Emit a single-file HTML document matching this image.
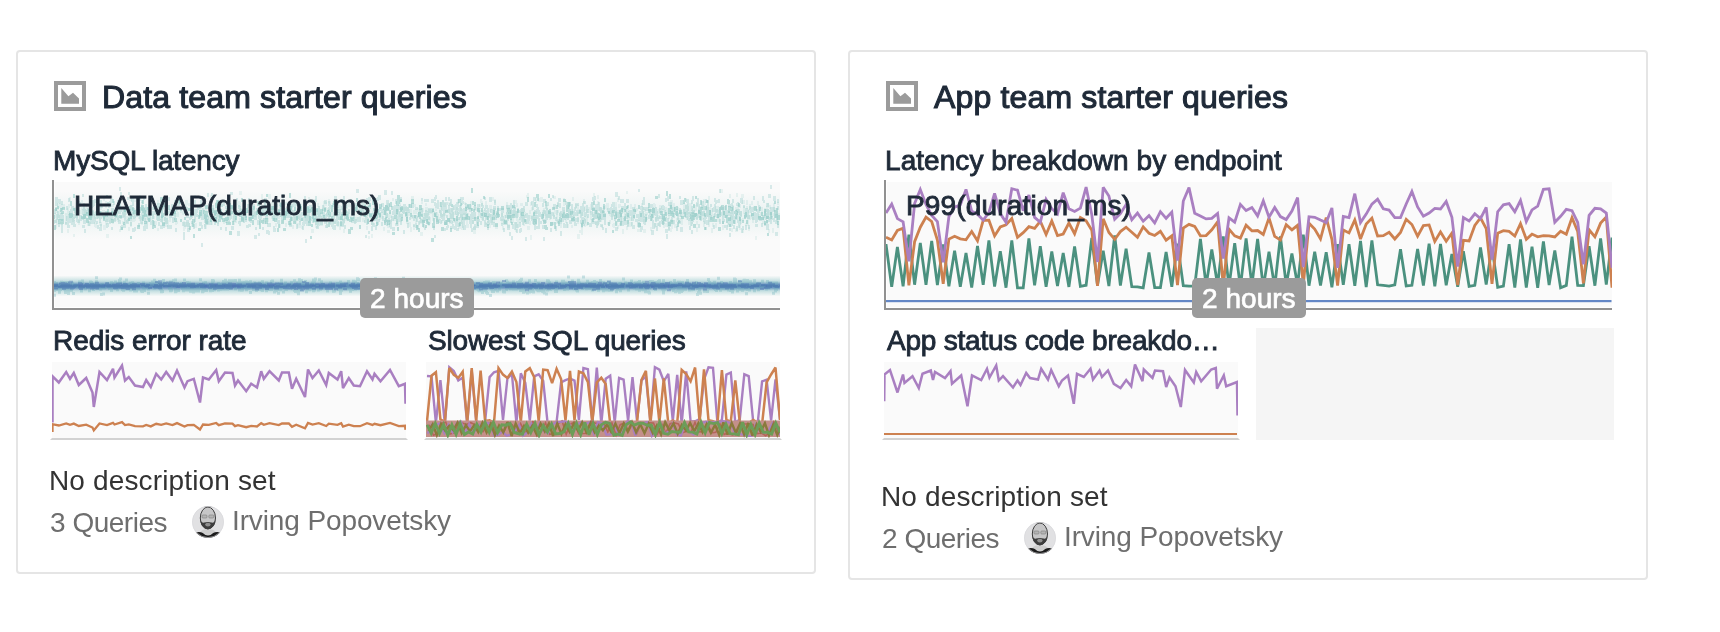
<!DOCTYPE html><html lang="en"><head><meta charset="utf-8"><title>Boards</title><style>
html,body{margin:0;padding:0;background:#fff}
body{width:1720px;height:632px;position:relative;overflow:hidden;font-family:"Liberation Sans",sans-serif}
.card{position:absolute;box-sizing:border-box;border:2px solid #e5e5e5;border-radius:4px;background:#fff}
.t{position:absolute;white-space:nowrap;margin:0;will-change:transform;-webkit-font-smoothing:antialiased}
.badge{position:absolute;background:#9b9b9b;border-radius:5px}
.ph{position:absolute;background:#f5f5f5}
svg{position:absolute;left:0;top:0}
</style></head><body><div class="card" style="left:16px;top:50px;width:800px;height:524px"></div><div class="card" style="left:848px;top:50px;width:800px;height:530px"></div><div class="ph" style="left:1256px;top:328px;width:358px;height:112px"></div><svg width="1720" height="632" viewBox="0 0 1720 632"><defs><linearGradient id="bandg" x1="0" y1="0" x2="0" y2="1"><stop offset="0" stop-color="#7fc1ba" stop-opacity="0"/><stop offset="0.27" stop-color="#6fb3ba" stop-opacity="0.4"/><stop offset="0.41" stop-color="#4d7fb5" stop-opacity="0.8"/><stop offset="0.5" stop-color="#466fae" stop-opacity="0.92"/><stop offset="0.59" stop-color="#4d7fb5" stop-opacity="0.8"/><stop offset="0.73" stop-color="#6fb3ba" stop-opacity="0.4"/><stop offset="1" stop-color="#7fc1ba" stop-opacity="0"/></linearGradient><linearGradient id="cloudg" x1="0" y1="0" x2="0" y2="1"><stop offset="0" stop-color="#86c5bf" stop-opacity="0"/><stop offset="0.3" stop-color="#86c5bf" stop-opacity="0.09"/><stop offset="0.5" stop-color="#86c5bf" stop-opacity="0.14"/><stop offset="0.7" stop-color="#86c5bf" stop-opacity="0.09"/><stop offset="1" stop-color="#86c5bf" stop-opacity="0"/></linearGradient><filter id="soft" x="-2%" y="-2%" width="104%" height="104%"><feGaussianBlur stdDeviation="0.55"/></filter><radialGradient id="av" cx="0.5" cy="0.45" r="0.5"><stop offset="0" stop-color="#8d8d8d"/><stop offset="0.5" stop-color="#7a7a7a"/><stop offset="1" stop-color="#cfcfcf"/></radialGradient><clipPath id="c1"><rect x="54" y="182" width="726" height="125"/></clipPath><clipPath id="c2"><rect x="886" y="182" width="726" height="125"/></clipPath><clipPath id="c3"><rect x="52" y="362" width="354" height="76"/></clipPath><clipPath id="c4"><rect x="426" y="362" width="354" height="76"/></clipPath><clipPath id="c5"><rect x="884" y="362" width="354" height="76"/></clipPath><clipPath id="ca"><circle cx="16" cy="16" r="15.9"/></clipPath></defs><g transform="translate(54,81)"><rect x="2" y="2" width="28" height="26" fill="#fff" stroke="#9b9b9b" stroke-width="4"/><path d="M7.3 7 L14.4 15.3 L19 11.7 L25 17.4 V22.7 H7.3 Z" fill="#9b9b9b"/></g><g transform="translate(886,81)"><rect x="2" y="2" width="28" height="26" fill="#fff" stroke="#9b9b9b" stroke-width="4"/><path d="M7.3 7 L14.4 15.3 L19 11.7 L25 17.4 V22.7 H7.3 Z" fill="#9b9b9b"/></g><rect x="55" y="182" width="725" height="125" fill="#fafafa"/><g clip-path="url(#c1)"><rect x="54" y="191" width="726" height="48" fill="url(#cloudg)"/><g filter="url(#soft)"><path d="M516 203h2v4h-2zM752 217h2v5h-2zM674 224h3v4h-3zM117 215h2v4h-2zM419 205h2v3h-2zM108 211h2v4h-2zM496 212h3v3h-3zM764 208h2v5h-2zM588 207h3v3h-3zM129 197h3v4h-3zM278 215h2v4h-2zM126 209h2v4h-2zM695 207h2v4h-2zM166 216h2v5h-2zM458 224h3v5h-3zM641 203h2v4h-2zM703 221h2v3h-2zM308 216h2v4h-2zM627 221h2v5h-2zM396 213h2v3h-2zM143 213h2v3h-2zM145 216h3v5h-3zM515 211h3v5h-3zM387 203h2v4h-2zM642 211h2v3h-2zM183 228h2v3h-2zM452 216h2v4h-2zM325 202h2v4h-2zM151 195h2v4h-2zM466 218h2v5h-2zM392 198h2v3h-2zM749 216h2v4h-2zM119 229h2v3h-2zM183 221h2v4h-2zM130 205h3v5h-3zM313 211h2v5h-2zM419 220h3v4h-3zM688 220h2v5h-2zM667 210h2v4h-2zM645 212h2v4h-2zM448 202h3v4h-3zM199 212h2v5h-2zM74 211h3v3h-3zM131 212h3v5h-3zM643 229h3v4h-3zM749 204h2v5h-2zM590 204h2v5h-2zM560 224h2v4h-2zM132 216h3v4h-3zM440 207h2v3h-2zM176 209h2v3h-2zM226 213h2v5h-2zM72 217h2v5h-2zM482 214h2v4h-2zM274 198h2v4h-2zM670 200h3v5h-3zM248 215h3v5h-3zM742 218h2v3h-2zM285 202h3v3h-3zM776 218h2v4h-2zM132 213h3v4h-3zM652 214h2v4h-2zM234 213h2v5h-2zM114 210h2v4h-2zM777 202h2v3h-2zM517 220h2v4h-2zM148 204h2v3h-2zM763 217h2v5h-2zM709 214h3v3h-3zM299 225h2v3h-2zM453 212h2v3h-2zM322 208h3v4h-3zM749 215h3v4h-3zM154 221h2v4h-2zM703 223h2v4h-2zM456 214h2v5h-2zM234 216h2v3h-2zM559 213h3v3h-3zM542 210h2v4h-2zM336 211h2v3h-2zM731 216h2v4h-2zM657 215h3v4h-3zM730 215h2v4h-2zM662 209h2v3h-2zM350 216h2v3h-2zM261 219h3v4h-3zM477 218h2v4h-2zM53 213h2v4h-2zM368 213h2v3h-2zM422 218h2v4h-2zM454 211h2v3h-2zM199 207h3v4h-3zM685 198h2v3h-2zM188 224h2v5h-2zM463 213h3v4h-3zM495 224h3v5h-3zM347 202h3v5h-3zM130 221h2v4h-2zM708 222h2v5h-2zM295 220h2v4h-2zM86 218h2v4h-2zM241 217h3v3h-3zM695 213h3v5h-3zM177 212h2v4h-2zM658 211h2v3h-2zM508 207h2v4h-2zM263 213h2v3h-2zM371 234h2v4h-2zM567 224h2v4h-2zM753 206h2v4h-2zM510 219h3v4h-3zM425 213h2v5h-2zM624 212h3v4h-3zM228 206h2v3h-2zM326 208h2v5h-2zM316 212h2v4h-2zM397 222h2v4h-2zM764 222h2v3h-2zM710 208h3v5h-3zM208 215h2v4h-2zM115 217h2v4h-2zM589 209h2v4h-2zM654 204h2v4h-2zM535 211h2v5h-2zM572 217h2v3h-2zM494 199h2v4h-2zM777 219h2v3h-2zM668 225h2v5h-2zM767 212h2v5h-2zM132 213h2v4h-2zM609 213h3v3h-3zM264 205h2v4h-2zM507 224h3v4h-3zM53 217h2v4h-2zM305 217h2v3h-2zM161 201h2v5h-2zM760 212h2v4h-2zM752 220h2v3h-2zM694 213h2v4h-2zM772 213h2v3h-2zM232 219h3v3h-3zM279 205h2v4h-2zM685 204h3v5h-3zM612 214h2v3h-2zM680 209h2v3h-2zM160 204h2v4h-2zM175 204h2v5h-2zM185 203h2v4h-2zM105 201h2v4h-2zM518 220h3v3h-3zM378 213h2v4h-2zM457 211h2v4h-2zM417 213h2v5h-2zM757 201h2v4h-2zM265 200h2v3h-2zM67 212h2v3h-2zM235 201h3v4h-3zM548 212h2v5h-2zM164 216h2v5h-2zM409 222h2v5h-2zM103 211h2v5h-2zM232 205h2v3h-2zM232 216h2v4h-2zM280 213h2v4h-2zM329 220h2v4h-2zM457 199h2v5h-2zM114 216h2v5h-2zM417 208h3v4h-3zM563 202h2v4h-2zM514 205h2v4h-2zM343 229h2v4h-2zM89 222h2v4h-2zM627 215h2v3h-2zM706 207h3v5h-3zM65 213h3v3h-3zM489 205h3v5h-3zM689 203h3v3h-3zM564 213h3v3h-3zM595 222h2v3h-2zM479 211h2v4h-2zM737 205h2v4h-2zM268 194h3v5h-3zM85 217h2v3h-2zM493 208h3v3h-3zM529 210h2v4h-2zM134 199h2v3h-2zM601 209h2v4h-2zM599 216h2v4h-2zM284 216h2v4h-2zM534 221h2v4h-2zM611 211h2v5h-2zM572 197h2v4h-2zM763 215h2v4h-2zM107 203h2v3h-2zM75 207h2v4h-2zM563 198h2v5h-2zM466 221h2v4h-2zM643 219h2v3h-2zM657 209h3v4h-3zM581 222h2v3h-2zM723 212h2v4h-2zM715 206h2v4h-2zM342 208h2v4h-2zM670 203h3v4h-3zM491 217h3v5h-3zM275 223h2v4h-2zM742 229h2v4h-2zM554 210h2v4h-2zM549 213h2v5h-2zM300 204h2v5h-2zM264 218h2v4h-2zM572 215h2v5h-2zM584 216h3v5h-3zM747 215h3v5h-3zM216 213h3v4h-3zM458 219h2v5h-2zM123 213h2v4h-2zM686 205h2v4h-2zM352 210h2v4h-2zM441 220h2v3h-2zM324 207h3v3h-3zM139 195h2v4h-2zM766 215h2v4h-2zM354 219h2v4h-2zM597 216h2v4h-2zM315 213h2v5h-2zM158 206h2v4h-2zM366 226h2v4h-2zM698 209h3v4h-3zM430 210h2v4h-2zM377 214h3v4h-3zM318 208h2v5h-2zM56 207h2v3h-2zM228 221h2v3h-2zM715 224h2v4h-2zM243 211h3v5h-3zM610 214h2v3h-2zM424 217h2v4h-2zM54 214h2v4h-2zM312 213h2v3h-2zM553 213h2v4h-2zM166 212h2v3h-2zM563 210h2v3h-2zM652 213h3v3h-3zM88 204h2v3h-2zM466 221h2v3h-2zM465 206h2v4h-2zM702 214h2v5h-2zM309 219h2v3h-2zM308 219h3v4h-3zM651 212h2v4h-2zM699 206h2v5h-2zM233 221h2v4h-2zM543 208h2v5h-2zM522 212h2v5h-2zM139 216h2v5h-2zM470 201h2v4h-2zM532 216h2v4h-2zM713 214h2v4h-2zM280 206h2v5h-2zM522 218h2v4h-2zM646 217h2v3h-2zM493 212h3v5h-3zM619 223h2v3h-2zM146 215h2v3h-2zM218 213h2v3h-2zM328 209h3v4h-3zM739 211h3v5h-3zM280 211h2v4h-2zM557 210h2v3h-2zM311 214h2v4h-2zM336 213h2v4h-2zM673 210h2v4h-2zM114 215h2v4h-2zM295 211h2v4h-2zM692 213h3v4h-3zM627 207h2v5h-2zM368 236h2v3h-2zM642 207h2v5h-2zM85 208h2v5h-2zM617 198h2v4h-2zM437 214h2v4h-2zM568 209h3v5h-3zM615 222h3v3h-3zM538 198h2v4h-2zM712 223h2v4h-2zM465 217h2v4h-2zM510 216h2v4h-2zM97 215h3v4h-3zM451 208h3v4h-3zM225 210h2v4h-2zM540 197h3v5h-3zM271 214h2v5h-2zM345 205h3v4h-3zM419 206h2v4h-2zM773 203h2v5h-2zM569 202h2v4h-2zM515 214h2v3h-2zM387 224h3v4h-3zM515 223h3v4h-3zM708 196h2v4h-2zM217 200h2v3h-2zM103 225h3v5h-3zM136 197h2v3h-2zM81 207h2v3h-2zM56 219h3v3h-3zM169 218h2v4h-2zM231 211h2v4h-2zM740 219h2v5h-2zM396 221h2v4h-2zM559 212h2v5h-2zM488 214h3v3h-3zM371 222h2v3h-2zM493 213h2v4h-2zM157 209h2v3h-2zM766 206h2v5h-2zM461 226h3v4h-3zM161 205h3v5h-3zM141 202h2v4h-2zM273 208h2v5h-2zM239 218h2v4h-2zM591 202h3v4h-3zM739 212h2v4h-2zM596 212h3v3h-3zM520 203h3v3h-3zM165 224h3v3h-3zM436 212h2v4h-2zM240 208h2v4h-2zM90 206h2v5h-2zM128 215h2v4h-2zM73 234h2v3h-2zM626 191h2v3h-2zM407 212h3v4h-3zM472 219h2v5h-2zM346 212h3v5h-3zM117 218h2v4h-2zM59 210h2v4h-2zM372 220h2v5h-2zM509 209h3v5h-3zM690 210h2v4h-2zM702 207h3v3h-3zM666 210h2v5h-2zM581 212h3v4h-3zM428 209h3v3h-3zM583 199h2v5h-2zM470 205h2v4h-2zM597 222h2v4h-2zM535 198h2v5h-2zM54 213h2v4h-2zM418 210h2v3h-2zM533 211h3v3h-3zM89 209h2v4h-2zM597 195h2v4h-2zM259 205h2v4h-2zM296 216h2v5h-2zM164 205h2v3h-2zM133 216h3v5h-3zM390 219h2v3h-2zM594 214h3v5h-3zM60 204h2v5h-2zM512 216h2v5h-2zM133 215h2v4h-2zM162 216h3v5h-3zM711 212h2v4h-2zM57 206h2v4h-2zM523 222h2v4h-2zM679 218h3v3h-3zM451 214h3v3h-3zM761 207h2v3h-2zM218 202h3v4h-3zM105 211h3v3h-3zM680 219h3v4h-3zM769 205h2v4h-2zM662 218h3v3h-3zM219 201h2v4h-2zM452 220h3v3h-3zM460 222h3v4h-3zM158 217h2v4h-2zM299 219h2v3h-2zM577 218h2v4h-2zM676 218h3v4h-3zM211 221h2v4h-2zM204 224h2v3h-2zM319 213h3v4h-3zM340 217h3v4h-3zM128 227h2v4h-2zM644 209h2v3h-2zM305 208h2v3h-2zM266 218h3v4h-3zM643 213h2v4h-2zM91 211h3v4h-3zM122 221h2v3h-2zM291 203h2v4h-2zM708 220h2v5h-2zM366 214h2v3h-2zM515 200h2v4h-2zM743 206h2v4h-2zM620 212h2v4h-2zM105 204h2v4h-2zM173 208h2v3h-2zM688 206h2v5h-2zM251 208h2v4h-2zM449 213h2v5h-2zM294 217h3v5h-3zM768 229h2v4h-2zM630 204h2v5h-2zM272 209h2v5h-2zM622 216h2v3h-2zM333 221h3v3h-3zM361 207h3v4h-3zM97 213h3v3h-3zM388 214h3v4h-3zM531 207h2v4h-2zM643 214h2v4h-2zM386 213h2v4h-2zM204 208h3v4h-3zM343 219h2v5h-2zM621 218h2v4h-2zM403 207h3v4h-3zM323 203h2v5h-2zM284 214h2v3h-2zM661 218h3v3h-3zM381 212h2v4h-2zM770 212h3v5h-3zM289 221h3v5h-3zM67 211h3v4h-3zM358 210h3v4h-3zM730 211h3v3h-3zM210 195h2v4h-2zM460 217h2v5h-2zM206 221h3v3h-3zM173 213h3v3h-3zM506 209h2v5h-2zM718 207h2v3h-2zM223 220h2v4h-2zM116 206h2v4h-2zM375 212h3v4h-3zM732 205h2v5h-2zM84 211h3v4h-3zM602 209h3v5h-3zM510 217h3v4h-3zM575 204h3v5h-3zM678 212h3v4h-3zM166 197h2v4h-2zM126 216h2v3h-2zM527 226h3v4h-3zM683 207h2v5h-2zM659 206h2v4h-2zM57 216h2v4h-2zM113 214h2v5h-2zM483 213h3v4h-3zM619 204h2v3h-2zM723 210h2v3h-2zM234 212h2v5h-2zM658 222h2v4h-2zM731 228h2v4h-2zM359 212h3v5h-3zM534 217h3v3h-3zM128 206h2v4h-2zM450 216h3v4h-3zM546 205h2v5h-2zM707 212h2v5h-2zM599 207h2v5h-2zM186 222h3v4h-3zM727 223h2v4h-2zM217 219h2v5h-2zM238 202h3v5h-3zM665 207h2v4h-2zM390 215h2v3h-2zM435 214h3v5h-3zM474 207h3v4h-3zM515 222h3v5h-3zM315 214h2v4h-2zM212 210h2v3h-2zM460 206h2v5h-2zM493 219h2v4h-2zM501 219h2v5h-2zM700 215h3v5h-3zM123 207h2v4h-2zM421 201h2v3h-2zM432 215h2v3h-2zM522 214h3v4h-3zM569 214h3v4h-3zM452 206h2v4h-2zM138 214h3v5h-3zM407 207h2v4h-2zM332 214h2v3h-2zM94 214h2v5h-2zM53 219h3v3h-3zM231 209h2v3h-2zM57 203h3v5h-3zM427 219h2v4h-2zM778 213h2v4h-2zM415 209h2v5h-2zM134 211h3v3h-3zM111 196h2v4h-2zM175 213h2v4h-2zM461 214h2v3h-2zM328 214h3v3h-3zM78 220h2v5h-2zM746 206h2v3h-2zM194 223h3v4h-3zM326 223h2v5h-2zM607 222h2v3h-2zM263 199h2v4h-2zM504 215h2v4h-2zM567 205h2v4h-2zM667 208h2v5h-2zM103 196h2v5h-2zM208 216h3v4h-3zM152 216h3v3h-3zM464 217h3v3h-3zM521 208h3v4h-3zM226 214h2v4h-2zM99 222h3v4h-3zM260 209h3v3h-3zM581 228h2v4h-2zM664 223h3v4h-3zM172 206h2v4h-2zM772 228h2v5h-2zM671 225h2v4h-2zM432 217h2v4h-2zM215 213h2v4h-2zM368 211h2v5h-2zM83 215h3v5h-3zM487 218h2v5h-2zM77 208h2v4h-2zM456 207h2v3h-2zM646 212h2v3h-2zM337 207h2v4h-2zM263 212h2v3h-2zM746 200h2v5h-2zM439 208h2v5h-2zM313 199h3v3h-3zM210 218h2v4h-2zM577 212h2v4h-2zM627 205h2v3h-2zM746 222h3v4h-3zM692 208h3v4h-3zM350 204h3v3h-3zM106 219h2v5h-2zM600 218h2v4h-2zM761 210h2v4h-2zM116 210h3v3h-3zM711 215h3v3h-3zM747 219h2v3h-2zM187 223h3v4h-3zM655 217h2v4h-2zM720 189h3v4h-3zM297 223h2v5h-2zM257 209h2v5h-2zM413 211h2v3h-2zM311 210h3v4h-3zM634 204h2v5h-2zM333 199h2v4h-2zM136 210h3v4h-3zM337 222h3v5h-3zM320 222h3v4h-3zM140 217h3v3h-3zM158 212h2v5h-2zM175 221h2v4h-2zM601 208h2v4h-2zM401 213h2v4h-2zM323 215h2v4h-2zM220 203h3v4h-3zM243 211h2v4h-2zM362 218h3v4h-3zM423 213h3v3h-3zM222 213h2v3h-2zM56 219h2v4h-2zM380 214h3v3h-3zM557 203h2v4h-2zM318 214h2v3h-2zM696 227h2v5h-2zM742 200h3v4h-3zM745 223h3v3h-3zM556 220h3v4h-3zM154 207h2v4h-2zM530 235h2v5h-2zM299 211h2v3h-2zM410 210h2v3h-2zM627 217h3v4h-3zM748 209h2v4h-2zM304 214h3v3h-3zM612 224h3v3h-3zM380 215h3v4h-3zM506 202h2v5h-2zM773 207h2v4h-2zM549 215h2v5h-2zM480 210h3v3h-3zM130 222h2v5h-2zM494 211h2v5h-2zM486 216h3v3h-3zM389 220h2v4h-2zM489 207h2v5h-2zM65 216h2v4h-2zM117 205h3v4h-3zM383 227h2v4h-2zM345 211h2v4h-2zM194 195h2v3h-2zM298 216h2v5h-2zM67 208h2v5h-2zM263 218h2v3h-2zM112 212h3v4h-3zM339 227h2v3h-2zM56 209h2v4h-2zM440 213h2v3h-2zM106 234h3v4h-3zM643 213h2v3h-2zM323 201h3v5h-3zM57 215h2v4h-2zM226 220h2v3h-2zM677 207h2v4h-2zM90 214h3v4h-3zM767 209h2v4h-2zM449 220h2v4h-2zM238 202h3v5h-3zM775 208h2v4h-2zM311 229h3v4h-3zM428 211h2v4h-2zM489 223h2v5h-2zM336 208h2v3h-2zM216 206h2v4h-2zM375 201h3v5h-3zM618 214h2v4h-2zM571 225h2v3h-2zM150 217h3v4h-3zM239 212h3v3h-3zM613 223h2v5h-2zM237 201h3v4h-3zM94 212h2v4h-2zM285 223h2v4h-2zM717 217h3v5h-3zM696 221h2v4h-2zM411 196h3v5h-3zM518 219h2v3h-2zM527 193h2v5h-2zM239 191h3v4h-3zM777 216h3v4h-3zM513 210h2v5h-2zM617 210h2v4h-2zM57 214h3v4h-3zM188 203h3v3h-3zM693 205h3v4h-3zM229 203h2v4h-2zM481 201h2v5h-2zM227 208h2v4h-2zM421 208h3v4h-3zM338 217h2v3h-2zM308 197h2v5h-2zM204 206h3v4h-3zM243 206h2v5h-2zM359 205h3v4h-3zM596 210h2v4h-2zM492 215h2v4h-2zM126 217h2v3h-2zM152 214h2v5h-2zM271 208h3v5h-3zM703 199h2v4h-2zM400 208h3v4h-3zM586 209h2v4h-2zM353 208h2v4h-2zM581 231h2v4h-2zM103 216h2v4h-2zM597 201h2v4h-2zM105 211h2v3h-2zM102 214h2v4h-2zM213 211h3v4h-3zM69 197h2v4h-2zM126 219h2v4h-2zM389 212h2v4h-2zM766 211h2v4h-2zM148 210h3v5h-3zM435 208h2v3h-2zM529 210h2v4h-2zM553 196h3v3h-3zM62 204h3v5h-3zM418 209h3v4h-3zM68 204h2v4h-2zM704 202h2v3h-2zM60 222h3v3h-3zM584 224h2v3h-2zM357 203h2v4h-2zM517 212h2v5h-2zM354 217h3v4h-3zM648 208h3v3h-3zM55 225h2v4h-2zM215 202h3v4h-3zM634 204h2v4h-2zM191 223h2v4h-2zM572 209h2v4h-2zM613 213h2v3h-2zM292 225h2v4h-2zM157 216h3v5h-3zM180 209h2v4h-2zM105 220h2v5h-2zM669 205h2v5h-2zM138 213h2v4h-2zM442 200h2v5h-2zM345 217h2v4h-2zM294 218h2v5h-2zM305 217h3v4h-3zM367 201h3v5h-3zM729 194h2v4h-2zM373 218h2v3h-2zM432 211h3v4h-3zM620 215h2v3h-2zM220 213h3v4h-3zM318 213h3v4h-3zM83 207h3v4h-3zM735 228h3v4h-3zM505 219h2v3h-2zM330 212h3v4h-3zM243 217h2v3h-2zM758 214h3v4h-3zM54 220h3v3h-3zM654 223h3v4h-3zM214 217h3v4h-3zM480 199h2v4h-2zM741 194h3v4h-3zM192 213h3v3h-3zM414 204h2v3h-2zM282 197h2v4h-2zM328 199h2v4h-2zM739 225h2v5h-2zM617 225h2v4h-2zM167 220h2v5h-2zM426 214h2v4h-2zM271 202h3v5h-3zM738 213h2v4h-2zM530 202h2v4h-2zM319 212h3v4h-3zM406 220h3v4h-3zM466 224h3v4h-3zM479 204h2v5h-2zM114 215h3v5h-3zM218 213h2v4h-2zM153 206h2v4h-2zM679 213h2v4h-2zM670 219h2v3h-2zM75 215h3v3h-3zM439 202h2v5h-2zM504 217h2v4h-2zM473 226h3v5h-3zM291 208h2v4h-2zM681 221h2v4h-2zM425 203h2v3h-2zM636 208h2v3h-2zM711 228h2v5h-2zM523 209h2v5h-2zM609 220h2v4h-2zM622 229h2v5h-2zM339 205h2v5h-2zM703 205h2v4h-2zM668 209h3v3h-3zM53 217h2v4h-2zM443 213h3v3h-3zM155 221h2v4h-2zM769 215h2v5h-2zM686 211h2v4h-2zM177 212h2v5h-2zM722 225h2v5h-2zM548 210h2v4h-2zM56 222h2v3h-2zM132 218h3v4h-3zM234 213h3v5h-3zM467 213h2v4h-2zM516 213h2v4h-2zM135 209h2v4h-2zM404 209h2v4h-2zM691 222h2v4h-2zM737 209h2v4h-2zM165 220h2v5h-2zM501 213h2v4h-2zM410 227h2v5h-2zM637 229h3v3h-3zM590 206h2v4h-2zM122 209h2v5h-2zM502 226h2v4h-2zM696 203h2v3h-2zM183 225h3v4h-3zM635 208h2v4h-2zM116 215h2v5h-2zM164 213h2v5h-2zM577 221h2v3h-2zM686 216h2v4h-2zM413 225h2v5h-2zM579 230h2v3h-2zM141 208h2v5h-2zM606 203h3v5h-3zM671 213h2v4h-2zM157 228h2v3h-2zM425 207h3v5h-3zM391 206h2v4h-2zM511 219h3v4h-3zM313 218h3v5h-3zM501 219h2v4h-2zM482 210h3v4h-3zM543 211h3v5h-3zM592 204h2v4h-2zM663 224h2v4h-2zM503 219h3v5h-3zM112 220h2v4h-2zM664 215h3v3h-3zM738 215h2v5h-2zM271 211h2v4h-2zM706 212h2v4h-2zM158 212h2v4h-2zM343 220h2v3h-2zM683 203h2v4h-2zM520 211h2v4h-2zM411 215h2v4h-2zM407 220h2v3h-2zM109 220h3v3h-3zM670 228h2v4h-2zM182 211h2v4h-2zM524 212h2v4h-2zM622 208h2v5h-2zM118 217h2v4h-2zM74 207h3v3h-3zM659 205h3v4h-3zM715 209h3v3h-3zM291 217h2v4h-2zM372 211h2v3h-2zM79 210h3v4h-3zM282 219h2v4h-2zM279 224h2v4h-2zM469 207h3v3h-3zM289 209h2v4h-2zM491 219h2v4h-2zM115 215h2v5h-2zM342 222h2v4h-2zM86 208h2v3h-2zM272 215h3v4h-3zM600 208h3v5h-3zM626 226h2v4h-2zM415 210h2v4h-2zM709 207h2v4h-2zM428 217h3v4h-3zM178 200h2v3h-2zM702 205h3v5h-3zM260 207h3v5h-3zM694 208h2v3h-2zM492 219h2v4h-2zM561 213h2v5h-2zM73 217h2v4h-2zM515 224h3v5h-3zM668 215h2v4h-2zM89 216h2v4h-2zM654 224h2v4h-2zM485 222h2v3h-2zM262 210h2v5h-2zM387 203h2v4h-2zM606 207h2v3h-2zM301 225h2v4h-2zM687 207h3v4h-3zM95 223h2v5h-2zM653 203h2v5h-2zM87 222h3v4h-3zM616 214h3v4h-3zM521 214h2v4h-2zM124 208h2v4h-2zM159 205h2v4h-2zM337 212h3v3h-3zM194 224h3v4h-3zM762 220h2v4h-2zM601 225h2v3h-2zM234 219h3v4h-3zM445 222h3v3h-3zM116 209h2v4h-2zM187 225h3v3h-3zM459 217h2v4h-2zM458 219h3v4h-3zM271 206h2v3h-2zM261 194h2v5h-2zM124 211h3v4h-3zM393 218h3v3h-3zM473 231h3v3h-3zM584 206h2v5h-2zM399 200h2v5h-2zM227 212h2v3h-2zM185 206h2v4h-2zM671 207h2v3h-2zM736 193h2v4h-2zM386 214h3v4h-3zM342 218h3v3h-3zM472 218h2v4h-2zM333 204h3v5h-3zM279 210h2v3h-2zM428 221h2v5h-2zM115 210h2v4h-2zM507 214h3v4h-3zM705 208h3v3h-3zM506 207h2v3h-2zM306 207h3v4h-3zM503 220h3v4h-3zM464 202h2v3h-2zM689 216h2v5h-2zM605 205h2v4h-2zM585 216h3v4h-3zM460 214h2v4h-2zM674 206h2v4h-2zM688 211h3v3h-3zM526 195h2v3h-2zM716 206h3v4h-3zM638 220h2v4h-2zM556 215h2v4h-2zM65 219h2v5h-2zM420 232h3v4h-3zM701 206h3v4h-3zM205 225h2v4h-2zM715 223h2v5h-2zM160 216h2v4h-2zM326 220h2v3h-2zM695 215h3v4h-3zM363 209h3v4h-3zM682 212h2v5h-2zM739 204h2v4h-2zM703 207h2v5h-2zM681 216h2v3h-2zM365 210h2v3h-2zM254 212h2v5h-2zM399 212h2v5h-2zM577 234h3v5h-3zM460 208h2v3h-2zM137 201h2v3h-2zM473 206h3v3h-3zM673 203h2v4h-2zM102 210h3v4h-3zM767 203h2v5h-2zM712 218h2v3h-2zM671 220h3v5h-3zM329 201h2v3h-2zM67 229h2v4h-2zM379 216h2v4h-2zM452 212h3v3h-3zM650 227h2v4h-2zM689 206h2v4h-2zM512 216h2v5h-2zM443 203h3v4h-3zM234 205h3v3h-3zM94 222h2v5h-2zM415 218h2v5h-2zM735 207h2v4h-2zM529 221h2v4h-2zM754 206h3v4h-3zM525 220h2v4h-2zM577 206h2v4h-2zM429 221h2v3h-2zM404 207h3v4h-3zM315 223h3v5h-3zM630 217h2v4h-2zM402 210h2v4h-2zM157 200h2v5h-2zM396 209h3v3h-3zM485 201h2v4h-2zM313 218h3v4h-3zM326 212h2v4h-2zM615 202h2v5h-2zM410 209h2v5h-2zM264 202h3v4h-3zM751 201h2v4h-2zM406 214h2v4h-2zM161 219h2v4h-2zM206 222h2v3h-2zM213 208h3v4h-3zM743 210h2v4h-2zM618 204h2v4h-2zM185 200h3v5h-3zM509 215h2v3h-2zM316 221h3v4h-3zM240 208h3v4h-3zM81 200h2v3h-2zM585 219h3v4h-3zM258 207h2v4h-2zM438 217h2v3h-2zM330 209h2v5h-2zM317 203h2v4h-2zM530 215h3v4h-3zM184 210h2v4h-2zM478 213h2v4h-2zM592 212h3v5h-3zM164 219h2v5h-2zM234 216h3v5h-3zM267 204h2v4h-2zM441 214h2v3h-2zM422 214h2v4h-2zM577 205h2v4h-2zM629 222h3v5h-3zM755 236h2v4h-2zM413 210h3v3h-3zM281 212h2v3h-2zM387 230h3v3h-3zM145 207h2v5h-2zM175 221h3v3h-3zM420 218h3v4h-3zM748 227h2v4h-2zM515 228h2v4h-2zM590 215h2v5h-2zM743 208h2v4h-2zM702 212h3v4h-3zM597 219h3v5h-3zM481 217h3v3h-3zM448 209h2v4h-2zM308 207h2v4h-2zM106 202h3v3h-3zM426 213h2v4h-2zM188 208h3v3h-3zM492 197h2v4h-2zM759 214h2v4h-2zM707 200h2v3h-2zM572 216h2v3h-2zM307 215h2v4h-2zM565 219h2v4h-2zM141 222h2v3h-2zM99 206h3v4h-3zM776 211h2v4h-2zM110 218h2v3h-2zM586 222h2v4h-2zM400 218h2v4h-2zM112 204h2v3h-2zM309 208h3v3h-3zM370 214h2v5h-2zM546 214h3v4h-3zM86 206h2v5h-2zM516 217h2v4h-2zM593 193h2v4h-2z" fill="#86c5bf" fill-opacity="0.16"/><path d="M225 206h2v3h-2zM492 210h2v4h-2zM192 210h2v5h-2zM603 211h2v4h-2zM619 215h3v5h-3zM571 206h2v5h-2zM358 217h3v5h-3zM477 204h3v3h-3zM753 212h3v3h-3zM571 216h2v4h-2zM143 226h3v5h-3zM363 205h2v3h-2zM492 213h2v4h-2zM387 219h2v3h-2zM503 221h3v4h-3zM732 209h2v4h-2zM451 221h2v3h-2zM326 213h3v4h-3zM483 213h2v4h-2zM187 213h2v5h-2zM281 214h2v4h-2zM299 214h2v4h-2zM358 209h2v5h-2zM304 205h2v5h-2zM447 225h2v3h-2zM177 207h2v3h-2zM434 197h2v4h-2zM144 223h2v3h-2zM509 214h2v4h-2zM501 211h2v3h-2zM673 220h2v4h-2zM105 217h3v5h-3zM478 210h2v3h-2zM630 210h3v5h-3zM91 203h2v5h-2zM557 220h2v3h-2zM732 216h3v4h-3zM435 203h2v5h-2zM632 225h3v4h-3zM521 208h3v5h-3zM236 198h2v3h-2zM354 203h3v5h-3zM166 208h2v4h-2zM122 212h2v4h-2zM731 218h3v5h-3zM485 205h3v4h-3zM698 210h2v4h-2zM615 227h3v4h-3zM402 210h3v3h-3zM706 212h2v5h-2zM244 214h3v4h-3zM57 211h2v5h-2zM144 218h2v4h-2zM108 205h2v3h-2zM600 224h3v3h-3zM537 210h3v4h-3zM455 208h2v3h-2zM559 203h2v5h-2zM742 226h2v4h-2zM513 224h3v5h-3zM197 207h2v3h-2zM628 211h3v4h-3zM420 211h3v3h-3zM111 227h2v3h-2zM337 214h3v3h-3zM443 202h2v5h-2zM184 222h2v5h-2zM437 205h2v4h-2zM757 214h2v5h-2zM494 215h2v4h-2zM96 221h2v3h-2zM191 212h3v3h-3zM765 214h2v5h-2zM418 213h2v4h-2zM528 216h2v5h-2zM450 199h2v5h-2zM659 209h2v4h-2zM134 214h2v4h-2zM670 203h2v4h-2zM392 212h2v3h-2zM115 214h2v4h-2zM652 211h3v4h-3zM264 221h2v3h-2zM444 210h2v3h-2zM300 217h3v4h-3zM729 218h2v4h-2zM741 228h2v5h-2zM187 223h3v3h-3zM156 215h2v5h-2zM366 221h2v4h-2zM747 210h2v3h-2zM389 223h3v4h-3zM728 204h2v3h-2zM201 211h2v4h-2zM379 212h2v4h-2zM508 205h2v4h-2zM592 197h3v4h-3zM704 217h2v5h-2zM773 207h2v5h-2zM615 207h2v4h-2zM75 215h3v3h-3zM406 210h2v5h-2zM538 224h2v5h-2zM184 210h2v4h-2zM88 212h2v5h-2zM511 213h3v3h-3zM366 212h2v4h-2zM263 208h2v4h-2zM88 221h2v5h-2zM148 215h3v3h-3zM764 213h2v4h-2zM465 203h2v5h-2zM629 210h3v4h-3zM434 212h3v5h-3zM289 209h3v4h-3zM287 205h3v4h-3zM584 212h3v4h-3zM258 221h2v4h-2zM769 210h3v5h-3zM775 220h3v4h-3zM96 215h2v4h-2zM765 209h2v3h-2zM365 217h3v4h-3zM61 208h2v3h-2zM365 214h2v5h-2zM252 205h2v5h-2zM478 219h2v3h-2zM520 228h2v4h-2zM708 215h3v4h-3zM469 217h3v5h-3zM259 215h3v4h-3zM503 228h2v4h-2zM733 225h2v4h-2zM344 204h2v4h-2zM259 212h3v3h-3zM203 215h2v4h-2zM487 208h2v4h-2zM93 214h2v5h-2zM66 216h3v5h-3zM214 221h2v4h-2zM131 198h3v4h-3zM679 209h2v5h-2zM83 206h2v4h-2zM770 219h2v5h-2zM570 210h3v4h-3zM285 212h2v4h-2zM712 208h3v4h-3zM139 216h3v3h-3zM723 219h2v3h-2zM736 226h2v5h-2zM160 225h3v4h-3zM768 194h3v4h-3zM172 209h2v4h-2zM706 207h3v5h-3zM419 209h2v4h-2zM448 205h2v4h-2zM239 206h2v3h-2zM363 212h3v4h-3zM567 213h3v5h-3zM244 212h3v5h-3zM637 214h3v4h-3zM219 215h2v3h-2zM480 213h2v5h-2zM515 215h3v3h-3zM259 208h3v4h-3zM434 235h2v3h-2zM415 207h2v3h-2zM69 214h2v3h-2zM274 200h2v4h-2zM618 214h2v5h-2zM725 212h3v4h-3zM459 206h2v4h-2zM592 207h2v4h-2zM575 203h2v5h-2zM527 220h2v4h-2zM691 206h2v5h-2zM581 223h2v5h-2zM418 221h2v4h-2zM484 223h3v4h-3zM237 231h3v5h-3zM421 208h2v4h-2zM599 214h2v4h-2zM264 210h2v4h-2zM716 209h2v3h-2zM440 211h2v4h-2zM685 210h2v3h-2zM618 217h3v3h-3zM348 209h2v5h-2zM140 219h2v5h-2zM396 208h2v5h-2zM462 201h2v3h-2zM396 211h2v4h-2zM180 208h2v3h-2zM316 219h2v3h-2zM306 211h3v5h-3zM688 213h3v3h-3zM113 201h2v4h-2zM210 211h2v4h-2zM562 207h3v5h-3zM109 213h2v5h-2zM106 223h3v4h-3zM484 197h2v3h-2zM372 223h3v4h-3zM501 216h3v5h-3zM617 212h2v3h-2zM643 197h2v4h-2zM199 212h3v4h-3zM54 209h2v5h-2zM487 221h2v5h-2zM477 206h2v5h-2zM302 222h3v3h-3zM396 210h3v4h-3zM398 217h3v3h-3zM61 201h2v4h-2zM459 209h2v5h-2zM83 203h2v4h-2zM558 198h3v4h-3zM596 215h2v4h-2zM523 207h2v5h-2zM521 218h2v4h-2zM428 208h2v4h-2zM526 213h2v5h-2zM425 214h2v3h-2zM745 212h3v4h-3zM637 222h3v5h-3zM242 214h2v3h-2zM193 224h2v5h-2zM281 209h2v5h-2zM762 196h2v5h-2zM623 218h2v3h-2zM86 210h3v4h-3zM520 214h2v3h-2zM455 207h3v4h-3zM123 207h2v3h-2zM490 217h3v4h-3zM117 216h2v4h-2zM225 218h2v5h-2zM72 214h3v5h-3zM201 212h2v5h-2zM165 206h2v4h-2zM408 209h2v4h-2zM482 212h3v5h-3zM425 210h2v3h-2zM569 220h3v4h-3zM691 230h2v4h-2zM566 222h2v4h-2zM382 203h2v3h-2zM569 209h2v4h-2zM106 225h2v3h-2zM83 206h2v3h-2zM134 227h2v4h-2zM570 215h2v3h-2zM233 212h3v5h-3zM723 211h2v5h-2zM455 206h2v4h-2zM177 203h3v3h-3zM728 221h2v4h-2zM297 216h2v3h-2zM217 208h2v4h-2zM555 226h2v5h-2zM543 210h3v4h-3zM321 216h2v5h-2zM544 219h3v4h-3zM560 213h2v3h-2zM666 234h2v5h-2zM371 217h2v3h-2zM117 208h2v5h-2zM227 211h3v5h-3zM561 218h3v4h-3zM258 215h2v4h-2zM355 207h2v5h-2zM227 208h3v4h-3zM71 220h2v5h-2zM388 204h2v4h-2zM602 211h3v5h-3zM280 214h2v3h-2zM471 212h2v4h-2zM375 225h2v5h-2zM114 212h2v4h-2zM69 213h3v5h-3zM250 207h3v3h-3zM660 209h2v4h-2zM651 214h2v4h-2zM777 199h2v4h-2zM488 222h2v3h-2zM651 214h3v4h-3zM273 215h2v4h-2zM514 222h3v4h-3zM357 217h2v5h-2zM124 218h2v5h-2zM312 207h2v3h-2zM668 226h2v5h-2zM474 205h2v5h-2zM221 215h2v5h-2zM147 215h3v5h-3zM703 206h2v4h-2zM77 200h2v3h-2zM459 208h3v3h-3zM398 205h3v5h-3zM318 206h2v5h-2zM273 226h2v3h-2zM740 198h3v5h-3zM317 211h2v3h-2zM593 197h2v4h-2zM452 224h2v5h-2zM598 206h2v5h-2zM560 214h3v3h-3zM124 212h2v4h-2zM447 218h3v4h-3zM227 213h2v5h-2zM707 220h2v5h-2zM216 215h2v3h-2zM498 208h3v3h-3zM627 205h2v3h-2zM664 217h3v5h-3zM536 215h3v4h-3zM766 224h3v4h-3zM143 210h3v4h-3zM406 216h2v5h-2zM596 210h2v3h-2zM381 203h3v4h-3zM582 207h3v5h-3zM750 210h2v3h-2zM768 217h2v5h-2zM296 224h2v5h-2zM424 199h3v3h-3zM507 217h2v4h-2zM382 218h2v3h-2zM601 216h3v4h-3zM249 205h2v4h-2zM218 204h2v4h-2zM426 213h2v5h-2zM449 210h2v4h-2zM308 212h2v3h-2zM190 213h2v4h-2zM631 215h2v3h-2zM668 221h2v4h-2zM595 206h3v4h-3zM311 217h3v4h-3zM395 223h3v3h-3zM175 201h3v3h-3zM777 224h2v4h-2zM602 227h2v3h-2zM292 210h3v4h-3zM645 207h2v4h-2zM514 226h2v4h-2zM110 203h2v4h-2zM83 220h3v4h-3zM698 204h2v4h-2zM155 211h3v3h-3zM474 224h3v4h-3zM154 207h3v3h-3zM117 200h3v4h-3zM577 203h2v3h-2zM763 200h2v3h-2zM417 225h2v4h-2zM771 216h2v4h-2zM363 203h3v5h-3zM421 198h2v3h-2zM543 199h3v4h-3zM371 220h2v5h-2zM161 215h2v4h-2zM194 213h3v4h-3zM672 207h3v4h-3zM538 210h2v4h-2zM754 212h2v4h-2zM546 208h2v5h-2zM398 206h2v4h-2zM206 219h2v5h-2zM169 209h2v5h-2zM722 220h2v4h-2zM378 219h2v3h-2zM238 221h2v3h-2zM595 204h3v3h-3zM160 219h3v3h-3zM465 210h2v5h-2zM128 206h3v5h-3zM386 222h2v4h-2zM356 189h3v4h-3zM270 211h2v4h-2zM661 220h2v3h-2zM74 208h2v5h-2zM466 205h3v4h-3zM91 219h3v3h-3zM191 221h2v3h-2zM709 210h2v3h-2zM461 216h2v4h-2zM368 231h2v3h-2zM97 225h2v4h-2zM107 213h3v4h-3zM639 211h2v4h-2zM109 221h2v3h-2zM271 210h2v5h-2zM354 219h3v4h-3zM768 218h2v4h-2zM642 200h3v5h-3zM174 213h2v3h-2zM259 208h2v4h-2zM359 207h3v5h-3zM632 214h2v5h-2zM189 217h2v3h-2zM576 210h3v4h-3zM100 224h2v3h-2zM71 218h3v5h-3zM220 227h2v3h-2zM427 221h2v4h-2zM450 226h3v3h-3zM266 209h2v4h-2zM455 211h2v4h-2zM630 212h3v3h-3zM239 221h2v5h-2zM253 204h2v5h-2zM495 217h2v3h-2zM532 205h2v5h-2zM705 215h2v4h-2zM407 223h2v5h-2zM482 205h2v3h-2zM167 225h2v4h-2zM667 218h2v4h-2zM146 209h2v3h-2zM275 214h2v4h-2zM755 219h2v4h-2zM276 213h2v3h-2zM401 207h3v4h-3zM396 208h2v4h-2zM333 225h3v5h-3zM546 211h2v3h-2zM663 216h2v4h-2zM650 214h2v3h-2zM395 199h2v5h-2zM339 209h2v4h-2zM124 210h2v4h-2zM581 211h2v5h-2zM667 223h2v4h-2zM516 229h2v4h-2zM190 214h2v5h-2zM757 212h2v4h-2zM198 205h3v4h-3zM634 210h2v4h-2zM496 211h2v4h-2zM450 215h3v4h-3zM685 214h2v4h-2zM142 213h2v4h-2zM285 213h3v5h-3zM677 213h2v4h-2zM624 206h2v4h-2zM587 209h2v4h-2zM706 205h2v4h-2zM765 214h3v4h-3zM312 210h2v4h-2zM146 221h2v4h-2zM603 211h2v4h-2zM273 228h3v4h-3zM430 208h3v5h-3zM676 212h2v4h-2zM314 215h2v5h-2zM293 218h2v3h-2zM462 223h3v5h-3zM620 214h2v3h-2zM437 200h2v5h-2zM731 213h3v3h-3zM620 220h2v5h-2zM203 214h3v5h-3zM667 220h2v3h-2zM679 208h2v5h-2zM76 217h2v5h-2zM265 214h2v3h-2zM613 206h2v5h-2zM638 223h2v5h-2zM204 224h2v5h-2zM705 199h2v4h-2zM599 216h2v3h-2zM690 220h3v4h-3zM171 207h2v3h-2zM443 209h2v4h-2zM276 204h2v3h-2zM737 209h3v4h-3zM61 229h2v4h-2zM458 217h2v3h-2zM55 199h2v4h-2zM446 209h2v3h-2zM726 225h2v5h-2zM273 214h2v4h-2zM111 208h3v4h-3zM488 220h2v3h-2zM83 215h2v4h-2zM444 222h2v3h-2zM640 226h3v4h-3zM139 198h2v3h-2zM120 216h2v3h-2zM513 207h3v5h-3zM328 201h2v5h-2zM522 221h2v4h-2zM170 209h3v4h-3zM565 215h2v4h-2zM238 205h2v4h-2zM485 215h3v5h-3zM315 221h2v4h-2zM653 208h3v4h-3zM248 217h3v4h-3zM302 226h2v4h-2zM211 205h3v3h-3zM133 208h2v3h-2zM738 222h2v3h-2zM721 212h2v4h-2zM657 223h3v3h-3zM534 215h2v4h-2zM724 206h2v4h-2zM705 227h2v3h-2zM736 213h2v4h-2zM714 213h2v4h-2zM707 205h2v5h-2zM289 223h3v4h-3zM158 222h2v4h-2zM247 210h3v3h-3zM583 201h3v3h-3zM131 208h3v3h-3zM324 220h3v4h-3zM142 214h3v5h-3zM755 215h2v4h-2zM398 213h2v4h-2zM109 201h2v5h-2zM555 217h2v4h-2zM276 216h2v4h-2zM172 219h2v4h-2zM420 219h3v4h-3zM131 210h3v5h-3zM225 210h2v3h-2zM728 218h3v5h-3zM631 217h3v4h-3zM526 214h2v3h-2zM641 215h3v3h-3zM379 214h2v4h-2zM764 223h2v3h-2zM238 206h2v3h-2zM194 217h2v5h-2zM770 207h2v3h-2zM676 209h2v4h-2zM696 216h2v4h-2zM391 206h3v4h-3zM534 218h2v4h-2zM351 218h2v5h-2zM681 200h2v3h-2zM463 208h2v4h-2zM78 202h3v5h-3zM309 205h3v4h-3zM133 216h2v3h-2zM680 212h2v5h-2zM71 206h2v4h-2zM150 221h2v4h-2zM463 220h2v4h-2zM390 224h2v5h-2zM441 214h2v5h-2zM94 217h2v5h-2zM88 215h3v4h-3zM729 228h2v3h-2zM528 215h2v3h-2zM538 218h2v4h-2zM423 224h2v4h-2zM324 218h2v4h-2zM728 211h2v4h-2zM534 210h3v4h-3zM461 219h2v5h-2zM144 207h3v3h-3zM194 209h2v4h-2zM692 219h2v3h-2zM641 206h2v4h-2zM79 215h3v4h-3zM465 215h3v4h-3zM187 228h3v4h-3zM322 205h2v5h-2zM456 202h2v5h-2zM699 212h2v4h-2zM194 200h2v4h-2zM325 214h2v4h-2zM704 218h2v5h-2zM91 212h3v4h-3zM506 212h3v5h-3zM84 213h2v3h-2zM217 222h2v4h-2zM416 216h2v4h-2zM107 202h2v4h-2zM669 222h2v4h-2zM99 227h3v4h-3zM515 215h3v3h-3zM165 199h2v4h-2zM117 211h2v3h-2zM185 207h3v4h-3zM397 211h3v4h-3zM490 219h3v4h-3zM680 212h2v5h-2zM73 220h2v4h-2zM456 210h2v3h-2zM600 213h2v5h-2zM686 205h3v5h-3zM450 211h2v4h-2zM557 219h3v4h-3zM571 204h2v5h-2zM191 214h2v4h-2zM303 221h2v5h-2zM669 222h2v5h-2zM713 225h2v4h-2zM246 225h3v3h-3zM346 211h3v5h-3zM557 202h2v4h-2zM535 222h2v3h-2zM368 205h3v4h-3zM103 215h2v4h-2zM755 224h3v3h-3zM622 222h2v4h-2zM732 206h2v4h-2zM716 214h3v4h-3zM655 212h2v4h-2zM579 209h3v4h-3zM285 208h2v3h-2zM224 218h2v3h-2zM519 217h3v3h-3zM708 217h2v5h-2zM591 206h2v4h-2zM718 212h2v3h-2zM448 209h2v4h-2zM686 199h3v4h-3zM434 202h2v4h-2zM196 209h2v4h-2zM576 218h3v4h-3zM550 198h2v3h-2zM612 211h2v5h-2zM221 204h2v3h-2zM403 210h2v4h-2zM714 198h2v4h-2zM765 216h2v4h-2zM463 225h3v5h-3zM676 226h2v5h-2zM717 210h2v4h-2zM98 212h2v5h-2zM603 214h3v4h-3zM73 224h3v3h-3zM542 217h2v4h-2zM333 219h3v5h-3zM220 211h2v4h-2zM497 206h2v5h-2zM626 212h2v4h-2zM690 217h2v5h-2zM733 218h3v4h-3zM756 217h2v5h-2zM229 215h3v4h-3zM622 221h2v4h-2zM608 209h3v4h-3zM568 209h3v4h-3zM762 215h3v3h-3zM264 201h2v5h-2zM278 210h2v4h-2zM560 221h2v3h-2zM548 211h3v3h-3zM443 216h2v4h-2zM601 212h2v3h-2zM708 212h3v5h-3zM414 215h3v4h-3zM335 211h2v4h-2zM266 230h3v4h-3zM153 221h2v5h-2zM505 221h3v3h-3zM332 203h2v4h-2zM494 200h2v5h-2zM229 208h3v3h-3zM234 212h2v4h-2zM510 205h3v4h-3zM542 225h2v4h-2zM243 218h2v5h-2zM506 205h2v4h-2zM603 206h2v4h-2zM670 202h2v3h-2zM289 208h3v3h-3zM710 217h2v3h-2zM243 209h2v3h-2zM296 216h2v5h-2zM679 196h2v3h-2zM60 213h2v4h-2zM611 204h3v3h-3zM174 209h2v4h-2zM378 195h3v5h-3zM262 205h2v5h-2zM642 207h3v3h-3zM293 213h2v5h-2zM145 225h3v4h-3zM641 218h2v3h-2zM580 208h2v3h-2zM552 195h2v3h-2zM199 213h3v5h-3zM515 211h2v4h-2zM339 215h3v3h-3zM342 219h3v4h-3zM485 215h2v5h-2zM230 213h2v4h-2zM618 196h2v4h-2zM692 196h2v5h-2zM550 222h2v4h-2zM668 213h2v3h-2zM593 216h2v4h-2zM312 218h2v5h-2zM313 202h3v4h-3zM150 213h2v3h-2zM452 212h2v4h-2zM631 222h2v4h-2zM280 206h2v5h-2zM688 212h3v4h-3zM291 217h3v4h-3zM375 198h3v3h-3zM598 202h2v4h-2zM473 212h3v3h-3zM244 219h3v3h-3zM441 206h2v5h-2zM598 219h3v3h-3zM131 213h2v4h-2zM284 214h2v4h-2zM144 212h3v4h-3zM641 207h2v4h-2zM295 215h2v3h-2zM729 223h3v4h-3zM267 223h2v4h-2zM137 203h3v5h-3zM523 206h2v5h-2zM254 211h3v5h-3zM759 217h3v4h-3zM339 212h2v3h-2zM688 218h3v3h-3zM96 212h2v5h-2zM100 215h2v4h-2zM331 223h2v4h-2zM620 215h2v5h-2zM621 199h3v4h-3zM461 212h2v3h-2zM352 220h2v3h-2zM485 211h3v3h-3zM132 228h3v4h-3zM719 209h2v5h-2zM201 210h2v3h-2zM353 207h3v3h-3zM199 222h3v4h-3zM271 208h2v5h-2zM509 232h2v4h-2zM677 216h2v4h-2zM440 220h2v4h-2zM766 215h2v4h-2zM510 219h2v4h-2zM262 210h2v3h-2zM383 210h2v5h-2zM262 227h2v3h-2zM186 208h2v4h-2zM90 220h2v4h-2zM641 217h2v5h-2zM691 216h2v3h-2zM106 212h2v4h-2zM731 203h2v4h-2zM204 219h2v4h-2zM136 212h2v5h-2zM732 207h2v4h-2zM591 219h2v4h-2zM128 192h2v3h-2zM123 209h2v4h-2zM759 216h2v4h-2zM614 218h2v3h-2zM520 209h2v5h-2zM182 222h2v4h-2zM82 194h2v3h-2zM683 209h3v5h-3zM208 220h3v4h-3zM560 211h3v5h-3zM638 189h2v3h-2zM265 210h2v4h-2zM534 225h2v5h-2zM305 209h2v5h-2zM429 208h3v5h-3zM253 210h2v3h-2zM467 207h2v3h-2zM752 216h3v4h-3zM379 212h2v4h-2zM734 220h2v4h-2zM365 235h2v3h-2zM680 200h3v5h-3zM644 220h2v5h-2zM379 207h2v4h-2zM493 206h3v4h-3zM565 224h3v4h-3zM309 205h3v4h-3zM217 201h3v3h-3zM424 217h2v4h-2zM580 214h2v4h-2zM741 199h2v5h-2zM158 217h2v4h-2zM621 210h2v4h-2zM661 206h3v4h-3zM399 214h2v4h-2zM137 211h2v5h-2zM376 218h2v3h-2zM431 199h3v4h-3zM152 207h2v3h-2zM457 202h2v5h-2zM621 206h2v5h-2zM122 213h2v5h-2zM655 211h3v4h-3zM428 216h2v4h-2zM274 207h2v4h-2zM652 207h2v4h-2zM730 214h2v3h-2zM325 225h3v3h-3zM69 218h2v5h-2zM82 209h3v4h-3zM545 206h2v3h-2zM381 222h2v4h-2zM452 216h2v3h-2zM209 221h3v4h-3zM598 217h2v3h-2zM391 216h3v5h-3zM351 211h2v4h-2zM466 213h2v4h-2zM716 200h2v3h-2zM149 218h2v4h-2zM206 220h3v5h-3zM736 203h2v3h-2zM201 225h2v4h-2zM517 208h2v4h-2zM740 213h2v4h-2zM56 214h3v4h-3zM403 204h3v5h-3zM701 203h3v3h-3zM628 213h2v5h-2zM318 211h2v4h-2zM722 207h2v5h-2zM507 225h3v5h-3zM573 214h2v4h-2zM688 212h2v5h-2zM128 209h2v5h-2zM295 202h2v4h-2zM687 208h2v3h-2zM118 220h3v4h-3zM501 223h2v3h-2zM600 211h2v4h-2zM333 214h2v3h-2zM67 218h2v4h-2zM745 225h2v5h-2zM391 216h2v3h-2zM340 199h3v4h-3zM53 220h2v4h-2zM309 208h2v4h-2zM288 213h2v5h-2zM756 216h2v4h-2zM307 219h3v4h-3zM748 225h2v4h-2zM258 233h2v3h-2zM700 217h2v4h-2zM670 209h3v5h-3zM542 203h2v4h-2zM330 218h2v3h-2zM651 216h2v5h-2zM136 206h2v5h-2zM718 199h2v4h-2zM99 218h2v5h-2zM362 208h2v4h-2zM574 207h2v4h-2zM376 209h3v4h-3zM427 199h2v3h-2zM559 213h2v3h-2zM435 195h2v4h-2zM482 217h2v4h-2zM306 223h2v3h-2zM724 225h2v3h-2zM256 208h3v4h-3zM580 206h3v4h-3zM248 198h2v4h-2zM443 213h2v5h-2zM698 214h2v4h-2zM92 202h3v4h-3zM442 202h2v4h-2zM562 213h2v4h-2zM241 216h2v5h-2zM538 212h3v5h-3zM159 209h2v4h-2zM144 210h3v3h-3zM400 214h3v4h-3zM342 204h2v4h-2zM556 210h2v5h-2zM645 214h2v3h-2zM397 216h3v3h-3zM703 218h3v4h-3zM611 211h2v4h-2zM624 217h2v4h-2zM419 212h3v4h-3zM767 209h2v4h-2zM510 209h2v3h-2zM685 211h3v4h-3zM714 204h2v5h-2zM207 193h2v4h-2zM411 203h3v5h-3zM288 215h3v3h-3zM268 223h3v4h-3zM249 219h2v3h-2zM61 213h2v5h-2zM717 211h3v4h-3zM593 207h2v4h-2zM734 217h2v5h-2zM195 214h3v3h-3zM326 213h2v3h-2zM315 215h2v4h-2zM94 199h3v4h-3zM416 218h2v4h-2zM526 219h3v4h-3zM276 213h3v3h-3zM253 211h2v5h-2zM551 222h3v3h-3zM247 204h2v4h-2zM174 200h3v5h-3zM720 212h3v3h-3zM103 214h3v4h-3zM700 215h2v4h-2zM773 196h2v4h-2zM658 194h2v4h-2zM710 215h2v4h-2zM775 215h2v3h-2zM152 211h2v3h-2zM641 217h2v3h-2zM766 220h2v4h-2zM665 229h3v4h-3zM563 223h2v5h-2zM148 208h2v4h-2zM259 210h2v4h-2zM731 210h2v3h-2zM519 210h2v3h-2zM471 220h3v4h-3zM644 216h3v5h-3zM233 218h3v4h-3zM143 209h2v3h-2zM739 211h3v4h-3zM738 224h2v4h-2zM132 202h2v4h-2zM595 212h2v5h-2zM710 204h2v3h-2zM129 217h3v4h-3zM471 228h2v4h-2zM419 209h2v4h-2zM461 200h2v5h-2zM446 220h2v5h-2zM544 211h2v3h-2zM625 208h2v4h-2zM470 224h2v4h-2zM326 224h2v4h-2zM586 210h2v3h-2zM655 207h2v5h-2zM476 221h2v4h-2zM758 208h2v5h-2zM199 213h2v3h-2zM129 214h2v3h-2zM305 207h2v5h-2zM121 225h2v5h-2zM392 227h3v4h-3zM626 199h3v4h-3zM655 217h2v5h-2zM490 216h3v4h-3zM574 219h2v4h-2zM489 197h3v5h-3zM304 212h3v4h-3zM264 213h2v3h-2zM615 212h3v4h-3zM82 211h2v4h-2zM169 225h3v4h-3zM501 208h3v5h-3zM307 212h3v4h-3zM173 208h2v4h-2zM318 213h3v5h-3zM642 211h2v4h-2zM332 224h2v5h-2zM532 221h2v3h-2zM265 215h3v4h-3zM147 215h2v4h-2zM237 210h3v4h-3zM668 222h2v4h-2zM405 206h2v5h-2zM484 220h2v3h-2zM594 196h2v4h-2zM477 225h2v3h-2zM394 205h2v5h-2zM164 210h2v4h-2zM84 209h2v4h-2zM210 212h3v5h-3zM701 201h3v4h-3zM562 217h2v4h-2zM640 211h3v3h-3zM680 227h3v5h-3zM73 223h2v3h-2zM316 209h2v5h-2zM307 218h2v4h-2zM145 204h2v4h-2zM115 214h2v4h-2zM480 221h2v4h-2zM413 224h2v3h-2zM619 210h2v5h-2zM215 220h2v3h-2zM568 205h2v4h-2zM469 221h2v3h-2zM231 226h3v4h-3zM391 191h2v4h-2zM214 218h2v4h-2zM304 196h2v4h-2zM724 214h3v4h-3zM200 200h2v5h-2zM105 211h2v5h-2zM459 205h2v3h-2zM697 198h2v4h-2zM282 194h2v3h-2zM377 222h2v3h-2zM737 202h2v4h-2zM749 206h2v4h-2zM558 220h3v4h-3zM61 215h3v4h-3zM341 212h2v5h-2zM744 213h2v5h-2zM91 213h2v4h-2zM109 216h2v5h-2zM171 204h2v5h-2zM90 215h3v5h-3zM223 203h2v3h-2zM330 221h2v4h-2zM706 221h2v4h-2zM251 215h2v4h-2zM77 219h3v4h-3zM698 225h2v3h-2zM110 212h3v4h-3zM67 221h2v4h-2zM474 212h2v4h-2zM100 204h3v4h-3zM773 218h2v4h-2zM84 229h2v4h-2zM771 207h3v4h-3zM424 227h2v3h-2zM141 200h2v3h-2zM456 206h2v4h-2zM299 221h2v4h-2zM486 212h3v4h-3zM338 216h2v4h-2zM552 212h2v3h-2zM333 215h2v5h-2zM366 218h3v4h-3zM317 221h3v5h-3zM123 211h2v4h-2zM233 213h2v5h-2zM463 223h2v4h-2zM696 214h2v4h-2zM736 216h2v4h-2zM761 223h2v4h-2zM611 215h2v5h-2zM346 217h3v3h-3zM254 215h3v4h-3zM405 206h2v4h-2zM455 224h2v4h-2zM216 210h3v5h-3zM415 207h3v3h-3zM707 211h2v3h-2zM449 220h3v3h-3zM365 215h2v5h-2zM129 212h2v5h-2zM344 215h3v4h-3zM398 214h3v5h-3zM578 210h2v3h-2zM670 205h2v4h-2zM506 221h2v4h-2zM276 213h2v4h-2zM500 217h2v4h-2zM387 206h3v4h-3zM61 224h2v5h-2zM347 211h2v4h-2zM633 214h2v5h-2zM511 206h3v3h-3zM211 193h2v3h-2zM595 221h2v4h-2zM67 225h3v3h-3zM777 206h2v4h-2zM305 220h2v4h-2zM285 210h3v3h-3zM597 221h2v4h-2zM186 215h3v3h-3zM709 215h2v3h-2zM90 196h3v3h-3zM345 205h2v3h-2zM95 211h3v5h-3zM119 210h2v4h-2zM640 214h2v4h-2zM476 223h2v4h-2zM515 213h3v4h-3zM65 222h2v3h-2zM772 209h2v3h-2zM255 227h2v3h-2zM624 220h3v5h-3zM581 221h2v5h-2zM536 209h2v3h-2zM639 214h3v4h-3zM689 226h2v4h-2zM258 215h3v4h-3zM231 206h3v4h-3zM652 225h2v4h-2zM153 203h2v4h-2zM301 212h2v4h-2zM715 209h2v4h-2zM455 219h3v4h-3zM492 210h3v4h-3zM306 216h3v4h-3zM263 210h2v4h-2zM123 224h3v4h-3zM295 216h2v5h-2zM322 208h3v3h-3zM130 213h2v3h-2zM405 213h3v4h-3zM385 210h2v3h-2zM96 208h2v4h-2zM418 212h2v4h-2zM56 215h2v5h-2zM728 211h2v5h-2zM722 216h2v4h-2zM230 205h2v4h-2zM548 214h3v4h-3zM539 221h3v3h-3zM583 207h2v4h-2zM640 218h2v4h-2zM450 208h3v4h-3zM663 206h2v4h-2zM652 220h2v4h-2zM766 213h2v4h-2zM158 216h2v3h-2zM685 213h2v4h-2zM745 208h3v5h-3zM474 215h2v4h-2zM176 197h2v4h-2zM55 202h3v4h-3zM71 207h2v4h-2zM141 213h2v3h-2zM317 216h3v4h-3zM305 209h2v4h-2zM239 209h3v4h-3zM546 211h2v3h-2zM594 211h2v5h-2zM510 203h2v4h-2zM124 214h2v5h-2zM147 207h2v4h-2zM432 208h2v4h-2zM412 215h2v3h-2zM350 199h2v3h-2zM329 204h2v5h-2zM463 211h3v4h-3zM516 211h2v4h-2zM573 211h2v4h-2zM476 217h3v4h-3zM553 215h2v4h-2zM758 216h2v3h-2zM427 212h2v4h-2zM386 221h2v4h-2zM725 210h3v5h-3zM460 214h2v4h-2zM661 214h2v5h-2zM642 218h2v3h-2zM524 219h2v4h-2zM620 209h2v5h-2zM501 214h2v4h-2zM204 219h2v4h-2zM545 214h3v3h-3zM82 225h3v3h-3zM444 207h3v4h-3zM281 215h3v5h-3zM363 212h2v5h-2zM592 221h3v3h-3zM580 220h3v4h-3zM701 203h3v5h-3zM68 214h3v4h-3zM298 205h3v3h-3zM382 216h2v4h-2zM91 200h3v4h-3zM503 219h2v5h-2zM290 215h2v4h-2zM175 208h2v3h-2zM66 206h2v4h-2zM630 213h2v3h-2zM385 220h2v3h-2zM130 216h2v3h-2zM659 223h2v4h-2zM427 211h2v5h-2zM426 218h2v4h-2zM315 198h2v4h-2zM75 209h3v5h-3zM202 208h2v5h-2zM95 212h2v3h-2zM372 213h2v3h-2zM324 200h3v4h-3zM120 208h2v4h-2zM572 218h2v4h-2zM91 212h2v4h-2zM393 206h2v5h-2zM70 209h2v4h-2zM336 214h2v5h-2zM305 214h3v4h-3zM649 211h2v5h-2zM652 224h3v5h-3zM550 215h2v4h-2zM423 219h2v4h-2zM221 212h2v5h-2zM542 212h2v3h-2zM340 222h2v5h-2zM620 199h3v4h-3zM166 208h2v4h-2zM668 202h2v4h-2zM491 221h2v4h-2zM359 210h3v4h-3zM600 207h2v4h-2zM595 211h2v4h-2zM704 219h2v4h-2zM539 214h2v3h-2zM522 219h2v4h-2zM719 219h2v5h-2zM214 217h3v4h-3zM536 204h2v4h-2zM368 197h3v4h-3zM264 198h3v4h-3zM344 213h2v5h-2zM251 213h2v4h-2zM612 208h2v3h-2zM257 220h2v5h-2zM453 205h2v5h-2zM754 213h3v4h-3zM165 221h3v3h-3zM174 215h2v3h-2zM428 216h2v3h-2zM536 226h3v3h-3zM649 209h2v4h-2zM673 214h2v4h-2zM254 235h3v4h-3zM157 217h2v4h-2zM481 203h2v4h-2zM90 220h3v3h-3zM673 213h2v4h-2zM252 209h2v5h-2zM415 223h2v3h-2zM287 204h2v4h-2zM702 211h3v5h-3zM336 204h3v4h-3zM445 197h2v4h-2zM140 219h3v5h-3zM127 219h2v5h-2zM392 211h2v4h-2zM251 212h2v3h-2zM460 213h3v5h-3zM385 213h3v4h-3zM671 219h2v3h-2zM344 225h2v4h-2zM138 223h2v4h-2zM229 217h2v3h-2zM313 215h3v4h-3zM626 215h2v4h-2zM160 202h2v4h-2zM490 209h3v4h-3zM386 213h2v5h-2zM133 208h2v4h-2zM106 211h2v3h-2zM737 220h2v3h-2zM533 197h3v4h-3zM607 208h3v4h-3zM624 203h2v5h-2zM450 210h2v5h-2zM168 211h2v3h-2zM238 211h2v3h-2zM442 200h2v4h-2zM531 216h3v5h-3zM457 212h2v4h-2zM751 213h3v4h-3zM439 210h3v3h-3zM662 220h3v4h-3zM91 210h3v4h-3zM389 224h3v3h-3zM537 207h2v5h-2zM283 207h2v5h-2zM337 214h3v4h-3zM687 215h2v5h-2zM230 192h3v3h-3zM316 226h3v3h-3zM510 210h2v4h-2zM600 211h2v3h-2zM618 213h3v4h-3zM484 208h2v3h-2zM55 197h3v5h-3zM371 226h2v5h-2zM313 210h2v4h-2zM730 222h3v4h-3zM775 232h3v4h-3zM512 212h2v4h-2zM217 215h2v4h-2zM299 214h2v4h-2zM226 210h2v5h-2zM470 214h2v4h-2zM577 217h2v5h-2zM632 207h3v4h-3zM92 203h2v4h-2zM264 208h2v3h-2zM698 224h2v4h-2zM454 218h2v4h-2zM583 222h2v4h-2zM664 210h2v5h-2zM409 217h2v3h-2zM224 212h2v4h-2zM59 200h2v4h-2zM671 217h2v3h-2zM516 224h3v4h-3zM342 200h3v5h-3zM341 206h2v4h-2zM694 213h3v4h-3zM625 214h3v4h-3zM622 206h3v4h-3zM343 196h2v4h-2zM739 216h2v4h-2zM514 211h2v5h-2zM442 217h3v4h-3zM743 205h2v3h-2zM341 222h3v5h-3zM302 217h2v4h-2zM545 217h3v3h-3zM87 208h3v4h-3zM559 213h3v3h-3zM124 220h3v3h-3zM434 213h2v3h-2zM627 224h2v3h-2zM279 202h3v4h-3zM730 204h2v4h-2zM203 214h3v3h-3zM365 208h3v4h-3zM433 226h2v4h-2zM119 203h2v5h-2zM100 200h2v4h-2zM584 219h2v5h-2zM376 220h2v4h-2zM446 215h2v3h-2zM592 207h2v4h-2zM183 232h2v5h-2zM400 197h2v5h-2zM519 222h2v5h-2zM152 215h2v4h-2zM69 211h3v5h-3zM775 214h3v4h-3zM107 214h3v5h-3zM586 208h2v4h-2zM138 197h2v3h-2zM457 208h2v3h-2zM487 227h2v3h-2zM463 222h2v4h-2zM227 218h3v4h-3zM656 226h2v5h-2zM568 202h3v4h-3zM454 226h3v4h-3zM328 217h2v4h-2zM639 216h2v4h-2zM395 209h2v5h-2zM120 192h2v5h-2zM766 203h3v4h-3zM751 207h3v5h-3zM408 204h2v3h-2zM523 215h2v5h-2zM203 215h2v5h-2zM522 215h2v5h-2zM172 217h3v3h-3zM161 206h3v3h-3zM83 213h3v5h-3zM130 212h2v3h-2zM650 204h3v4h-3zM462 197h2v3h-2zM390 220h2v4h-2zM553 204h3v5h-3zM272 217h3v4h-3zM263 218h2v3h-2zM756 209h2v3h-2zM600 212h2v4h-2zM130 222h2v4h-2zM766 213h3v5h-3zM592 214h3v3h-3zM575 212h3v4h-3zM111 210h2v5h-2zM333 212h3v4h-3zM218 202h2v4h-2zM445 205h2v4h-2zM89 202h2v4h-2zM272 206h2v4h-2zM340 216h2v4h-2zM739 220h2v5h-2zM513 207h3v4h-3zM142 207h2v4h-2zM386 200h3v5h-3zM164 217h2v4h-2zM574 223h3v3h-3zM542 214h2v4h-2zM747 212h2v5h-2zM378 210h2v4h-2zM595 206h2v5h-2zM316 218h2v4h-2zM143 196h2v4h-2zM486 210h2v4h-2zM385 205h2v4h-2zM354 221h2v3h-2zM280 204h3v4h-3zM762 215h2v5h-2zM284 213h2v3h-2zM272 210h2v4h-2zM80 216h2v5h-2zM352 209h3v4h-3zM443 205h3v4h-3zM704 220h3v4h-3zM592 207h3v4h-3zM643 220h3v4h-3zM424 213h2v4h-2zM513 200h2v5h-2zM59 215h3v3h-3zM166 211h2v4h-2zM98 214h2v4h-2zM640 228h2v4h-2zM459 210h2v3h-2zM732 199h2v4h-2zM448 197h2v4h-2zM315 211h3v4h-3zM100 211h2v5h-2zM384 190h3v5h-3zM525 214h3v4h-3zM153 204h2v4h-2zM438 219h3v4h-3zM426 215h2v4h-2zM277 220h3v4h-3zM747 215h3v4h-3zM635 219h3v3h-3zM361 201h2v5h-2zM582 203h2v3h-2zM535 220h2v4h-2zM289 219h2v3h-2zM290 223h2v3h-2zM61 217h2v4h-2zM469 208h3v4h-3zM102 213h2v4h-2zM550 212h3v4h-3zM691 200h2v4h-2zM128 217h2v4h-2zM328 207h2v4h-2zM678 221h3v3h-3zM466 214h2v4h-2zM304 219h3v4h-3zM308 216h3v4h-3zM413 218h2v3h-2zM702 204h2v3h-2zM304 197h2v5h-2zM533 213h2v5h-2zM457 223h3v4h-3zM369 214h3v4h-3zM764 211h2v3h-2zM758 205h2v4h-2zM690 222h2v4h-2zM736 209h2v3h-2zM205 215h3v4h-3zM651 230h3v5h-3zM507 216h2v3h-2zM223 201h2v3h-2zM537 209h2v5h-2zM690 219h2v4h-2zM332 221h2v4h-2zM111 216h2v4h-2zM127 197h2v3h-2zM615 192h3v5h-3zM398 219h2v3h-2zM471 215h3v4h-3zM315 214h2v5h-2zM55 200h2v5h-2zM558 203h2v4h-2zM336 221h3v5h-3zM384 218h2v5h-2zM605 228h2v5h-2zM344 214h2v3h-2zM157 203h3v5h-3zM324 207h2v4h-2zM400 220h2v5h-2zM659 221h2v5h-2zM448 218h2v4h-2zM698 206h2v5h-2zM757 210h2v3h-2zM407 207h2v3h-2zM560 231h2v5h-2zM715 200h2v4h-2zM620 220h2v4h-2zM97 212h2v5h-2zM488 213h2v4h-2zM148 205h3v5h-3zM567 216h2v4h-2zM68 198h2v4h-2zM594 215h2v4h-2zM766 226h3v4h-3zM201 216h3v4h-3zM272 216h2v3h-2zM612 202h3v4h-3zM148 216h3v5h-3zM691 215h3v4h-3zM497 213h2v4h-2zM261 206h2v3h-2zM610 211h2v3h-2zM217 206h3v5h-3zM125 220h2v4h-2zM165 218h3v5h-3zM154 211h2v4h-2zM643 217h2v4h-2zM590 211h3v4h-3zM308 208h3v4h-3zM367 211h3v3h-3zM334 196h3v4h-3zM207 216h2v4h-2zM667 196h2v5h-2zM563 216h3v4h-3zM335 212h2v4h-2zM108 219h2v3h-2zM702 212h2v3h-2zM460 197h2v3h-2zM696 202h3v5h-3zM162 223h3v5h-3zM685 205h3v4h-3zM393 212h3v3h-3zM169 213h3v5h-3zM493 222h2v5h-2zM214 211h3v4h-3zM415 225h2v3h-2zM393 210h2v4h-2zM304 218h2v3h-2zM569 211h2v4h-2zM648 215h2v4h-2zM381 209h3v4h-3zM287 204h3v4h-3zM531 201h3v4h-3zM593 214h2v5h-2zM367 221h2v3h-2zM297 213h2v5h-2zM581 217h3v3h-3zM660 221h3v3h-3zM320 221h3v4h-3zM455 221h3v3h-3zM384 211h2v4h-2zM141 206h2v4h-2zM587 214h2v4h-2zM75 213h2v4h-2zM366 198h2v3h-2zM707 200h2v5h-2zM647 207h2v4h-2zM505 215h2v3h-2zM289 204h3v5h-3zM299 216h3v4h-3zM456 228h3v3h-3zM525 220h2v4h-2zM604 217h2v5h-2zM82 217h2v3h-2zM119 209h2v4h-2zM714 207h2v4h-2zM186 220h3v4h-3zM248 224h3v3h-3zM89 213h2v4h-2zM565 201h2v4h-2zM591 202h2v4h-2zM685 213h2v5h-2zM659 208h2v4h-2zM322 212h3v4h-3zM543 219h2v3h-2zM449 203h2v3h-2zM713 207h2v4h-2zM186 223h3v4h-3zM293 202h3v5h-3zM776 216h2v4h-2zM54 220h3v3h-3zM123 210h2v4h-2zM510 208h2v4h-2zM58 199h3v4h-3zM336 217h2v4h-2zM364 220h3v3h-3zM636 214h2v4h-2zM596 224h2v4h-2zM329 204h2v5h-2zM444 228h2v3h-2zM337 209h3v4h-3zM374 218h3v3h-3zM229 208h2v3h-2zM372 215h3v5h-3zM632 212h2v5h-2zM445 202h3v3h-3zM653 223h3v4h-3zM133 228h2v4h-2zM228 196h2v5h-2zM604 213h2v4h-2zM745 214h3v4h-3zM511 210h3v4h-3zM465 215h3v4h-3zM114 218h2v4h-2zM527 215h2v5h-2zM436 219h3v3h-3zM659 216h2v3h-2zM423 217h2v5h-2zM759 206h2v3h-2zM720 206h2v4h-2zM396 206h2v4h-2zM766 215h2v4h-2zM489 214h3v4h-3zM403 230h2v4h-2zM440 213h2v5h-2zM586 205h2v4h-2zM628 213h2v3h-2zM639 223h2v3h-2zM730 212h2v5h-2zM687 202h2v3h-2zM589 223h3v4h-3zM502 209h2v4h-2zM638 215h2v4h-2zM404 207h2v4h-2zM385 209h2v5h-2zM584 213h2v4h-2zM351 213h2v3h-2zM58 223h2v4h-2zM582 206h2v4h-2zM254 215h3v5h-3zM662 205h2v4h-2zM347 213h2v5h-2zM57 214h2v3h-2zM525 202h3v4h-3zM719 189h2v4h-2zM616 213h2v5h-2zM249 204h2v4h-2zM773 196h3v5h-3zM406 208h2v3h-2zM130 205h2v4h-2zM296 216h2v4h-2zM76 202h3v5h-3zM455 204h3v4h-3zM740 212h2v4h-2zM415 215h2v4h-2zM59 216h2v4h-2zM273 212h3v3h-3zM473 227h3v3h-3zM110 199h2v5h-2zM692 210h3v4h-3zM159 204h2v3h-2zM92 220h3v4h-3zM210 209h2v3h-2zM116 212h2v4h-2zM291 204h2v4h-2zM245 213h2v4h-2zM388 218h2v4h-2zM119 187h2v4h-2zM201 243h2v4h-2zM175 228h2v4h-2zM525 237h2v4h-2zM225 227h2v4h-2zM538 222h2v4h-2zM72 206h2v4h-2zM461 209h2v4h-2zM305 239h2v4h-2zM55 207h2v4h-2zM770 185h2v4h-2zM610 207h2v4h-2zM71 209h2v4h-2zM368 199h2v4h-2zM172 217h2v4h-2zM575 218h2v4h-2zM672 209h2v4h-2zM168 197h2v4h-2zM519 229h2v4h-2zM583 218h2v4h-2zM550 228h2v4h-2zM202 211h2v4h-2zM638 217h2v4h-2zM677 213h2v4h-2zM640 206h2v4h-2zM446 226h2v4h-2zM729 233h2v4h-2zM511 236h2v4h-2zM120 226h2v4h-2zM146 212h2v4h-2zM665 198h2v4h-2zM250 219h2v4h-2zM78 201h2v4h-2zM353 215h2v4h-2zM604 221h2v4h-2zM315 196h2v4h-2zM257 220h2v4h-2zM730 216h2v4h-2zM341 222h2v4h-2zM178 199h2v4h-2zM656 213h2v4h-2zM377 197h2v4h-2zM753 196h2v4h-2zM291 212h2v4h-2zM657 217h2v4h-2zM340 222h2v4h-2zM543 237h2v4h-2zM547 202h2v4h-2zM586 205h2v4h-2zM183 236h2v4h-2zM512 225h2v4h-2zM268 231h2v4h-2zM305 201h2v4h-2zM152 212h2v4h-2z" fill="#86c5bf" fill-opacity="0.3"/><path d="M683 200h2v4h-2zM210 218h2v4h-2zM96 206h2v4h-2zM746 220h2v4h-2zM545 227h3v3h-3zM111 219h3v4h-3zM660 211h3v4h-3zM141 205h3v5h-3zM537 196h2v3h-2zM541 215h2v4h-2zM130 216h2v3h-2zM392 232h3v3h-3zM188 208h3v3h-3zM328 222h2v5h-2zM436 216h2v4h-2zM602 210h2v3h-2zM521 212h3v4h-3zM721 205h3v5h-3zM481 208h2v4h-2zM728 206h3v4h-3zM385 217h2v5h-2zM304 214h2v4h-2zM234 211h2v4h-2zM121 227h2v3h-2zM719 209h2v5h-2zM316 208h2v4h-2zM603 214h3v3h-3zM379 204h3v4h-3zM227 217h2v3h-2zM345 210h2v3h-2zM359 225h2v4h-2zM597 213h3v5h-3zM253 206h2v4h-2zM375 214h2v5h-2zM764 221h2v4h-2zM161 210h2v5h-2zM278 209h2v4h-2zM396 219h2v5h-2zM563 212h2v4h-2zM444 221h2v4h-2zM373 208h3v3h-3zM99 211h2v3h-2zM670 205h2v4h-2zM199 210h3v3h-3zM377 209h2v5h-2zM232 221h2v4h-2zM299 204h2v4h-2zM477 222h2v4h-2zM545 201h2v5h-2zM400 207h2v5h-2zM401 206h2v4h-2zM245 216h2v4h-2zM668 222h3v4h-3zM168 205h2v5h-2zM340 216h3v4h-3zM533 220h2v5h-2zM225 217h3v4h-3zM274 218h3v4h-3zM464 217h3v3h-3zM414 215h2v3h-2zM614 216h2v3h-2zM88 209h2v4h-2zM564 214h3v4h-3zM152 220h2v4h-2zM228 203h3v4h-3zM383 207h2v3h-2zM663 218h3v3h-3zM340 221h2v5h-2zM364 205h2v4h-2zM218 206h2v4h-2zM205 205h3v4h-3zM652 208h3v5h-3zM193 234h2v4h-2zM674 207h2v5h-2zM676 206h2v4h-2zM694 214h2v3h-2zM511 222h2v3h-2zM389 203h2v4h-2zM563 199h3v3h-3zM228 203h3v5h-3zM477 208h2v4h-2zM379 213h2v4h-2zM507 208h3v4h-3zM133 210h3v4h-3zM235 216h2v4h-2zM676 211h2v5h-2zM735 215h2v4h-2zM257 201h3v5h-3zM148 218h2v4h-2zM456 216h2v5h-2zM324 208h2v4h-2zM776 212h2v4h-2zM655 196h3v3h-3zM648 209h2v4h-2zM294 207h2v4h-2zM665 212h2v4h-2zM445 220h2v5h-2zM670 220h3v4h-3zM560 218h2v4h-2zM241 211h3v3h-3zM105 214h3v3h-3zM384 210h2v5h-2zM700 211h2v4h-2zM465 207h2v4h-2zM265 218h3v4h-3zM313 218h3v4h-3zM704 213h2v4h-2zM140 207h2v4h-2zM308 221h3v5h-3zM222 218h3v4h-3zM742 220h2v3h-2zM86 212h3v4h-3zM672 213h2v4h-2zM554 224h2v5h-2zM633 209h3v3h-3zM352 217h2v4h-2zM58 219h3v5h-3zM171 212h3v4h-3zM422 220h3v3h-3zM152 224h2v5h-2zM619 210h2v4h-2zM624 216h2v5h-2zM184 217h2v3h-2zM293 221h3v3h-3zM86 218h3v5h-3zM394 215h3v4h-3zM283 228h3v3h-3zM626 206h2v3h-2zM228 222h3v3h-3zM474 202h2v4h-2zM668 208h2v4h-2zM331 216h2v3h-2zM144 214h3v3h-3zM309 216h2v5h-2zM764 212h2v4h-2zM278 224h2v4h-2zM468 204h3v5h-3zM220 216h2v3h-2zM595 210h2v3h-2zM301 218h2v3h-2zM62 207h3v3h-3zM559 217h2v5h-2zM566 205h3v4h-3zM579 210h2v4h-2zM581 223h2v4h-2zM249 217h3v4h-3zM215 217h2v4h-2zM691 218h2v3h-2zM259 224h2v5h-2zM157 212h3v4h-3zM729 224h2v3h-2zM670 211h3v5h-3zM663 214h2v4h-2zM220 209h2v4h-2zM409 204h3v4h-3zM713 217h2v5h-2zM192 223h2v4h-2zM397 200h3v4h-3zM144 221h3v3h-3zM129 209h2v5h-2zM333 201h3v4h-3zM190 212h2v5h-2zM694 213h3v3h-3zM777 215h3v5h-3zM725 205h2v5h-2zM214 211h2v5h-2zM290 206h2v4h-2zM216 200h3v4h-3zM396 201h3v5h-3zM719 213h2v4h-2zM728 209h2v4h-2zM265 206h2v3h-2zM401 217h2v4h-2zM410 213h2v4h-2zM698 210h2v4h-2zM180 219h2v3h-2zM776 208h2v4h-2zM229 231h3v4h-3zM705 206h2v4h-2zM527 197h2v5h-2zM182 203h2v5h-2zM471 188h2v5h-2zM214 210h3v4h-3zM161 208h2v4h-2zM722 221h2v3h-2zM61 219h3v4h-3zM257 210h3v4h-3zM172 209h3v4h-3zM376 211h3v4h-3zM650 209h2v3h-2zM73 208h2v3h-2zM728 217h3v4h-3zM396 209h2v5h-2zM419 216h2v3h-2zM554 222h2v3h-2zM669 194h2v5h-2zM473 209h2v3h-2zM69 213h3v5h-3zM364 213h2v4h-2zM356 205h2v5h-2zM678 220h2v3h-2zM273 218h2v3h-2zM704 227h2v3h-2zM360 211h2v5h-2zM379 214h2v3h-2zM53 215h2v4h-2zM730 207h3v4h-3zM700 207h3v3h-3zM691 213h3v4h-3zM128 218h2v3h-2zM130 236h2v3h-2zM405 212h2v4h-2zM70 201h2v5h-2zM290 217h2v4h-2zM501 206h3v4h-3zM227 205h3v4h-3zM213 216h2v4h-2zM421 214h2v3h-2zM592 218h2v4h-2zM603 204h2v5h-2zM638 223h3v4h-3zM633 215h2v3h-2zM754 206h3v5h-3zM693 224h3v4h-3zM215 203h2v5h-2zM142 200h2v4h-2zM179 200h2v4h-2zM308 209h3v4h-3zM604 198h2v4h-2zM397 195h3v5h-3zM496 213h3v5h-3zM71 213h2v4h-2zM567 214h2v4h-2zM693 204h2v4h-2zM89 216h3v4h-3zM562 214h2v4h-2zM426 219h2v5h-2zM734 211h2v3h-2zM218 219h3v3h-3zM161 214h2v4h-2zM524 219h2v3h-2zM252 215h2v4h-2zM260 212h3v4h-3zM211 208h3v5h-3zM286 209h3v5h-3zM174 218h3v4h-3zM54 225h2v5h-2zM149 202h2v5h-2zM369 203h2v4h-2zM598 216h2v4h-2zM460 203h2v3h-2zM419 205h3v5h-3zM73 194h2v4h-2zM544 226h2v3h-2zM651 214h2v4h-2zM205 219h3v5h-3zM668 210h3v4h-3zM328 223h2v4h-2zM493 210h2v5h-2zM289 193h2v5h-2zM107 209h2v4h-2zM487 224h2v4h-2zM691 216h2v5h-2zM620 221h2v5h-2zM566 208h2v4h-2zM726 217h2v5h-2zM533 219h3v4h-3zM478 208h2v4h-2zM103 216h2v5h-2zM710 217h3v5h-3zM736 211h2v4h-2zM226 222h3v3h-3zM463 217h2v3h-2zM650 216h2v5h-2zM418 212h3v5h-3zM695 196h2v3h-2zM88 215h3v4h-3zM507 215h3v4h-3zM566 213h2v4h-2zM587 222h2v3h-2zM512 205h3v3h-3zM163 203h2v4h-2zM83 214h3v5h-3zM533 212h2v4h-2zM431 238h3v4h-3zM299 206h3v5h-3zM303 210h2v5h-2zM372 201h3v4h-3zM774 201h2v3h-2zM570 211h3v4h-3zM365 206h3v4h-3zM310 236h2v3h-2zM422 223h2v4h-2zM535 219h2v5h-2zM593 201h2v4h-2zM699 216h2v4h-2zM428 222h2v3h-2zM706 200h2v3h-2zM399 199h3v3h-3zM573 217h2v4h-2zM552 207h3v3h-3zM98 211h3v3h-3zM246 208h2v5h-2zM477 216h2v3h-2zM355 207h2v4h-2zM727 199h2v5h-2zM106 195h2v3h-2zM265 220h3v4h-3zM447 218h3v4h-3zM307 206h2v4h-2zM230 205h3v4h-3zM160 197h3v5h-3zM567 202h3v5h-3zM715 219h2v3h-2zM735 210h2v5h-2zM328 211h2v4h-2zM774 210h2v5h-2zM57 206h2v3h-2zM764 209h2v3h-2zM239 214h3v3h-3zM329 212h2v5h-2zM774 214h3v4h-3zM433 218h2v5h-2zM132 208h2v3h-2zM174 211h2v3h-2zM615 211h2v5h-2zM132 207h2v4h-2zM614 215h3v4h-3zM281 220h3v4h-3zM331 208h2v4h-2zM288 204h2v4h-2zM745 212h2v5h-2zM312 212h3v4h-3zM445 210h3v3h-3zM142 215h2v4h-2zM462 217h2v3h-2zM81 216h2v3h-2zM156 210h3v4h-3zM244 201h2v4h-2zM550 222h3v4h-3zM390 202h2v5h-2zM691 212h3v4h-3zM770 212h2v5h-2zM346 214h2v5h-2zM621 208h2v4h-2zM728 200h2v4h-2zM162 222h3v4h-3zM492 217h3v3h-3zM497 208h2v5h-2zM418 228h2v4h-2zM347 217h2v4h-2zM229 211h2v4h-2zM348 229h3v5h-3zM256 211h2v4h-2zM285 211h2v5h-2zM512 214h3v4h-3zM440 202h2v5h-2zM558 221h2v5h-2zM495 223h3v4h-3zM123 222h2v3h-2zM739 217h2v4h-2zM684 212h2v5h-2zM386 207h3v4h-3zM709 210h2v5h-2zM432 209h2v3h-2zM350 227h3v3h-3zM466 214h2v4h-2zM336 209h2v5h-2zM259 219h2v5h-2zM761 217h3v3h-3zM215 218h2v5h-2zM269 211h3v4h-3zM367 206h2v4h-2zM679 210h3v4h-3zM341 214h2v5h-2zM273 218h2v3h-2zM367 219h2v5h-2zM690 214h2v5h-2zM389 210h2v4h-2zM598 214h3v5h-3zM312 216h2v3h-2zM700 207h2v5h-2zM425 225h2v3h-2zM406 217h2v5h-2zM508 210h3v4h-3zM147 207h2v3h-2zM288 221h3v4h-3zM311 207h2v5h-2zM766 220h2v3h-2zM556 205h2v4h-2zM624 209h2v3h-2zM612 210h3v3h-3zM459 222h2v4h-2zM204 211h2v3h-2zM296 216h2v4h-2zM548 210h3v4h-3zM777 221h2v4h-2zM627 220h2v4h-2zM192 219h3v4h-3zM372 199h2v5h-2zM751 213h3v3h-3zM582 220h2v4h-2zM595 210h2v4h-2zM283 216h3v4h-3zM61 211h3v3h-3zM259 220h3v3h-3zM323 215h2v3h-2zM369 213h3v4h-3zM384 220h2v5h-2zM471 208h2v3h-2zM436 220h3v4h-3zM265 219h2v4h-2zM356 198h2v4h-2zM376 214h2v4h-2zM510 215h2v5h-2zM725 215h3v3h-3zM252 220h2v5h-2zM266 211h2v5h-2zM717 214h2v4h-2zM467 204h2v4h-2zM719 207h2v4h-2zM700 200h2v5h-2zM350 217h2v4h-2zM307 208h2v5h-2zM432 223h3v5h-3zM627 213h2v4h-2zM517 209h2v4h-2zM548 194h2v4h-2zM761 212h2v4h-2zM434 213h2v4h-2zM331 205h2v3h-2zM280 203h3v4h-3zM451 204h2v3h-2zM718 227h3v4h-3zM536 194h3v4h-3zM262 220h2v4h-2zM467 216h3v4h-3zM592 208h3v3h-3zM60 208h2v4h-2zM138 209h3v4h-3zM288 207h3v5h-3zM231 211h2v3h-2zM205 211h3v4h-3zM481 213h2v3h-2zM203 210h2v4h-2zM271 206h3v4h-3zM277 228h2v4h-2zM61 219h3v5h-3zM411 199h3v5h-3zM219 210h2v4h-2zM759 207h2v4h-2zM206 212h2v5h-2zM111 211h2v4h-2zM537 197h2v4h-2zM458 199h3v4h-3zM349 219h3v3h-3zM199 211h3v5h-3zM137 225h3v4h-3zM189 226h2v4h-2zM124 208h2v4h-2zM677 222h2v5h-2zM766 216h3v3h-3zM681 216h3v3h-3zM119 215h3v3h-3zM266 194h2v3h-2zM638 205h2v4h-2zM379 205h3v4h-3zM645 217h2v5h-2zM571 218h3v3h-3zM675 211h3v4h-3zM55 208h2v3h-2zM612 230h2v3h-2zM453 218h2v3h-2zM450 228h2v4h-2zM497 214h3v3h-3zM241 198h2v4h-2zM484 213h3v4h-3zM726 219h2v4h-2zM617 219h3v3h-3zM153 225h3v3h-3zM640 213h2v4h-2zM758 216h3v4h-3zM541 214h3v4h-3zM385 205h3v5h-3zM474 217h2v4h-2zM608 222h2v4h-2zM241 217h3v5h-3zM142 216h2v5h-2zM114 213h3v4h-3zM142 208h3v5h-3zM397 227h2v4h-2zM767 233h2v3h-2zM549 209h2v3h-2zM483 196h2v3h-2zM666 191h2v5h-2zM204 214h3v5h-3zM662 221h2v4h-2zM111 212h3v4h-3zM311 224h2v3h-2zM744 215h2v4h-2zM198 228h3v3h-3zM620 213h2v4h-2zM504 220h3v4h-3zM161 207h2v4h-2zM648 203h2v5h-2zM327 210h2v3h-2zM608 211h2v3h-2zM198 215h2v4h-2zM534 202h2v5h-2zM472 201h2v4h-2zM144 210h2v4h-2zM733 220h2v4h-2zM416 225h2v5h-2zM320 209h3v5h-3zM662 215h2v5h-2zM376 222h2v4h-2zM692 216h3v4h-3zM713 216h2v4h-2zM723 211h2v4h-2zM441 227h3v4h-3zM112 199h2v4h-2zM543 220h3v4h-3zM487 216h2v4h-2zM162 213h2v4h-2zM544 225h3v3h-3zM770 216h2v3h-2zM777 216h2v3h-2zM684 198h2v4h-2zM738 203h2v4h-2zM387 220h3v5h-3zM615 221h2v5h-2zM219 215h2v4h-2z" fill="#86c5bf" fill-opacity="0.5"/></g><rect x="54" y="275.5" width="726" height="21" fill="url(#bandg)"/><g filter="url(#soft)"><path d="M751 283.7h3v3h-3zM297 286.3h3v3h-3zM368 289.4h3v3h-3zM658 283.9h3v3h-3zM733 281.8h3v3h-3zM490 287.6h3v3h-3zM142 281.5h3v3h-3zM60 284.0h3v3h-3zM189 284.8h3v3h-3zM630 279.4h3v3h-3zM133 289.5h3v3h-3zM423 281.5h3v3h-3zM70 288.6h3v3h-3zM665 283.7h3v3h-3zM53 293.8h3v3h-3zM586 286.5h3v3h-3zM60 280.8h3v3h-3zM335 283.2h3v3h-3zM627 284.8h3v3h-3zM436 289.4h3v3h-3zM439 288.1h3v3h-3zM767 286.4h3v3h-3zM736 289.5h3v3h-3zM515 287.5h3v3h-3zM251 283.6h3v3h-3zM479 283.5h3v3h-3zM635 287.4h3v3h-3zM225 282.9h3v3h-3zM593 281.7h3v3h-3zM217 285.0h3v3h-3zM624 283.8h3v3h-3zM721 282.2h3v3h-3zM607 281.2h3v3h-3zM274 288.9h3v3h-3zM390 286.2h3v3h-3zM499 285.1h3v3h-3zM412 286.0h3v3h-3zM591 281.2h3v3h-3zM525 286.2h3v3h-3zM601 285.8h3v3h-3zM288 284.5h3v3h-3zM502 283.3h3v3h-3zM669 284.4h3v3h-3zM562 279.8h3v3h-3zM335 284.0h3v3h-3zM142 286.3h3v3h-3zM127 285.7h3v3h-3zM423 285.8h3v3h-3zM694 284.8h3v3h-3zM505 284.0h3v3h-3zM365 288.5h3v3h-3zM141 290.0h3v3h-3zM520 281.9h3v3h-3zM518 286.6h3v3h-3zM249 280.3h3v3h-3zM300 278.9h3v3h-3zM443 283.7h3v3h-3zM409 284.9h3v3h-3zM211 289.0h3v3h-3zM261 280.3h3v3h-3zM224 278.7h3v3h-3zM658 279.3h3v3h-3zM101 283.3h3v3h-3zM290 283.4h3v3h-3zM483 283.6h3v3h-3zM194 282.9h3v3h-3zM680 281.7h3v3h-3zM347 287.4h3v3h-3zM536 287.7h3v3h-3zM243 281.0h3v3h-3zM207 283.8h3v3h-3zM115 284.8h3v3h-3zM436 282.9h3v3h-3zM772 291.7h3v3h-3zM223 287.5h3v3h-3zM154 280.7h3v3h-3zM522 286.6h3v3h-3zM238 281.2h3v3h-3zM776 285.1h3v3h-3zM577 281.4h3v3h-3zM99 287.4h3v3h-3zM297 283.2h3v3h-3zM169 285.9h3v3h-3zM614 284.6h3v3h-3zM643 282.4h3v3h-3zM339 285.1h3v3h-3zM388 287.6h3v3h-3zM571 279.6h3v3h-3zM137 287.5h3v3h-3zM547 286.2h3v3h-3zM698 288.4h3v3h-3zM507 285.3h3v3h-3zM184 286.7h3v3h-3zM147 287.6h3v3h-3zM275 286.2h3v3h-3zM191 285.8h3v3h-3zM655 283.2h3v3h-3zM294 284.0h3v3h-3zM261 289.1h3v3h-3zM461 282.8h3v3h-3zM149 282.1h3v3h-3zM625 282.1h3v3h-3zM129 287.8h3v3h-3zM766 279.9h3v3h-3zM694 282.4h3v3h-3zM240 283.3h3v3h-3zM680 283.2h3v3h-3zM313 279.7h3v3h-3zM297 286.2h3v3h-3zM719 284.9h3v3h-3zM761 279.8h3v3h-3zM751 285.5h3v3h-3zM618 282.6h3v3h-3zM685 281.4h3v3h-3zM596 284.1h3v3h-3zM581 287.1h3v3h-3zM108 285.2h3v3h-3zM612 285.5h3v3h-3zM282 290.4h3v3h-3zM700 283.3h3v3h-3zM484 286.8h3v3h-3zM502 290.3h3v3h-3zM674 290.3h3v3h-3zM320 286.2h3v3h-3zM257 286.4h3v3h-3zM711 282.2h3v3h-3zM285 287.7h3v3h-3zM95 284.8h3v3h-3zM396 283.8h3v3h-3zM359 285.7h3v3h-3zM445 283.6h3v3h-3zM711 284.8h3v3h-3zM353 284.2h3v3h-3zM622 286.5h3v3h-3zM273 290.4h3v3h-3zM117 283.9h3v3h-3zM497 284.3h3v3h-3zM454 288.7h3v3h-3zM687 284.6h3v3h-3zM365 283.9h3v3h-3zM655 284.4h3v3h-3zM722 285.3h3v3h-3zM642 283.7h3v3h-3zM741 288.7h3v3h-3zM691 283.0h3v3h-3zM566 287.2h3v3h-3zM158 286.0h3v3h-3zM59 283.6h3v3h-3zM289 283.7h3v3h-3zM546 279.2h3v3h-3zM55 285.5h3v3h-3zM741 287.2h3v3h-3zM129 284.0h3v3h-3zM298 278.3h3v3h-3zM540 289.1h3v3h-3zM447 289.0h3v3h-3zM767 281.4h3v3h-3zM119 286.0h3v3h-3zM593 280.1h3v3h-3zM333 284.1h3v3h-3zM518 282.1h3v3h-3zM88 283.5h3v3h-3zM326 285.5h3v3h-3zM415 285.6h3v3h-3zM248 286.1h3v3h-3zM423 288.8h3v3h-3zM307 283.8h3v3h-3zM265 281.5h3v3h-3zM714 286.0h3v3h-3zM202 289.1h3v3h-3zM125 278.5h3v3h-3zM365 285.0h3v3h-3zM588 285.1h3v3h-3zM94 282.9h3v3h-3zM309 286.8h3v3h-3zM224 287.5h3v3h-3zM599 287.3h3v3h-3zM610 283.8h3v3h-3zM66 287.8h3v3h-3zM602 282.6h3v3h-3zM369 289.3h3v3h-3zM477 286.0h3v3h-3zM672 289.0h3v3h-3zM405 288.3h3v3h-3zM585 282.3h3v3h-3zM454 278.4h3v3h-3zM417 279.0h3v3h-3zM536 288.5h3v3h-3zM169 289.3h3v3h-3zM123 283.9h3v3h-3zM195 285.9h3v3h-3zM75 283.9h3v3h-3zM337 287.9h3v3h-3zM377 285.5h3v3h-3zM743 285.9h3v3h-3zM219 285.0h3v3h-3zM721 287.3h3v3h-3zM448 288.2h3v3h-3zM738 287.2h3v3h-3zM641 284.3h3v3h-3zM522 285.7h3v3h-3zM88 289.3h3v3h-3zM767 285.7h3v3h-3zM627 288.6h3v3h-3zM729 288.1h3v3h-3zM418 282.5h3v3h-3zM746 280.6h3v3h-3zM481 286.8h3v3h-3zM382 287.8h3v3h-3zM294 290.0h3v3h-3zM174 283.1h3v3h-3zM578 283.2h3v3h-3zM324 285.5h3v3h-3zM368 283.3h3v3h-3zM162 282.3h3v3h-3zM527 284.0h3v3h-3zM513 285.3h3v3h-3zM684 285.9h3v3h-3zM251 282.4h3v3h-3zM172 279.2h3v3h-3zM671 282.6h3v3h-3zM339 291.3h3v3h-3zM420 283.2h3v3h-3zM396 281.7h3v3h-3zM613 283.4h3v3h-3zM445 280.6h3v3h-3zM593 285.8h3v3h-3zM460 285.0h3v3h-3zM278 282.6h3v3h-3zM362 289.4h3v3h-3zM440 283.1h3v3h-3zM393 285.8h3v3h-3zM306 288.1h3v3h-3zM270 288.1h3v3h-3zM408 284.7h3v3h-3zM280 278.8h3v3h-3zM339 284.4h3v3h-3zM425 282.2h3v3h-3zM211 282.0h3v3h-3zM316 284.8h3v3h-3zM677 287.5h3v3h-3zM80 289.4h3v3h-3zM160 288.0h3v3h-3zM128 285.3h3v3h-3zM239 281.5h3v3h-3zM421 284.2h3v3h-3zM323 284.3h3v3h-3zM478 285.0h3v3h-3zM687 282.6h3v3h-3zM696 287.1h3v3h-3zM84 287.3h3v3h-3zM498 284.2h3v3h-3zM670 283.2h3v3h-3zM568 281.3h3v3h-3zM756 281.9h3v3h-3zM470 288.0h3v3h-3zM398 283.7h3v3h-3zM169 280.4h3v3h-3zM514 285.5h3v3h-3zM54 282.9h3v3h-3zM456 286.0h3v3h-3zM775 281.6h3v3h-3zM524 283.0h3v3h-3zM349 289.7h3v3h-3zM85 282.8h3v3h-3zM432 289.4h3v3h-3zM582 286.1h3v3h-3zM341 285.5h3v3h-3zM132 282.5h3v3h-3zM719 288.8h3v3h-3zM277 291.8h3v3h-3zM518 283.7h3v3h-3zM282 283.0h3v3h-3zM503 290.4h3v3h-3zM680 290.0h3v3h-3zM537 289.3h3v3h-3zM725 284.2h3v3h-3zM699 291.8h3v3h-3zM395 282.7h3v3h-3zM413 280.5h3v3h-3zM347 284.9h3v3h-3zM440 281.5h3v3h-3zM312 289.3h3v3h-3zM346 282.8h3v3h-3zM547 279.5h3v3h-3zM368 286.0h3v3h-3zM383 284.6h3v3h-3zM182 289.3h3v3h-3zM509 287.2h3v3h-3zM275 289.2h3v3h-3zM765 287.4h3v3h-3zM512 280.6h3v3h-3zM279 283.3h3v3h-3zM681 288.8h3v3h-3zM78 280.5h3v3h-3zM143 289.0h3v3h-3zM550 286.8h3v3h-3zM448 286.7h3v3h-3zM244 286.0h3v3h-3zM249 290.9h3v3h-3zM260 288.2h3v3h-3zM221 283.5h3v3h-3zM358 285.8h3v3h-3zM769 281.5h3v3h-3zM489 286.6h3v3h-3zM116 288.2h3v3h-3zM61 281.0h3v3h-3zM201 285.5h3v3h-3zM410 284.5h3v3h-3zM735 283.5h3v3h-3zM271 279.5h3v3h-3zM681 281.0h3v3h-3zM701 285.2h3v3h-3zM514 284.6h3v3h-3zM591 284.9h3v3h-3zM669 287.1h3v3h-3zM619 282.1h3v3h-3zM688 284.3h3v3h-3zM654 288.1h3v3h-3zM669 281.0h3v3h-3zM679 287.1h3v3h-3zM700 283.2h3v3h-3zM67 288.9h3v3h-3zM179 283.4h3v3h-3zM307 282.7h3v3h-3zM234 287.3h3v3h-3zM333 289.4h3v3h-3zM661 287.5h3v3h-3zM454 280.4h3v3h-3zM425 286.9h3v3h-3zM576 288.4h3v3h-3zM496 289.4h3v3h-3zM620 286.7h3v3h-3zM480 282.1h3v3h-3zM412 287.4h3v3h-3zM452 281.7h3v3h-3zM134 286.0h3v3h-3zM304 286.2h3v3h-3zM81 281.2h3v3h-3zM606 282.2h3v3h-3zM734 280.4h3v3h-3zM348 286.7h3v3h-3zM489 282.4h3v3h-3zM772 281.6h3v3h-3zM639 283.9h3v3h-3zM747 283.9h3v3h-3zM290 284.3h3v3h-3zM508 286.3h3v3h-3zM576 289.4h3v3h-3zM225 284.6h3v3h-3zM641 287.8h3v3h-3zM231 279.3h3v3h-3zM344 283.0h3v3h-3zM692 284.1h3v3h-3zM533 283.0h3v3h-3zM706 290.0h3v3h-3zM319 287.7h3v3h-3zM413 282.4h3v3h-3zM478 289.2h3v3h-3zM177 289.0h3v3h-3zM685 284.2h3v3h-3zM288 285.8h3v3h-3zM540 283.7h3v3h-3zM444 285.8h3v3h-3zM300 287.0h3v3h-3zM637 281.1h3v3h-3zM540 285.6h3v3h-3zM240 281.2h3v3h-3zM245 288.3h3v3h-3zM476 287.6h3v3h-3zM249 283.2h3v3h-3zM732 284.7h3v3h-3zM389 285.7h3v3h-3zM411 283.7h3v3h-3zM434 286.1h3v3h-3zM554 283.9h3v3h-3zM512 284.2h3v3h-3zM226 285.3h3v3h-3zM223 287.6h3v3h-3zM157 283.3h3v3h-3zM252 287.9h3v3h-3zM297 281.5h3v3h-3zM598 285.8h3v3h-3zM252 283.4h3v3h-3zM750 285.3h3v3h-3zM438 284.9h3v3h-3zM633 283.6h3v3h-3zM678 290.7h3v3h-3zM143 283.5h3v3h-3zM94 284.6h3v3h-3zM743 278.7h3v3h-3zM424 295.6h3v3h-3zM160 290.2h3v3h-3zM161 290.0h3v3h-3zM720 283.5h3v3h-3zM53 288.8h3v3h-3zM335 285.4h3v3h-3zM419 285.3h3v3h-3zM351 283.7h3v3h-3zM649 279.9h3v3h-3zM661 286.0h3v3h-3zM527 283.3h3v3h-3zM449 285.0h3v3h-3zM211 279.1h3v3h-3zM464 288.9h3v3h-3zM734 285.7h3v3h-3zM738 285.3h3v3h-3zM363 281.5h3v3h-3zM734 286.5h3v3h-3zM420 286.4h3v3h-3zM591 286.2h3v3h-3zM363 286.0h3v3h-3zM243 283.7h3v3h-3zM341 282.2h3v3h-3zM212 285.1h3v3h-3zM468 280.9h3v3h-3zM477 288.6h3v3h-3zM94 282.5h3v3h-3zM310 287.6h3v3h-3zM457 288.8h3v3h-3zM678 284.2h3v3h-3zM634 281.6h3v3h-3zM413 281.9h3v3h-3zM229 282.5h3v3h-3zM123 280.8h3v3h-3zM142 286.1h3v3h-3zM313 285.8h3v3h-3zM71 281.7h3v3h-3zM132 284.7h3v3h-3zM222 281.9h3v3h-3zM404 286.0h3v3h-3zM140 283.9h3v3h-3zM535 287.4h3v3h-3zM484 288.8h3v3h-3zM767 284.8h3v3h-3zM219 287.8h3v3h-3zM516 283.1h3v3h-3zM170 288.8h3v3h-3zM660 285.5h3v3h-3zM707 283.0h3v3h-3zM129 288.6h3v3h-3zM113 286.5h3v3h-3zM392 287.1h3v3h-3zM409 287.9h3v3h-3zM679 282.5h3v3h-3zM146 284.6h3v3h-3zM174 278.6h3v3h-3zM95 282.4h3v3h-3zM482 282.5h3v3h-3zM354 282.2h3v3h-3zM335 282.8h3v3h-3zM602 287.3h3v3h-3zM108 287.0h3v3h-3zM468 286.6h3v3h-3zM664 287.2h3v3h-3zM617 282.9h3v3h-3zM498 287.7h3v3h-3zM492 285.5h3v3h-3zM546 286.2h3v3h-3zM744 284.7h3v3h-3zM357 278.0h3v3h-3zM467 285.9h3v3h-3zM238 278.8h3v3h-3zM381 286.4h3v3h-3zM524 286.9h3v3h-3zM453 283.2h3v3h-3zM714 283.3h3v3h-3zM155 286.1h3v3h-3zM100 284.7h3v3h-3zM677 285.6h3v3h-3zM496 284.5h3v3h-3zM353 285.2h3v3h-3zM412 285.1h3v3h-3zM532 290.4h3v3h-3zM385 289.3h3v3h-3zM80 285.5h3v3h-3zM363 284.2h3v3h-3zM496 283.7h3v3h-3zM486 291.9h3v3h-3zM92 288.0h3v3h-3zM170 284.1h3v3h-3zM548 281.2h3v3h-3zM160 281.9h3v3h-3zM370 279.5h3v3h-3zM776 285.7h3v3h-3zM153 278.8h3v3h-3zM492 281.1h3v3h-3zM516 286.8h3v3h-3zM774 287.8h3v3h-3zM186 283.8h3v3h-3zM226 287.5h3v3h-3zM140 289.4h3v3h-3zM590 285.3h3v3h-3zM226 282.7h3v3h-3zM56 288.1h3v3h-3zM403 286.0h3v3h-3zM753 279.2h3v3h-3zM393 287.2h3v3h-3zM249 284.5h3v3h-3zM224 281.4h3v3h-3zM354 287.5h3v3h-3zM632 285.1h3v3h-3zM202 281.4h3v3h-3zM380 283.3h3v3h-3zM489 294.1h3v3h-3zM191 288.0h3v3h-3zM245 280.5h3v3h-3zM473 287.1h3v3h-3zM645 286.6h3v3h-3zM424 288.5h3v3h-3zM125 286.1h3v3h-3zM364 288.0h3v3h-3zM186 285.9h3v3h-3zM698 285.5h3v3h-3zM556 286.4h3v3h-3zM399 284.4h3v3h-3zM732 287.6h3v3h-3zM261 282.6h3v3h-3zM441 285.1h3v3h-3zM201 282.9h3v3h-3zM348 285.6h3v3h-3zM361 288.5h3v3h-3zM66 281.2h3v3h-3zM419 283.3h3v3h-3zM401 285.7h3v3h-3zM481 287.4h3v3h-3zM81 279.5h3v3h-3zM594 284.3h3v3h-3zM718 286.7h3v3h-3zM187 288.4h3v3h-3zM369 280.2h3v3h-3zM333 284.4h3v3h-3zM510 287.3h3v3h-3zM336 281.9h3v3h-3zM756 283.2h3v3h-3zM482 285.8h3v3h-3zM92 287.9h3v3h-3zM54 287.6h3v3h-3zM747 284.5h3v3h-3zM285 283.8h3v3h-3zM534 278.9h3v3h-3zM485 281.2h3v3h-3zM539 287.2h3v3h-3zM586 279.7h3v3h-3zM738 281.9h3v3h-3zM446 280.5h3v3h-3zM519 282.6h3v3h-3zM344 286.9h3v3h-3zM209 287.6h3v3h-3zM476 282.6h3v3h-3zM763 284.3h3v3h-3zM656 285.2h3v3h-3zM295 283.7h3v3h-3zM573 287.3h3v3h-3zM673 286.3h3v3h-3zM753 289.2h3v3h-3zM420 284.0h3v3h-3zM438 284.1h3v3h-3zM248 280.9h3v3h-3zM733 277.4h3v3h-3zM461 279.6h3v3h-3zM183 278.4h3v3h-3zM654 286.0h3v3h-3zM281 286.4h3v3h-3zM303 281.7h3v3h-3zM241 284.3h3v3h-3zM578 281.4h3v3h-3zM560 282.4h3v3h-3zM247 284.0h3v3h-3zM436 286.4h3v3h-3zM609 288.1h3v3h-3zM570 285.0h3v3h-3zM146 283.6h3v3h-3zM402 286.8h3v3h-3zM211 285.8h3v3h-3zM81 285.6h3v3h-3zM221 282.4h3v3h-3zM676 289.5h3v3h-3zM765 287.1h3v3h-3zM427 285.6h3v3h-3zM665 282.4h3v3h-3zM715 287.0h3v3h-3zM350 287.4h3v3h-3zM261 286.0h3v3h-3zM59 285.4h3v3h-3zM520 283.1h3v3h-3zM315 284.0h3v3h-3zM160 284.0h3v3h-3zM466 290.0h3v3h-3zM142 282.5h3v3h-3zM638 288.8h3v3h-3zM350 283.8h3v3h-3zM772 283.7h3v3h-3zM410 286.6h3v3h-3zM563 288.0h3v3h-3zM610 288.8h3v3h-3zM305 290.3h3v3h-3zM619 289.3h3v3h-3zM227 280.7h3v3h-3zM732 283.5h3v3h-3zM543 291.5h3v3h-3zM245 284.0h3v3h-3zM284 287.5h3v3h-3zM454 286.6h3v3h-3zM550 286.2h3v3h-3zM657 280.1h3v3h-3zM724 287.2h3v3h-3zM686 281.7h3v3h-3zM423 285.4h3v3h-3zM681 286.0h3v3h-3zM226 281.1h3v3h-3zM644 290.2h3v3h-3zM542 290.2h3v3h-3zM634 283.7h3v3h-3zM242 285.5h3v3h-3zM686 283.2h3v3h-3zM723 285.8h3v3h-3zM593 287.3h3v3h-3zM632 282.4h3v3h-3zM487 284.1h3v3h-3zM119 286.1h3v3h-3zM293 288.8h3v3h-3zM465 287.1h3v3h-3zM656 282.1h3v3h-3zM630 281.5h3v3h-3zM431 278.5h3v3h-3zM543 287.4h3v3h-3zM454 284.5h3v3h-3zM280 282.6h3v3h-3zM479 284.8h3v3h-3zM58 290.7h3v3h-3zM721 284.2h3v3h-3zM66 287.8h3v3h-3zM549 287.3h3v3h-3zM314 277.5h3v3h-3zM414 278.9h3v3h-3zM518 286.7h3v3h-3zM498 286.9h3v3h-3zM444 286.4h3v3h-3zM361 284.5h3v3h-3zM347 280.0h3v3h-3zM537 281.7h3v3h-3zM457 286.9h3v3h-3zM119 277.4h3v3h-3zM280 283.8h3v3h-3zM684 287.8h3v3h-3zM462 283.5h3v3h-3zM119 281.3h3v3h-3zM306 286.1h3v3h-3zM519 281.8h3v3h-3zM663 287.3h3v3h-3zM182 284.7h3v3h-3zM168 286.7h3v3h-3zM165 283.9h3v3h-3zM257 285.6h3v3h-3zM289 284.4h3v3h-3zM185 288.4h3v3h-3zM613 284.7h3v3h-3zM723 286.2h3v3h-3zM527 286.8h3v3h-3zM180 282.3h3v3h-3zM300 286.3h3v3h-3zM733 282.4h3v3h-3zM134 288.5h3v3h-3zM474 285.9h3v3h-3zM354 280.2h3v3h-3zM203 287.2h3v3h-3zM186 280.9h3v3h-3zM693 285.1h3v3h-3zM67 282.3h3v3h-3zM651 280.3h3v3h-3zM752 285.5h3v3h-3zM548 281.8h3v3h-3zM616 285.3h3v3h-3zM305 283.0h3v3h-3zM753 284.3h3v3h-3zM529 287.6h3v3h-3zM291 287.3h3v3h-3zM95 280.3h3v3h-3zM201 290.3h3v3h-3zM95 276.3h3v3h-3zM351 285.9h3v3h-3zM150 283.6h3v3h-3zM378 281.4h3v3h-3zM775 283.8h3v3h-3zM567 275.5h3v3h-3zM254 287.1h3v3h-3zM674 285.3h3v3h-3zM561 279.8h3v3h-3zM746 287.9h3v3h-3zM662 281.6h3v3h-3zM615 290.2h3v3h-3zM592 284.2h3v3h-3zM732 282.8h3v3h-3zM505 279.2h3v3h-3zM421 281.4h3v3h-3zM549 287.0h3v3h-3zM308 288.3h3v3h-3zM538 285.1h3v3h-3zM195 287.8h3v3h-3zM440 289.8h3v3h-3zM679 288.0h3v3h-3zM76 285.0h3v3h-3zM505 287.9h3v3h-3zM677 280.8h3v3h-3zM670 286.0h3v3h-3zM63 287.4h3v3h-3zM612 286.6h3v3h-3zM329 281.5h3v3h-3zM747 284.7h3v3h-3zM159 282.6h3v3h-3zM633 286.4h3v3h-3zM287 284.4h3v3h-3zM94 283.6h3v3h-3zM490 284.8h3v3h-3zM706 285.5h3v3h-3zM143 285.9h3v3h-3zM224 287.5h3v3h-3zM189 289.8h3v3h-3zM64 289.4h3v3h-3zM126 283.4h3v3h-3zM711 283.3h3v3h-3zM433 285.0h3v3h-3zM332 284.5h3v3h-3zM320 280.2h3v3h-3zM339 280.5h3v3h-3zM157 282.1h3v3h-3zM462 286.5h3v3h-3zM122 284.6h3v3h-3zM344 287.3h3v3h-3zM167 283.4h3v3h-3zM537 285.0h3v3h-3zM642 287.6h3v3h-3zM313 288.5h3v3h-3zM216 285.6h3v3h-3zM644 283.2h3v3h-3zM425 280.9h3v3h-3zM531 286.9h3v3h-3zM446 286.1h3v3h-3zM443 283.5h3v3h-3zM222 280.0h3v3h-3zM746 283.9h3v3h-3zM722 285.2h3v3h-3zM344 287.1h3v3h-3zM715 288.8h3v3h-3zM452 280.7h3v3h-3zM197 289.4h3v3h-3zM249 286.2h3v3h-3zM339 290.9h3v3h-3zM53 285.0h3v3h-3zM516 283.1h3v3h-3zM270 280.3h3v3h-3zM616 287.8h3v3h-3zM331 286.0h3v3h-3zM162 279.0h3v3h-3zM466 285.3h3v3h-3zM312 278.5h3v3h-3zM160 284.5h3v3h-3zM674 283.5h3v3h-3zM121 288.1h3v3h-3zM686 281.6h3v3h-3zM151 280.4h3v3h-3zM337 284.6h3v3h-3zM540 288.3h3v3h-3zM740 283.5h3v3h-3zM380 285.0h3v3h-3zM585 287.3h3v3h-3zM555 287.8h3v3h-3zM64 290.4h3v3h-3zM534 285.6h3v3h-3zM554 290.0h3v3h-3zM464 283.5h3v3h-3zM697 291.3h3v3h-3zM742 284.2h3v3h-3zM196 286.9h3v3h-3zM347 284.5h3v3h-3zM65 285.4h3v3h-3zM80 286.9h3v3h-3zM180 284.2h3v3h-3zM559 285.7h3v3h-3zM538 284.4h3v3h-3zM640 282.6h3v3h-3zM366 281.0h3v3h-3zM743 280.1h3v3h-3zM618 285.1h3v3h-3zM122 288.7h3v3h-3zM443 284.0h3v3h-3zM199 278.2h3v3h-3zM622 284.0h3v3h-3zM433 286.7h3v3h-3zM466 278.9h3v3h-3zM731 285.7h3v3h-3zM192 290.4h3v3h-3zM719 282.9h3v3h-3zM566 281.8h3v3h-3zM427 284.7h3v3h-3zM637 283.9h3v3h-3zM680 281.5h3v3h-3zM625 284.6h3v3h-3zM696 293.0h3v3h-3zM578 283.8h3v3h-3zM678 280.7h3v3h-3zM256 285.8h3v3h-3zM433 285.9h3v3h-3zM247 283.2h3v3h-3zM114 286.7h3v3h-3zM59 285.2h3v3h-3zM575 284.5h3v3h-3zM348 285.4h3v3h-3zM662 279.2h3v3h-3zM602 281.3h3v3h-3zM211 284.0h3v3h-3zM134 286.9h3v3h-3zM272 286.5h3v3h-3zM595 285.0h3v3h-3zM193 287.6h3v3h-3zM267 287.6h3v3h-3zM364 285.9h3v3h-3zM752 284.0h3v3h-3zM427 286.7h3v3h-3zM651 282.5h3v3h-3zM471 283.6h3v3h-3zM743 284.7h3v3h-3zM241 288.4h3v3h-3zM579 282.7h3v3h-3zM485 284.0h3v3h-3zM348 284.4h3v3h-3zM105 284.1h3v3h-3zM194 289.4h3v3h-3zM113 286.5h3v3h-3zM648 285.5h3v3h-3zM457 280.7h3v3h-3zM586 281.9h3v3h-3zM354 284.0h3v3h-3zM549 287.7h3v3h-3zM68 286.2h3v3h-3zM743 287.6h3v3h-3zM460 286.8h3v3h-3zM338 285.0h3v3h-3zM238 288.5h3v3h-3zM65 284.2h3v3h-3zM365 282.8h3v3h-3zM563 286.9h3v3h-3zM695 281.3h3v3h-3zM228 279.3h3v3h-3zM131 288.1h3v3h-3zM240 284.0h3v3h-3zM133 283.2h3v3h-3zM59 288.1h3v3h-3zM237 281.8h3v3h-3zM733 279.8h3v3h-3zM137 283.4h3v3h-3zM580 284.0h3v3h-3zM102 292.4h3v3h-3zM244 284.2h3v3h-3zM442 289.6h3v3h-3zM695 282.4h3v3h-3zM490 285.1h3v3h-3zM491 290.1h3v3h-3zM373 280.6h3v3h-3zM406 284.8h3v3h-3zM605 288.6h3v3h-3zM438 286.4h3v3h-3zM715 288.9h3v3h-3zM63 281.8h3v3h-3zM489 282.2h3v3h-3zM299 282.7h3v3h-3zM295 284.2h3v3h-3zM563 283.0h3v3h-3zM520 283.4h3v3h-3zM512 287.4h3v3h-3zM395 284.7h3v3h-3zM356 277.3h3v3h-3zM537 289.1h3v3h-3zM742 279.4h3v3h-3zM587 282.8h3v3h-3zM654 283.6h3v3h-3zM191 283.0h3v3h-3zM398 285.8h3v3h-3zM422 282.9h3v3h-3zM255 282.5h3v3h-3zM767 285.8h3v3h-3zM213 287.2h3v3h-3zM462 287.4h3v3h-3zM760 285.3h3v3h-3zM352 286.1h3v3h-3zM239 282.8h3v3h-3zM110 288.9h3v3h-3zM494 288.2h3v3h-3zM580 284.6h3v3h-3zM145 283.2h3v3h-3zM83 285.1h3v3h-3zM111 284.4h3v3h-3zM717 284.3h3v3h-3zM545 287.4h3v3h-3zM89 280.5h3v3h-3zM469 283.2h3v3h-3zM103 286.6h3v3h-3zM126 283.2h3v3h-3zM483 289.1h3v3h-3zM619 285.3h3v3h-3zM462 288.8h3v3h-3zM394 286.1h3v3h-3zM270 285.6h3v3h-3zM413 282.7h3v3h-3zM750 285.6h3v3h-3zM748 283.9h3v3h-3zM481 291.0h3v3h-3zM81 286.5h3v3h-3zM654 286.2h3v3h-3zM70 283.8h3v3h-3zM521 286.0h3v3h-3zM620 283.4h3v3h-3zM683 284.0h3v3h-3zM673 279.1h3v3h-3zM341 286.0h3v3h-3zM257 283.8h3v3h-3zM117 281.9h3v3h-3zM265 285.5h3v3h-3zM225 286.2h3v3h-3zM742 284.0h3v3h-3zM506 280.7h3v3h-3zM738 284.2h3v3h-3zM244 285.9h3v3h-3zM257 287.6h3v3h-3zM61 287.1h3v3h-3zM671 285.7h3v3h-3zM752 284.4h3v3h-3zM436 283.2h3v3h-3zM546 288.6h3v3h-3zM485 290.7h3v3h-3zM64 283.9h3v3h-3zM576 285.9h3v3h-3zM386 289.1h3v3h-3zM189 286.3h3v3h-3zM176 282.5h3v3h-3zM487 280.4h3v3h-3zM437 285.6h3v3h-3zM432 286.8h3v3h-3zM91 284.2h3v3h-3zM503 283.1h3v3h-3zM545 292.5h3v3h-3zM185 283.3h3v3h-3zM688 287.1h3v3h-3zM55 281.9h3v3h-3zM507 282.9h3v3h-3zM166 283.0h3v3h-3zM588 287.1h3v3h-3zM397 286.3h3v3h-3zM56 285.0h3v3h-3zM451 283.1h3v3h-3zM464 283.7h3v3h-3zM111 282.0h3v3h-3zM519 288.9h3v3h-3zM362 280.2h3v3h-3zM534 279.1h3v3h-3zM671 287.3h3v3h-3zM307 287.3h3v3h-3zM745 292.2h3v3h-3zM345 287.0h3v3h-3zM144 286.3h3v3h-3zM402 283.9h3v3h-3zM261 287.9h3v3h-3zM473 286.8h3v3h-3zM528 290.6h3v3h-3zM114 280.6h3v3h-3zM303 283.1h3v3h-3zM101 286.3h3v3h-3zM473 282.1h3v3h-3zM165 281.7h3v3h-3zM686 282.5h3v3h-3zM202 289.5h3v3h-3zM382 281.4h3v3h-3zM758 282.2h3v3h-3zM318 278.2h3v3h-3zM217 288.5h3v3h-3zM156 283.8h3v3h-3zM153 282.9h3v3h-3zM477 282.5h3v3h-3zM157 284.9h3v3h-3zM542 286.4h3v3h-3zM748 288.2h3v3h-3zM582 275.5h3v3h-3zM757 285.9h3v3h-3zM561 285.2h3v3h-3zM110 281.3h3v3h-3zM773 285.5h3v3h-3zM351 288.1h3v3h-3zM512 281.6h3v3h-3zM174 287.8h3v3h-3zM447 286.8h3v3h-3zM595 286.5h3v3h-3zM773 282.8h3v3h-3zM686 279.0h3v3h-3zM243 281.4h3v3h-3zM633 283.9h3v3h-3zM53 286.9h3v3h-3zM393 284.6h3v3h-3zM299 283.0h3v3h-3zM528 279.3h3v3h-3zM717 276.8h3v3h-3zM62 282.5h3v3h-3zM297 289.3h3v3h-3zM72 291.9h3v3h-3zM259 285.7h3v3h-3zM253 286.5h3v3h-3zM189 283.5h3v3h-3zM265 286.3h3v3h-3zM713 287.1h3v3h-3zM566 287.4h3v3h-3zM350 285.2h3v3h-3zM603 286.7h3v3h-3zM258 281.4h3v3h-3zM694 283.9h3v3h-3zM441 285.7h3v3h-3zM181 287.1h3v3h-3zM757 288.3h3v3h-3zM597 282.5h3v3h-3zM678 289.4h3v3h-3zM662 291.5h3v3h-3zM552 286.8h3v3h-3zM496 285.0h3v3h-3zM518 280.3h3v3h-3zM409 287.7h3v3h-3zM774 289.4h3v3h-3zM406 285.1h3v3h-3zM299 280.9h3v3h-3zM234 278.9h3v3h-3zM428 284.2h3v3h-3zM213 286.7h3v3h-3zM476 283.8h3v3h-3zM566 285.8h3v3h-3zM722 284.5h3v3h-3zM454 286.2h3v3h-3zM342 283.3h3v3h-3zM67 284.6h3v3h-3zM311 281.4h3v3h-3zM288 285.0h3v3h-3zM588 281.7h3v3h-3zM644 288.7h3v3h-3zM597 287.5h3v3h-3zM471 289.3h3v3h-3zM531 289.9h3v3h-3zM577 278.7h3v3h-3zM707 286.3h3v3h-3zM550 287.0h3v3h-3zM733 283.7h3v3h-3zM395 285.7h3v3h-3zM455 285.5h3v3h-3zM534 283.0h3v3h-3zM402 276.8h3v3h-3zM300 287.7h3v3h-3zM496 284.8h3v3h-3zM670 286.9h3v3h-3zM522 290.7h3v3h-3zM557 284.4h3v3h-3zM738 284.6h3v3h-3zM493 281.3h3v3h-3zM65 286.8h3v3h-3zM407 281.7h3v3h-3zM62 285.3h3v3h-3zM461 285.0h3v3h-3zM340 283.4h3v3h-3zM638 280.0h3v3h-3zM98 283.8h3v3h-3zM89 285.0h3v3h-3zM463 284.1h3v3h-3zM440 290.2h3v3h-3zM465 285.7h3v3h-3zM500 285.1h3v3h-3zM428 280.8h3v3h-3zM721 284.6h3v3h-3zM293 279.2h3v3h-3zM247 285.8h3v3h-3zM253 281.5h3v3h-3zM180 283.4h3v3h-3zM196 282.9h3v3h-3zM394 285.2h3v3h-3zM695 285.3h3v3h-3zM769 283.5h3v3h-3zM717 286.8h3v3h-3zM720 281.0h3v3h-3zM260 281.9h3v3h-3zM332 289.7h3v3h-3zM555 284.0h3v3h-3zM174 282.1h3v3h-3zM110 285.2h3v3h-3zM516 285.9h3v3h-3zM301 282.4h3v3h-3zM596 287.3h3v3h-3zM706 282.9h3v3h-3zM592 283.4h3v3h-3zM407 287.7h3v3h-3zM57 285.6h3v3h-3zM205 289.0h3v3h-3zM703 289.8h3v3h-3zM404 280.1h3v3h-3zM633 283.7h3v3h-3zM153 281.4h3v3h-3zM312 281.9h3v3h-3zM211 286.6h3v3h-3zM660 282.4h3v3h-3zM659 286.2h3v3h-3zM653 287.0h3v3h-3zM508 282.6h3v3h-3zM519 284.6h3v3h-3zM601 284.3h3v3h-3zM96 286.8h3v3h-3zM690 285.5h3v3h-3zM100 293.1h3v3h-3zM340 288.7h3v3h-3zM59 286.3h3v3h-3zM365 291.2h3v3h-3zM209 287.2h3v3h-3zM563 281.4h3v3h-3zM391 287.0h3v3h-3zM608 285.1h3v3h-3zM245 285.9h3v3h-3zM356 286.8h3v3h-3zM266 285.8h3v3h-3zM539 287.1h3v3h-3zM181 286.1h3v3h-3zM242 283.3h3v3h-3zM188 281.4h3v3h-3zM277 285.7h3v3h-3zM275 283.0h3v3h-3zM367 285.9h3v3h-3zM573 283.9h3v3h-3zM710 285.1h3v3h-3zM64 287.1h3v3h-3zM157 281.2h3v3h-3zM539 288.2h3v3h-3zM209 285.6h3v3h-3zM674 281.7h3v3h-3zM465 283.4h3v3h-3zM339 291.9h3v3h-3zM678 286.1h3v3h-3zM712 283.6h3v3h-3zM471 290.1h3v3h-3zM212 279.5h3v3h-3zM61 285.6h3v3h-3zM739 287.8h3v3h-3zM407 281.6h3v3h-3zM377 285.9h3v3h-3zM135 289.4h3v3h-3zM622 277.5h3v3h-3zM137 287.2h3v3h-3zM368 283.9h3v3h-3zM110 281.9h3v3h-3zM751 282.7h3v3h-3zM591 288.6h3v3h-3zM499 281.7h3v3h-3zM520 277.8h3v3h-3zM690 288.3h3v3h-3zM513 287.0h3v3h-3zM223 286.6h3v3h-3zM708 281.0h3v3h-3zM583 283.5h3v3h-3zM519 279.1h3v3h-3zM571 280.0h3v3h-3zM573 285.4h3v3h-3zM358 283.2h3v3h-3zM217 288.3h3v3h-3zM489 286.2h3v3h-3zM369 284.0h3v3h-3zM601 286.5h3v3h-3zM222 287.6h3v3h-3zM674 284.8h3v3h-3zM483 284.4h3v3h-3zM304 280.1h3v3h-3zM754 282.6h3v3h-3zM257 282.9h3v3h-3zM457 284.4h3v3h-3zM384 285.1h3v3h-3zM220 283.7h3v3h-3zM229 286.7h3v3h-3zM284 281.9h3v3h-3zM175 289.5h3v3h-3zM734 286.6h3v3h-3zM774 283.1h3v3h-3zM450 289.3h3v3h-3zM716 287.0h3v3h-3zM624 281.4h3v3h-3zM254 284.1h3v3h-3zM59 283.2h3v3h-3zM697 285.1h3v3h-3zM326 289.6h3v3h-3zM622 285.4h3v3h-3zM198 284.7h3v3h-3zM691 287.8h3v3h-3zM297 292.2h3v3h-3zM571 279.5h3v3h-3zM562 286.4h3v3h-3zM648 291.6h3v3h-3zM629 283.3h3v3h-3zM293 285.8h3v3h-3zM245 285.7h3v3h-3zM485 286.1h3v3h-3zM731 290.4h3v3h-3zM63 286.7h3v3h-3zM501 283.7h3v3h-3zM359 284.9h3v3h-3zM240 288.7h3v3h-3zM247 286.7h3v3h-3zM330 284.1h3v3h-3zM265 289.3h3v3h-3zM278 288.1h3v3h-3zM761 284.0h3v3h-3zM582 282.7h3v3h-3zM594 284.9h3v3h-3zM717 282.8h3v3h-3zM628 282.2h3v3h-3zM106 285.0h3v3h-3zM589 283.8h3v3h-3zM174 284.0h3v3h-3zM728 287.9h3v3h-3zM599 278.9h3v3h-3zM399 293.9h3v3h-3zM354 284.9h3v3h-3zM343 287.0h3v3h-3zM128 285.9h3v3h-3zM178 284.1h3v3h-3zM290 285.3h3v3h-3zM714 287.9h3v3h-3zM642 280.8h3v3h-3zM530 289.5h3v3h-3zM602 289.3h3v3h-3zM408 286.1h3v3h-3zM738 284.9h3v3h-3zM280 282.1h3v3h-3zM382 285.5h3v3h-3zM67 291.9h3v3h-3zM479 285.8h3v3h-3zM356 286.4h3v3h-3zM127 286.0h3v3h-3zM423 283.3h3v3h-3zM729 289.1h3v3h-3zM632 285.2h3v3h-3zM430 282.6h3v3h-3zM728 284.3h3v3h-3zM408 282.8h3v3h-3zM192 288.1h3v3h-3zM530 286.8h3v3h-3zM101 286.6h3v3h-3zM298 280.8h3v3h-3zM695 281.2h3v3h-3zM452 288.9h3v3h-3zM108 284.7h3v3h-3zM131 286.8h3v3h-3zM433 286.8h3v3h-3zM404 288.4h3v3h-3zM273 286.0h3v3h-3zM339 283.2h3v3h-3zM610 284.4h3v3h-3zM691 283.9h3v3h-3zM64 290.9h3v3h-3zM673 285.5h3v3h-3zM699 285.1h3v3h-3zM555 280.6h3v3h-3zM220 283.1h3v3h-3zM593 286.0h3v3h-3zM309 284.5h3v3h-3zM492 290.1h3v3h-3zM321 283.1h3v3h-3zM109 285.7h3v3h-3zM86 283.6h3v3h-3zM415 281.2h3v3h-3zM245 282.4h3v3h-3zM411 279.4h3v3h-3zM241 286.9h3v3h-3zM608 282.8h3v3h-3zM397 287.4h3v3h-3zM748 287.1h3v3h-3zM434 283.7h3v3h-3zM431 285.5h3v3h-3zM125 287.4h3v3h-3zM440 288.0h3v3h-3zM642 288.2h3v3h-3zM545 284.0h3v3h-3zM221 286.9h3v3h-3zM137 281.9h3v3h-3zM603 282.6h3v3h-3zM522 288.6h3v3h-3zM608 282.1h3v3h-3zM648 286.5h3v3h-3zM663 287.8h3v3h-3zM356 284.4h3v3h-3zM443 285.5h3v3h-3zM672 284.4h3v3h-3zM278 284.9h3v3h-3zM359 284.2h3v3h-3zM196 284.9h3v3h-3zM339 286.9h3v3h-3zM450 287.2h3v3h-3zM417 294.8h3v3h-3zM523 290.3h3v3h-3zM131 281.3h3v3h-3zM321 283.8h3v3h-3zM688 288.5h3v3h-3zM486 281.1h3v3h-3zM352 279.8h3v3h-3zM106 282.1h3v3h-3zM440 284.1h3v3h-3zM513 284.2h3v3h-3zM134 284.0h3v3h-3zM317 288.4h3v3h-3zM296 281.3h3v3h-3zM768 284.8h3v3h-3zM219 284.5h3v3h-3zM130 284.4h3v3h-3zM96 284.2h3v3h-3zM229 285.3h3v3h-3zM692 288.0h3v3h-3zM224 286.4h3v3h-3zM597 288.7h3v3h-3zM423 285.1h3v3h-3zM236 282.2h3v3h-3zM595 281.1h3v3h-3zM638 283.9h3v3h-3zM266 286.2h3v3h-3zM677 282.0h3v3h-3zM707 278.1h3v3h-3zM290 280.9h3v3h-3zM126 287.5h3v3h-3zM374 285.1h3v3h-3zM268 287.9h3v3h-3zM486 285.9h3v3h-3zM218 285.4h3v3h-3zM147 291.8h3v3h-3zM375 287.2h3v3h-3zM613 282.7h3v3h-3zM575 288.4h3v3h-3zM189 284.1h3v3h-3zM217 282.2h3v3h-3zM555 287.8h3v3h-3zM493 286.6h3v3h-3zM712 283.7h3v3h-3zM541 289.7h3v3h-3zM686 284.2h3v3h-3zM572 286.4h3v3h-3zM741 281.1h3v3h-3zM357 284.9h3v3h-3zM255 288.9h3v3h-3zM337 282.3h3v3h-3zM72 284.7h3v3h-3zM662 289.1h3v3h-3zM733 279.7h3v3h-3zM741 284.4h3v3h-3zM386 281.8h3v3h-3zM484 281.5h3v3h-3zM568 281.4h3v3h-3zM320 284.8h3v3h-3zM638 288.1h3v3h-3zM647 290.5h3v3h-3zM549 283.0h3v3h-3zM173 283.2h3v3h-3zM374 277.3h3v3h-3zM565 284.1h3v3h-3zM729 280.9h3v3h-3zM169 285.6h3v3h-3zM377 288.3h3v3h-3zM162 282.9h3v3h-3zM366 284.8h3v3h-3zM421 285.2h3v3h-3zM153 286.6h3v3h-3zM118 278.9h3v3h-3zM369 286.7h3v3h-3zM59 286.8h3v3h-3zM447 284.4h3v3h-3zM642 286.7h3v3h-3zM129 281.8h3v3h-3zM618 283.6h3v3h-3zM360 282.8h3v3h-3zM420 285.5h3v3h-3zM113 285.2h3v3h-3zM452 289.2h3v3h-3zM462 286.3h3v3h-3zM608 288.8h3v3h-3zM612 285.4h3v3h-3zM128 286.6h3v3h-3zM590 281.8h3v3h-3zM746 279.1h3v3h-3zM617 283.8h3v3h-3zM283 286.1h3v3h-3zM212 288.1h3v3h-3zM322 286.4h3v3h-3zM300 287.7h3v3h-3zM190 283.2h3v3h-3zM105 283.4h3v3h-3zM416 283.4h3v3h-3zM61 282.4h3v3h-3zM69 285.4h3v3h-3zM286 283.1h3v3h-3zM738 280.2h3v3h-3zM735 286.0h3v3h-3zM727 288.6h3v3h-3zM465 283.2h3v3h-3zM149 283.9h3v3h-3zM156 281.9h3v3h-3zM749 280.3h3v3h-3zM434 287.0h3v3h-3zM53 281.0h3v3h-3zM200 284.1h3v3h-3zM656 284.4h3v3h-3zM255 286.3h3v3h-3zM258 287.7h3v3h-3zM582 284.8h3v3h-3zM713 280.8h3v3h-3zM209 289.2h3v3h-3zM654 286.7h3v3h-3zM418 278.2h3v3h-3zM752 282.5h3v3h-3zM623 283.3h3v3h-3zM117 284.8h3v3h-3zM290 285.6h3v3h-3zM284 281.5h3v3h-3zM714 287.6h3v3h-3zM756 286.0h3v3h-3zM431 282.8h3v3h-3zM74 283.5h3v3h-3zM491 286.4h3v3h-3zM419 284.4h3v3h-3zM465 289.5h3v3h-3zM341 285.2h3v3h-3zM188 284.0h3v3h-3zM279 286.5h3v3h-3zM491 286.6h3v3h-3zM300 283.5h3v3h-3zM213 288.2h3v3h-3zM90 280.9h3v3h-3zM63 281.2h3v3h-3zM734 278.3h3v3h-3zM367 287.0h3v3h-3zM567 286.6h3v3h-3zM748 288.5h3v3h-3zM728 283.1h3v3h-3zM356 281.9h3v3h-3zM70 288.7h3v3h-3zM607 284.9h3v3h-3zM630 284.0h3v3h-3zM174 290.3h3v3h-3zM292 285.5h3v3h-3zM359 286.5h3v3h-3zM500 281.7h3v3h-3zM680 287.9h3v3h-3zM392 281.8h3v3h-3zM62 285.1h3v3h-3zM509 281.8h3v3h-3zM603 286.6h3v3h-3zM414 284.4h3v3h-3zM188 286.7h3v3h-3zM92 282.5h3v3h-3zM553 284.2h3v3h-3zM516 281.0h3v3h-3zM597 287.1h3v3h-3zM362 290.9h3v3h-3zM720 281.1h3v3h-3zM329 284.6h3v3h-3zM264 283.6h3v3h-3zM240 284.3h3v3h-3zM612 283.2h3v3h-3zM565 286.5h3v3h-3zM542 285.6h3v3h-3zM725 286.2h3v3h-3zM477 286.8h3v3h-3zM326 285.8h3v3h-3zM87 285.8h3v3h-3zM296 290.2h3v3h-3zM470 287.3h3v3h-3zM485 280.5h3v3h-3zM555 289.9h3v3h-3zM118 282.3h3v3h-3zM404 289.5h3v3h-3zM450 285.2h3v3h-3zM229 284.0h3v3h-3zM451 284.5h3v3h-3zM516 283.8h3v3h-3zM258 286.2h3v3h-3zM204 281.0h3v3h-3zM483 281.0h3v3h-3zM774 284.7h3v3h-3zM285 288.1h3v3h-3zM444 286.3h3v3h-3zM688 284.3h3v3h-3zM775 287.9h3v3h-3zM526 291.6h3v3h-3zM738 285.7h3v3h-3zM654 280.9h3v3h-3zM642 281.3h3v3h-3zM738 285.4h3v3h-3zM159 287.4h3v3h-3zM438 288.6h3v3h-3zM127 285.8h3v3h-3zM487 285.6h3v3h-3zM279 288.3h3v3h-3zM571 283.1h3v3h-3zM199 286.9h3v3h-3zM366 294.4h3v3h-3zM768 286.3h3v3h-3zM83 284.9h3v3h-3z" fill="#5fa9b4" fill-opacity="0.3"/><path d="M106 284.8h4v2h-4zM533 285.9h4v2h-4zM733 286.0h4v2h-4zM354 286.6h4v2h-4zM115 284.9h4v2h-4zM303 287.3h4v2h-4zM447 284.7h4v2h-4zM566 283.9h4v2h-4zM87 284.1h4v2h-4zM669 284.9h4v2h-4zM417 285.1h4v2h-4zM774 285.1h4v2h-4zM704 284.5h4v2h-4zM340 284.9h4v2h-4zM190 284.2h4v2h-4zM62 282.8h4v2h-4zM464 286.1h4v2h-4zM324 284.4h4v2h-4zM666 284.3h4v2h-4zM449 286.6h4v2h-4zM400 284.7h4v2h-4zM376 283.4h4v2h-4zM480 284.1h4v2h-4zM385 283.8h4v2h-4zM692 285.4h4v2h-4zM323 285.1h4v2h-4zM341 283.7h4v2h-4zM227 284.8h4v2h-4zM224 286.2h4v2h-4zM337 284.8h4v2h-4zM774 285.6h4v2h-4zM516 286.0h4v2h-4zM580 284.5h4v2h-4zM344 282.4h4v2h-4zM724 286.1h4v2h-4zM58 286.1h4v2h-4zM565 284.0h4v2h-4zM646 284.7h4v2h-4zM585 285.4h4v2h-4zM434 286.5h4v2h-4zM742 284.6h4v2h-4zM721 283.5h4v2h-4zM529 286.2h4v2h-4zM482 285.0h4v2h-4zM260 285.4h4v2h-4zM301 285.7h4v2h-4zM54 284.7h4v2h-4zM467 284.6h4v2h-4zM765 284.3h4v2h-4zM714 284.5h4v2h-4zM125 285.8h4v2h-4zM608 286.9h4v2h-4zM647 284.4h4v2h-4zM512 282.5h4v2h-4zM532 284.9h4v2h-4zM588 284.1h4v2h-4zM511 284.6h4v2h-4zM723 282.3h4v2h-4zM528 287.5h4v2h-4zM415 285.4h4v2h-4zM641 284.2h4v2h-4zM685 281.8h4v2h-4zM193 284.9h4v2h-4zM430 284.2h4v2h-4zM753 284.4h4v2h-4zM416 287.8h4v2h-4zM228 285.7h4v2h-4zM685 282.7h4v2h-4zM476 286.5h4v2h-4zM262 284.2h4v2h-4zM72 285.7h4v2h-4zM561 286.0h4v2h-4zM94 285.9h4v2h-4zM287 283.6h4v2h-4zM440 287.5h4v2h-4zM630 284.0h4v2h-4zM277 285.8h4v2h-4zM638 284.3h4v2h-4zM382 284.7h4v2h-4zM200 283.8h4v2h-4zM124 284.4h4v2h-4zM634 285.4h4v2h-4zM755 285.1h4v2h-4zM121 287.0h4v2h-4zM594 284.8h4v2h-4zM682 284.4h4v2h-4zM617 286.1h4v2h-4zM709 286.0h4v2h-4zM269 286.3h4v2h-4zM158 285.8h4v2h-4zM489 286.0h4v2h-4zM460 285.1h4v2h-4zM297 283.2h4v2h-4zM713 285.7h4v2h-4zM118 286.5h4v2h-4zM558 287.3h4v2h-4zM701 283.9h4v2h-4zM534 285.1h4v2h-4zM274 287.2h4v2h-4zM664 283.4h4v2h-4zM362 284.3h4v2h-4zM688 287.5h4v2h-4zM417 288.3h4v2h-4zM367 285.2h4v2h-4zM607 280.5h4v2h-4zM319 287.4h4v2h-4zM396 284.1h4v2h-4zM124 286.9h4v2h-4zM441 283.0h4v2h-4zM766 286.7h4v2h-4zM606 285.8h4v2h-4zM61 285.8h4v2h-4zM562 286.3h4v2h-4zM144 285.0h4v2h-4zM418 282.9h4v2h-4zM107 283.9h4v2h-4zM286 284.8h4v2h-4zM336 284.6h4v2h-4zM312 287.7h4v2h-4zM563 285.1h4v2h-4zM275 282.4h4v2h-4zM620 284.5h4v2h-4zM78 286.6h4v2h-4zM159 283.9h4v2h-4zM252 284.8h4v2h-4zM130 284.8h4v2h-4zM158 280.2h4v2h-4zM766 285.2h4v2h-4zM525 289.3h4v2h-4zM711 285.2h4v2h-4zM660 284.6h4v2h-4zM376 286.0h4v2h-4zM285 287.2h4v2h-4zM267 284.4h4v2h-4zM65 285.7h4v2h-4zM71 285.6h4v2h-4zM318 285.9h4v2h-4zM232 282.8h4v2h-4zM95 285.8h4v2h-4zM651 283.0h4v2h-4zM774 285.1h4v2h-4zM268 282.6h4v2h-4zM321 283.1h4v2h-4zM181 283.2h4v2h-4zM600 283.9h4v2h-4zM573 285.3h4v2h-4zM608 285.6h4v2h-4zM422 284.8h4v2h-4zM352 286.9h4v2h-4zM329 287.9h4v2h-4zM464 286.8h4v2h-4zM263 285.7h4v2h-4zM720 286.1h4v2h-4zM643 284.9h4v2h-4zM722 285.8h4v2h-4zM598 284.1h4v2h-4zM327 285.2h4v2h-4zM71 286.8h4v2h-4zM258 283.0h4v2h-4zM534 286.7h4v2h-4zM425 284.9h4v2h-4zM613 286.0h4v2h-4zM707 284.3h4v2h-4zM667 284.5h4v2h-4zM766 285.6h4v2h-4zM91 287.1h4v2h-4zM129 285.4h4v2h-4zM81 286.3h4v2h-4zM538 284.7h4v2h-4zM675 284.3h4v2h-4zM365 285.8h4v2h-4zM546 286.4h4v2h-4zM412 287.0h4v2h-4zM325 284.7h4v2h-4zM465 288.2h4v2h-4zM484 287.5h4v2h-4zM593 286.2h4v2h-4zM331 285.8h4v2h-4zM340 285.2h4v2h-4zM481 284.3h4v2h-4zM231 285.0h4v2h-4zM465 284.9h4v2h-4zM596 287.8h4v2h-4zM512 284.6h4v2h-4zM610 288.5h4v2h-4zM121 284.3h4v2h-4zM251 283.2h4v2h-4zM238 283.6h4v2h-4zM403 285.7h4v2h-4zM383 284.8h4v2h-4zM490 287.1h4v2h-4zM340 283.2h4v2h-4zM395 284.8h4v2h-4zM612 283.3h4v2h-4zM270 284.6h4v2h-4zM614 285.2h4v2h-4zM256 283.1h4v2h-4zM64 284.0h4v2h-4zM374 285.6h4v2h-4zM588 283.7h4v2h-4zM132 286.0h4v2h-4zM601 285.9h4v2h-4zM327 286.3h4v2h-4zM408 284.9h4v2h-4zM586 284.6h4v2h-4zM329 285.8h4v2h-4zM230 283.7h4v2h-4zM515 285.9h4v2h-4zM545 286.7h4v2h-4zM551 287.0h4v2h-4zM107 285.4h4v2h-4zM325 288.1h4v2h-4zM775 286.1h4v2h-4zM175 282.4h4v2h-4zM81 285.5h4v2h-4zM60 285.2h4v2h-4zM301 288.3h4v2h-4zM298 286.6h4v2h-4zM514 285.4h4v2h-4zM656 284.0h4v2h-4zM183 285.2h4v2h-4zM100 285.5h4v2h-4zM652 282.6h4v2h-4zM222 286.5h4v2h-4zM419 285.2h4v2h-4zM154 286.5h4v2h-4zM74 284.3h4v2h-4zM769 283.8h4v2h-4zM198 284.2h4v2h-4zM283 285.8h4v2h-4zM472 287.2h4v2h-4zM182 282.0h4v2h-4zM130 284.4h4v2h-4zM290 286.3h4v2h-4zM445 282.1h4v2h-4zM418 283.0h4v2h-4zM741 285.3h4v2h-4zM519 283.1h4v2h-4zM605 284.1h4v2h-4zM618 285.0h4v2h-4zM237 283.8h4v2h-4zM464 285.0h4v2h-4zM577 285.0h4v2h-4zM399 283.8h4v2h-4zM568 281.1h4v2h-4zM415 286.0h4v2h-4zM731 284.4h4v2h-4zM620 285.7h4v2h-4zM283 286.9h4v2h-4zM401 283.8h4v2h-4zM141 283.0h4v2h-4zM223 285.5h4v2h-4zM436 287.8h4v2h-4zM176 286.1h4v2h-4zM645 283.2h4v2h-4zM678 282.8h4v2h-4zM572 282.9h4v2h-4zM408 285.5h4v2h-4zM122 285.1h4v2h-4zM645 287.2h4v2h-4zM132 284.9h4v2h-4zM464 283.3h4v2h-4zM553 285.6h4v2h-4zM248 285.5h4v2h-4zM213 287.8h4v2h-4zM720 284.7h4v2h-4zM453 286.0h4v2h-4zM587 284.1h4v2h-4zM90 287.6h4v2h-4zM388 287.3h4v2h-4zM66 285.6h4v2h-4zM438 285.3h4v2h-4zM421 286.6h4v2h-4zM291 285.6h4v2h-4zM600 284.2h4v2h-4zM513 286.0h4v2h-4zM190 284.2h4v2h-4zM697 282.0h4v2h-4zM367 285.6h4v2h-4zM773 285.1h4v2h-4zM616 285.4h4v2h-4zM292 284.7h4v2h-4zM220 284.9h4v2h-4zM747 285.9h4v2h-4zM574 285.5h4v2h-4zM635 283.5h4v2h-4zM662 286.5h4v2h-4zM181 284.2h4v2h-4zM639 286.6h4v2h-4zM461 285.2h4v2h-4zM560 286.7h4v2h-4zM428 283.6h4v2h-4zM363 284.5h4v2h-4zM495 284.8h4v2h-4zM350 285.0h4v2h-4zM463 283.2h4v2h-4zM286 284.6h4v2h-4zM448 287.4h4v2h-4zM449 284.6h4v2h-4zM446 288.8h4v2h-4zM211 286.1h4v2h-4zM254 282.6h4v2h-4zM383 284.5h4v2h-4zM651 286.0h4v2h-4zM738 280.3h4v2h-4zM424 284.0h4v2h-4zM293 284.9h4v2h-4zM168 282.3h4v2h-4zM160 283.5h4v2h-4zM668 286.3h4v2h-4zM342 283.7h4v2h-4zM179 283.3h4v2h-4zM239 285.6h4v2h-4zM722 284.3h4v2h-4zM123 283.9h4v2h-4zM533 284.8h4v2h-4zM320 283.7h4v2h-4zM669 285.4h4v2h-4zM705 284.5h4v2h-4zM201 283.4h4v2h-4zM482 287.4h4v2h-4zM236 284.3h4v2h-4zM437 285.2h4v2h-4zM387 283.7h4v2h-4zM487 284.4h4v2h-4zM561 285.6h4v2h-4zM509 283.7h4v2h-4zM185 284.5h4v2h-4zM591 285.7h4v2h-4zM768 281.8h4v2h-4zM482 284.0h4v2h-4zM664 285.6h4v2h-4zM505 286.0h4v2h-4zM361 283.0h4v2h-4zM537 285.5h4v2h-4zM377 286.6h4v2h-4zM463 284.0h4v2h-4zM255 288.6h4v2h-4zM316 286.0h4v2h-4zM331 282.7h4v2h-4zM667 285.2h4v2h-4zM381 285.9h4v2h-4zM201 283.5h4v2h-4zM246 283.3h4v2h-4zM495 285.6h4v2h-4zM96 284.1h4v2h-4zM667 289.2h4v2h-4zM323 285.2h4v2h-4zM69 280.8h4v2h-4zM699 284.7h4v2h-4zM319 285.3h4v2h-4zM745 283.8h4v2h-4zM66 283.7h4v2h-4zM461 284.4h4v2h-4zM588 282.7h4v2h-4zM354 287.8h4v2h-4zM695 285.4h4v2h-4zM398 285.2h4v2h-4zM572 284.7h4v2h-4zM478 286.1h4v2h-4zM79 283.1h4v2h-4zM229 286.0h4v2h-4zM551 286.0h4v2h-4zM429 285.3h4v2h-4zM629 282.9h4v2h-4zM715 286.5h4v2h-4zM587 285.4h4v2h-4zM764 286.8h4v2h-4zM569 283.1h4v2h-4zM606 285.4h4v2h-4zM493 283.5h4v2h-4zM111 285.3h4v2h-4zM297 287.3h4v2h-4zM396 284.8h4v2h-4zM145 285.6h4v2h-4zM484 283.7h4v2h-4zM404 285.2h4v2h-4zM208 286.7h4v2h-4zM609 282.9h4v2h-4zM629 286.5h4v2h-4zM188 284.9h4v2h-4zM691 287.8h4v2h-4zM553 284.3h4v2h-4zM671 284.1h4v2h-4zM105 282.2h4v2h-4zM511 284.6h4v2h-4zM205 284.4h4v2h-4zM725 287.4h4v2h-4zM554 282.0h4v2h-4zM349 284.3h4v2h-4zM726 286.4h4v2h-4zM628 282.3h4v2h-4zM136 284.3h4v2h-4zM160 283.9h4v2h-4zM302 281.1h4v2h-4zM545 285.0h4v2h-4zM569 284.9h4v2h-4zM404 283.5h4v2h-4zM686 285.2h4v2h-4zM561 286.1h4v2h-4zM128 285.8h4v2h-4zM210 285.4h4v2h-4zM256 286.4h4v2h-4zM502 283.9h4v2h-4zM729 286.0h4v2h-4zM466 285.7h4v2h-4zM222 285.0h4v2h-4zM479 288.5h4v2h-4zM480 285.0h4v2h-4zM357 284.0h4v2h-4zM462 284.8h4v2h-4zM73 284.7h4v2h-4zM92 283.8h4v2h-4zM379 286.1h4v2h-4zM202 286.2h4v2h-4zM329 284.6h4v2h-4zM321 284.4h4v2h-4zM79 287.9h4v2h-4zM703 285.2h4v2h-4zM488 282.6h4v2h-4zM280 285.9h4v2h-4zM496 281.5h4v2h-4zM536 284.9h4v2h-4zM633 284.1h4v2h-4zM175 285.3h4v2h-4zM167 285.0h4v2h-4zM373 286.0h4v2h-4zM757 282.5h4v2h-4zM356 284.9h4v2h-4zM479 283.1h4v2h-4zM549 283.6h4v2h-4zM80 285.3h4v2h-4zM154 284.1h4v2h-4zM354 285.0h4v2h-4zM589 284.9h4v2h-4zM508 285.7h4v2h-4zM64 282.9h4v2h-4zM136 285.2h4v2h-4zM171 283.9h4v2h-4zM238 284.2h4v2h-4zM240 285.8h4v2h-4zM541 282.1h4v2h-4zM621 283.0h4v2h-4zM305 282.1h4v2h-4zM534 285.2h4v2h-4zM343 288.2h4v2h-4zM687 282.8h4v2h-4zM547 286.1h4v2h-4zM178 285.0h4v2h-4zM661 285.1h4v2h-4zM741 285.9h4v2h-4zM237 286.5h4v2h-4zM768 286.1h4v2h-4zM509 284.8h4v2h-4zM382 284.0h4v2h-4zM232 284.8h4v2h-4zM295 284.5h4v2h-4zM272 283.3h4v2h-4zM326 285.1h4v2h-4zM248 283.5h4v2h-4zM73 284.8h4v2h-4zM592 283.0h4v2h-4zM62 287.7h4v2h-4zM429 286.0h4v2h-4zM192 285.9h4v2h-4zM572 285.3h4v2h-4zM228 285.6h4v2h-4zM226 287.1h4v2h-4zM609 282.3h4v2h-4zM158 282.1h4v2h-4zM419 286.3h4v2h-4zM351 285.6h4v2h-4zM370 286.3h4v2h-4zM223 285.3h4v2h-4zM637 283.6h4v2h-4zM327 285.2h4v2h-4zM557 282.7h4v2h-4zM267 282.7h4v2h-4zM639 286.0h4v2h-4zM59 282.6h4v2h-4zM653 287.8h4v2h-4zM163 282.1h4v2h-4zM420 285.9h4v2h-4zM214 283.6h4v2h-4zM524 285.6h4v2h-4zM427 284.3h4v2h-4zM712 286.7h4v2h-4zM214 285.6h4v2h-4zM87 284.7h4v2h-4zM126 287.9h4v2h-4zM124 284.7h4v2h-4zM334 288.3h4v2h-4zM363 286.4h4v2h-4zM694 286.1h4v2h-4zM363 283.9h4v2h-4zM190 283.6h4v2h-4zM315 283.3h4v2h-4zM482 287.2h4v2h-4zM215 286.4h4v2h-4zM158 287.2h4v2h-4zM265 286.5h4v2h-4zM65 286.8h4v2h-4zM513 285.9h4v2h-4zM269 283.8h4v2h-4zM166 281.5h4v2h-4zM508 283.7h4v2h-4zM125 287.3h4v2h-4zM132 288.2h4v2h-4zM560 284.7h4v2h-4zM372 284.5h4v2h-4zM342 284.8h4v2h-4zM569 284.3h4v2h-4zM644 286.2h4v2h-4zM195 285.0h4v2h-4zM413 286.2h4v2h-4zM253 283.2h4v2h-4zM249 283.9h4v2h-4zM471 284.5h4v2h-4zM230 286.0h4v2h-4zM369 283.3h4v2h-4zM66 283.9h4v2h-4zM489 284.7h4v2h-4zM357 284.9h4v2h-4zM177 285.2h4v2h-4zM384 284.8h4v2h-4zM294 288.0h4v2h-4zM717 282.6h4v2h-4zM307 285.8h4v2h-4zM517 283.0h4v2h-4zM190 286.3h4v2h-4zM232 285.4h4v2h-4zM363 287.1h4v2h-4zM141 284.3h4v2h-4zM85 285.0h4v2h-4zM292 286.9h4v2h-4zM275 287.6h4v2h-4zM410 285.4h4v2h-4zM404 283.0h4v2h-4zM751 285.0h4v2h-4zM666 283.3h4v2h-4zM356 283.9h4v2h-4zM653 283.8h4v2h-4zM771 283.3h4v2h-4zM423 286.1h4v2h-4zM78 284.4h4v2h-4zM62 286.3h4v2h-4zM645 280.8h4v2h-4zM600 283.6h4v2h-4zM61 284.1h4v2h-4zM351 282.7h4v2h-4zM550 284.8h4v2h-4zM569 285.8h4v2h-4zM598 281.7h4v2h-4zM448 285.9h4v2h-4zM664 285.4h4v2h-4zM114 287.2h4v2h-4zM549 283.8h4v2h-4zM310 283.5h4v2h-4zM195 285.2h4v2h-4zM315 286.3h4v2h-4zM124 283.6h4v2h-4zM199 283.9h4v2h-4zM615 286.6h4v2h-4zM304 285.6h4v2h-4zM211 285.5h4v2h-4zM416 284.3h4v2h-4zM651 282.0h4v2h-4zM220 286.9h4v2h-4zM99 284.4h4v2h-4zM200 285.0h4v2h-4zM518 284.0h4v2h-4zM491 285.1h4v2h-4zM732 284.0h4v2h-4zM591 285.0h4v2h-4zM222 283.5h4v2h-4zM186 284.3h4v2h-4zM744 286.6h4v2h-4zM409 284.8h4v2h-4zM496 284.9h4v2h-4zM305 284.1h4v2h-4zM129 285.1h4v2h-4zM376 286.7h4v2h-4zM444 284.5h4v2h-4zM654 285.3h4v2h-4zM716 287.6h4v2h-4zM353 284.6h4v2h-4zM254 283.4h4v2h-4zM387 283.6h4v2h-4zM383 287.5h4v2h-4zM529 286.6h4v2h-4zM300 289.6h4v2h-4zM699 285.0h4v2h-4zM130 284.5h4v2h-4zM614 284.1h4v2h-4zM578 285.6h4v2h-4zM524 283.7h4v2h-4zM130 286.6h4v2h-4zM358 283.8h4v2h-4zM288 287.6h4v2h-4zM396 283.7h4v2h-4zM112 283.8h4v2h-4zM298 285.5h4v2h-4zM722 284.6h4v2h-4zM730 287.7h4v2h-4zM596 285.8h4v2h-4zM671 284.8h4v2h-4zM726 284.5h4v2h-4zM371 288.0h4v2h-4zM582 284.8h4v2h-4zM756 282.8h4v2h-4zM118 282.4h4v2h-4zM387 285.4h4v2h-4zM414 285.0h4v2h-4zM123 284.5h4v2h-4zM572 281.0h4v2h-4zM318 283.4h4v2h-4zM62 283.1h4v2h-4zM211 286.1h4v2h-4zM116 282.7h4v2h-4zM132 283.2h4v2h-4zM405 286.8h4v2h-4zM181 285.5h4v2h-4zM535 284.5h4v2h-4zM274 285.9h4v2h-4zM633 285.1h4v2h-4zM117 285.3h4v2h-4zM443 281.9h4v2h-4zM695 284.5h4v2h-4zM704 282.2h4v2h-4zM216 285.5h4v2h-4zM297 285.6h4v2h-4zM649 284.5h4v2h-4zM114 286.7h4v2h-4zM754 284.3h4v2h-4zM217 287.1h4v2h-4zM171 282.0h4v2h-4zM611 284.5h4v2h-4zM726 284.0h4v2h-4zM547 287.4h4v2h-4zM724 282.6h4v2h-4zM689 283.7h4v2h-4zM444 285.1h4v2h-4zM95 284.6h4v2h-4zM666 282.1h4v2h-4zM356 287.7h4v2h-4zM68 286.4h4v2h-4zM592 288.8h4v2h-4zM692 284.5h4v2h-4zM234 284.6h4v2h-4zM553 286.0h4v2h-4zM116 284.3h4v2h-4zM86 286.4h4v2h-4zM524 286.4h4v2h-4zM113 287.0h4v2h-4zM455 286.9h4v2h-4zM660 283.1h4v2h-4zM199 283.0h4v2h-4zM673 284.9h4v2h-4zM540 284.2h4v2h-4zM483 285.2h4v2h-4zM510 285.3h4v2h-4zM268 283.6h4v2h-4zM293 283.6h4v2h-4zM68 281.5h4v2h-4zM579 285.5h4v2h-4zM68 284.4h4v2h-4zM626 285.3h4v2h-4zM130 284.0h4v2h-4zM54 283.7h4v2h-4zM587 285.6h4v2h-4zM646 284.9h4v2h-4zM454 284.5h4v2h-4zM228 282.4h4v2h-4zM517 284.2h4v2h-4zM518 284.7h4v2h-4zM78 282.3h4v2h-4zM703 288.4h4v2h-4zM671 285.3h4v2h-4zM476 281.9h4v2h-4zM547 283.7h4v2h-4zM95 286.8h4v2h-4zM216 285.1h4v2h-4zM750 286.9h4v2h-4zM372 286.8h4v2h-4zM578 286.0h4v2h-4zM279 282.7h4v2h-4zM519 286.3h4v2h-4zM765 284.6h4v2h-4zM338 286.5h4v2h-4zM651 283.1h4v2h-4zM695 284.8h4v2h-4zM532 283.0h4v2h-4zM449 284.9h4v2h-4zM305 284.4h4v2h-4zM577 283.7h4v2h-4zM382 284.0h4v2h-4zM740 285.0h4v2h-4zM310 283.9h4v2h-4zM482 283.7h4v2h-4zM394 284.0h4v2h-4zM517 286.6h4v2h-4zM237 285.9h4v2h-4zM597 284.0h4v2h-4zM761 283.9h4v2h-4zM496 285.3h4v2h-4zM178 284.9h4v2h-4zM248 284.1h4v2h-4zM191 285.8h4v2h-4zM294 282.8h4v2h-4zM168 284.4h4v2h-4zM645 285.2h4v2h-4zM646 286.2h4v2h-4zM666 283.9h4v2h-4zM660 284.7h4v2h-4zM258 283.8h4v2h-4zM300 285.8h4v2h-4zM439 284.8h4v2h-4zM764 287.0h4v2h-4zM386 286.6h4v2h-4zM660 286.1h4v2h-4zM148 287.0h4v2h-4zM603 282.3h4v2h-4zM230 285.5h4v2h-4zM169 281.4h4v2h-4zM645 287.0h4v2h-4zM328 286.6h4v2h-4zM544 286.2h4v2h-4zM95 287.5h4v2h-4zM416 284.0h4v2h-4zM583 283.6h4v2h-4zM73 284.5h4v2h-4zM612 284.9h4v2h-4zM331 283.7h4v2h-4zM577 286.7h4v2h-4zM760 287.9h4v2h-4zM293 285.0h4v2h-4zM319 287.4h4v2h-4zM599 284.4h4v2h-4zM123 283.0h4v2h-4zM409 284.6h4v2h-4zM598 283.9h4v2h-4zM612 286.9h4v2h-4zM321 285.6h4v2h-4zM510 286.1h4v2h-4zM569 287.5h4v2h-4zM339 284.4h4v2h-4zM305 287.4h4v2h-4zM280 286.1h4v2h-4zM705 285.6h4v2h-4zM540 286.3h4v2h-4zM632 286.2h4v2h-4zM580 283.2h4v2h-4zM191 282.7h4v2h-4zM479 284.4h4v2h-4zM228 285.0h4v2h-4zM213 283.4h4v2h-4zM140 283.1h4v2h-4zM357 283.4h4v2h-4zM338 285.0h4v2h-4zM146 284.1h4v2h-4zM444 282.8h4v2h-4zM54 287.5h4v2h-4zM525 281.7h4v2h-4zM650 283.6h4v2h-4zM266 284.9h4v2h-4zM157 285.3h4v2h-4zM197 284.1h4v2h-4zM658 284.4h4v2h-4zM325 286.2h4v2h-4zM120 286.5h4v2h-4zM741 283.3h4v2h-4zM252 285.1h4v2h-4zM538 283.6h4v2h-4zM78 283.1h4v2h-4zM103 284.4h4v2h-4zM730 284.9h4v2h-4zM87 284.6h4v2h-4zM506 285.5h4v2h-4zM90 283.2h4v2h-4zM97 285.4h4v2h-4zM276 285.3h4v2h-4zM101 285.8h4v2h-4zM259 284.3h4v2h-4zM61 284.0h4v2h-4zM226 284.0h4v2h-4zM191 283.4h4v2h-4zM328 283.6h4v2h-4zM608 287.1h4v2h-4zM494 285.9h4v2h-4zM126 285.4h4v2h-4zM257 282.6h4v2h-4zM699 283.3h4v2h-4zM364 283.5h4v2h-4zM53 285.0h4v2h-4zM204 285.7h4v2h-4zM682 285.6h4v2h-4zM195 285.6h4v2h-4zM732 286.1h4v2h-4zM311 284.8h4v2h-4zM505 284.1h4v2h-4zM362 287.2h4v2h-4zM61 282.0h4v2h-4zM665 281.9h4v2h-4zM236 284.8h4v2h-4zM169 284.4h4v2h-4zM247 285.8h4v2h-4zM528 283.9h4v2h-4zM169 283.5h4v2h-4zM84 284.5h4v2h-4zM579 287.0h4v2h-4zM125 285.0h4v2h-4zM637 283.9h4v2h-4zM85 282.9h4v2h-4zM173 284.8h4v2h-4zM308 284.4h4v2h-4zM187 283.4h4v2h-4zM374 284.0h4v2h-4zM173 283.8h4v2h-4zM729 283.7h4v2h-4zM209 283.3h4v2h-4zM174 283.4h4v2h-4zM539 287.3h4v2h-4zM502 279.9h4v2h-4zM153 285.9h4v2h-4zM616 286.1h4v2h-4zM700 284.1h4v2h-4zM229 287.4h4v2h-4zM571 285.7h4v2h-4zM483 285.1h4v2h-4zM611 284.3h4v2h-4zM520 283.7h4v2h-4zM656 285.3h4v2h-4zM63 282.6h4v2h-4zM108 284.7h4v2h-4zM745 283.3h4v2h-4zM319 284.8h4v2h-4zM363 283.7h4v2h-4zM242 284.7h4v2h-4zM91 285.6h4v2h-4zM155 281.1h4v2h-4zM341 285.2h4v2h-4zM70 287.4h4v2h-4zM520 285.7h4v2h-4zM656 283.5h4v2h-4zM361 286.1h4v2h-4zM53 284.3h4v2h-4zM133 283.3h4v2h-4zM237 285.6h4v2h-4zM738 284.4h4v2h-4zM136 284.2h4v2h-4zM525 285.2h4v2h-4zM613 282.5h4v2h-4zM163 284.8h4v2h-4zM226 285.7h4v2h-4zM486 284.9h4v2h-4zM200 285.9h4v2h-4zM576 285.2h4v2h-4zM555 285.5h4v2h-4zM95 281.7h4v2h-4zM576 285.8h4v2h-4zM364 283.0h4v2h-4zM182 283.1h4v2h-4zM643 283.1h4v2h-4zM191 285.2h4v2h-4zM692 281.7h4v2h-4zM211 283.6h4v2h-4zM489 286.6h4v2h-4zM658 286.4h4v2h-4zM312 284.5h4v2h-4zM308 286.5h4v2h-4zM626 284.6h4v2h-4zM521 285.7h4v2h-4zM391 284.5h4v2h-4zM444 284.8h4v2h-4zM518 284.5h4v2h-4zM669 285.9h4v2h-4zM462 285.0h4v2h-4zM574 288.0h4v2h-4zM679 284.0h4v2h-4zM482 286.6h4v2h-4zM87 285.3h4v2h-4zM640 284.0h4v2h-4zM626 284.9h4v2h-4zM631 285.0h4v2h-4zM768 284.8h4v2h-4zM590 285.7h4v2h-4zM258 286.7h4v2h-4zM381 283.7h4v2h-4zM187 283.3h4v2h-4zM102 284.3h4v2h-4zM455 281.6h4v2h-4zM374 284.4h4v2h-4zM694 284.2h4v2h-4zM265 288.1h4v2h-4zM450 283.0h4v2h-4zM308 284.8h4v2h-4zM252 286.5h4v2h-4zM419 286.9h4v2h-4zM505 285.4h4v2h-4zM644 286.0h4v2h-4z" fill="#3f68ad" fill-opacity="0.4"/></g></g><rect x="52" y="180" width="2" height="130" fill="#919191"/><rect x="52" y="308" width="728" height="2" fill="#919191"/><rect x="887" y="182" width="725" height="125" fill="#fafafa"/><g clip-path="url(#c2)"><polyline points="886.0,244.1 891.7,286.9 897.4,247.0 903.1,286.4 908.9,234.7 914.6,284.7 920.3,243.0 926.0,284.7 931.7,241.0 937.4,285.1 943.2,244.4 948.9,286.2 954.6,250.7 960.3,286.8 966.0,253.1 971.7,287.5 977.5,245.9 983.2,284.8 988.9,240.5 994.6,286.6 1000.3,251.1 1006.0,287.7 1011.8,240.5 1017.5,287.9 1023.2,287.9 1028.9,238.5 1034.6,285.3 1040.3,246.1 1046.1,286.9 1051.8,251.5 1057.5,286.1 1063.2,253.0 1068.9,286.9 1074.6,246.4 1080.4,286.3 1086.1,285.2 1091.8,237.8 1097.5,285.3 1103.2,250.7 1108.9,286.1 1114.7,235.4 1120.4,285.5 1126.1,248.6 1131.8,286.7 1137.5,286.9 1143.2,287.8 1149.0,252.6 1154.7,287.6 1160.4,287.7 1166.1,251.9 1171.8,286.8 1177.5,243.8 1183.3,285.6 1189.0,286.1 1194.7,286.2 1200.4,239.0 1206.1,285.4 1211.8,249.4 1217.6,285.0 1223.3,236.5 1229.0,286.4 1234.7,243.1 1240.4,287.2 1246.1,238.3 1251.9,285.1 1257.6,238.9 1263.3,287.3 1269.0,251.8 1274.7,287.0 1280.4,236.3 1286.2,284.9 1291.9,253.4 1297.6,285.2 1303.3,234.6 1309.0,285.7 1314.7,251.8 1320.5,285.4 1326.2,252.3 1331.9,287.4 1337.6,244.3 1343.3,284.7 1349.0,244.2 1354.8,285.7 1360.5,241.0 1366.2,287.2 1371.9,240.5 1377.6,284.8 1383.3,285.4 1389.1,286.1 1394.8,284.8 1400.5,249.3 1406.2,285.9 1411.9,285.3 1417.6,248.9 1423.4,285.5 1429.1,243.7 1434.8,286.3 1440.5,244.0 1446.2,285.2 1451.9,253.9 1457.7,286.7 1463.4,251.1 1469.1,286.4 1474.8,285.3 1480.5,247.5 1486.2,284.6 1492.0,246.9 1497.7,287.4 1503.4,286.2 1509.1,244.3 1514.8,287.6 1520.5,239.4 1526.3,287.6 1532.0,246.6 1537.7,287.9 1543.4,241.4 1549.1,285.0 1554.8,250.4 1560.6,287.7 1566.3,285.4 1572.0,236.6 1577.7,285.4 1583.4,285.6 1589.1,246.3 1594.9,285.7 1600.6,238.3 1606.3,284.6 1612.0,237.6" fill="none" stroke="#4b917f" stroke-width="2.8" stroke-linejoin="miter" stroke-miterlimit="3" /><polyline points="886.0,237.2 891.7,240.0 897.4,230.5 903.1,228.3 908.9,285.4 914.6,241.7 920.3,227.2 926.0,217.1 931.7,221.5 937.4,240.1 943.2,283.8 948.9,239.1 954.6,236.3 960.3,238.8 966.0,239.8 971.7,231.5 977.5,240.8 983.2,220.3 988.9,220.2 994.6,235.9 1000.3,226.9 1006.0,224.7 1011.8,218.5 1017.5,237.4 1023.2,232.7 1028.9,226.7 1034.6,228.4 1040.3,221.3 1046.1,234.5 1051.8,221.0 1057.5,235.6 1063.2,234.0 1068.9,223.0 1074.6,233.7 1080.4,217.5 1086.1,220.7 1091.8,230.2 1097.5,285.8 1103.2,218.8 1108.9,232.5 1114.7,239.3 1120.4,231.6 1126.1,227.2 1131.8,232.2 1137.5,237.2 1143.2,226.8 1149.0,233.2 1154.7,235.5 1160.4,231.3 1166.1,240.2 1171.8,235.8 1177.5,285.2 1183.3,228.0 1189.0,224.4 1194.7,226.3 1200.4,235.8 1206.1,235.6 1211.8,229.8 1217.6,221.8 1223.3,286.5 1229.0,229.2 1234.7,235.9 1240.4,238.1 1246.1,225.2 1251.9,230.8 1257.6,230.5 1263.3,234.5 1269.0,217.9 1274.7,236.4 1280.4,239.9 1286.2,224.7 1291.9,229.8 1297.6,225.3 1303.3,285.1 1309.0,223.2 1314.7,229.0 1320.5,239.0 1326.2,217.7 1331.9,239.3 1337.6,285.5 1343.3,230.0 1349.0,232.9 1354.8,219.9 1360.5,239.0 1366.2,224.0 1371.9,218.1 1377.6,236.0 1383.3,235.7 1389.1,232.4 1394.8,239.0 1400.5,232.4 1406.2,219.3 1411.9,224.5 1417.6,236.2 1423.4,225.5 1429.1,224.9 1434.8,241.4 1440.5,231.9 1446.2,241.2 1451.9,233.0 1457.7,285.0 1463.4,240.3 1469.1,241.0 1474.8,225.4 1480.5,217.8 1486.2,228.6 1492.0,283.9 1497.7,233.1 1503.4,230.7 1509.1,231.4 1514.8,236.0 1520.5,223.6 1526.3,239.3 1532.0,234.1 1537.7,236.8 1543.4,235.7 1549.1,235.8 1554.8,236.9 1560.6,231.2 1566.3,234.2 1572.0,217.6 1577.7,231.5 1583.4,283.3 1589.1,229.8 1594.9,236.8 1600.6,223.1 1606.3,217.0 1612.0,287.7" fill="none" stroke="#cd8150" stroke-width="2.8" stroke-linejoin="miter" stroke-miterlimit="3" /><polyline points="886.0,213.1 891.7,204.1 897.4,218.6 903.1,221.8 908.9,261.4 914.6,203.5 920.3,189.5 926.0,204.5 931.7,215.4 937.4,221.6 943.2,262.3 948.9,216.5 954.6,207.1 960.3,205.0 966.0,189.4 971.7,211.0 977.5,214.2 983.2,220.2 988.9,212.5 994.6,193.4 1000.3,213.6 1006.0,222.3 1011.8,188.7 1017.5,190.2 1023.2,210.7 1028.9,195.0 1034.6,217.4 1040.3,222.3 1046.1,199.4 1051.8,208.7 1057.5,213.9 1063.2,192.7 1068.9,208.8 1074.6,211.5 1080.4,208.1 1086.1,187.1 1091.8,214.8 1097.5,262.0 1103.2,187.3 1108.9,196.0 1114.7,219.2 1120.4,213.7 1126.1,204.6 1131.8,219.7 1137.5,213.1 1143.2,221.2 1149.0,215.7 1154.7,223.0 1160.4,211.7 1166.1,218.3 1171.8,212.1 1177.5,260.5 1183.3,201.0 1189.0,187.6 1194.7,213.2 1200.4,215.9 1206.1,218.9 1211.8,218.3 1217.6,213.4 1223.3,258.6 1229.0,217.8 1234.7,222.1 1240.4,204.4 1246.1,210.6 1251.9,207.5 1257.6,215.9 1263.3,200.9 1269.0,217.1 1274.7,207.5 1280.4,216.6 1286.2,219.6 1291.9,211.1 1297.6,197.6 1303.3,267.1 1309.0,216.7 1314.7,217.3 1320.5,220.1 1326.2,222.6 1331.9,208.0 1337.6,267.8 1343.3,216.4 1349.0,217.5 1354.8,193.7 1360.5,222.6 1366.2,214.1 1371.9,204.1 1377.6,199.2 1383.3,208.8 1389.1,210.1 1394.8,217.5 1400.5,217.6 1406.2,204.0 1411.9,191.5 1417.6,207.0 1423.4,216.2 1429.1,213.0 1434.8,208.4 1440.5,209.0 1446.2,201.4 1451.9,217.2 1457.7,266.5 1463.4,217.5 1469.1,221.0 1474.8,213.8 1480.5,218.6 1486.2,207.5 1492.0,259.7 1497.7,211.7 1503.4,204.8 1509.1,203.6 1514.8,211.8 1520.5,200.5 1526.3,221.6 1532.0,209.9 1537.7,206.2 1543.4,189.4 1549.1,188.8 1554.8,222.3 1560.6,216.3 1566.3,209.3 1572.0,210.6 1577.7,222.4 1583.4,264.3 1589.1,215.4 1594.9,208.3 1600.6,208.8 1606.3,213.1 1612.0,267.8" fill="none" stroke="#a97fc1" stroke-width="2.8" stroke-linejoin="miter" stroke-miterlimit="3" /><rect x="886" y="300" width="725.5" height="2.2" fill="#6387c6"/></g><rect x="884" y="180" width="2" height="130" fill="#919191"/><rect x="884" y="308" width="728" height="2" fill="#919191"/><rect x="52" y="362" width="354" height="76" fill="#fafafa"/><polygon points="50,440 52,438 406,438 408,440" fill="#d2d2d2"/><rect x="426" y="362" width="354" height="76" fill="#fafafa"/><polygon points="424,440 426,438 780,438 782,440" fill="#d2d2d2"/><rect x="884" y="362" width="354" height="76" fill="#fafafa"/><polygon points="882,440 884,438 1238,438 1240,440" fill="#d2d2d2"/><g clip-path="url(#c3)"><polyline points="52.5,432.0 52.5,424.2 58.8,425.5 66.2,423.4 70.0,424.8 73.8,423.6 78.8,426.0 86.2,424.6 92.5,427.5 93.8,430.4 99.5,423.4 107.0,425.0 113.0,422.8 114.5,424.5 122.0,422.1 125.0,425.1 128.8,424.4 135.0,426.1 143.0,426.4 146.2,425.0 150.8,426.4 156.2,423.8 161.2,424.9 166.2,423.4 172.5,425.1 177.0,423.1 184.5,426.5 187.5,425.2 193.8,424.8 200.0,429.5 203.0,424.5 208.8,424.9 216.2,423.0 218.8,425.2 225.0,423.5 232.5,423.6 235.0,426.1 238.0,425.1 246.2,427.2 251.2,425.8 257.0,426.5 261.2,423.2 263.8,424.8 269.5,423.2 278.8,425.1 282.0,423.5 288.8,423.5 292.0,426.8 296.2,424.8 305.0,428.4 308.0,422.9 312.5,424.6 318.8,423.1 326.2,426.0 328.8,423.6 337.5,424.9 341.2,423.2 343.0,426.6 348.8,424.6 353.8,426.1 360.0,426.2 367.0,423.2 372.5,424.9 374.5,423.8 380.5,425.2 390.0,423.0 398.8,426.2 405.0,425.8 405.5,429.8" fill="none" stroke="#cd8150" stroke-width="2.3" stroke-linejoin="miter" stroke-miterlimit="3" /><polyline points="52.5,422.5 52.5,376.2 58.8,382.5 66.2,372.0 70.0,378.8 73.8,373.0 78.8,385.0 86.2,378.0 92.5,392.5 93.8,407.0 99.5,372.0 107.0,380.0 113.0,368.8 114.5,377.5 122.0,365.5 125.0,380.5 128.8,377.0 135.0,385.5 143.0,387.0 146.2,380.0 150.8,387.0 156.2,373.8 161.2,379.5 166.2,372.0 172.5,380.5 177.0,370.5 184.5,387.5 187.5,381.2 193.8,378.8 200.0,402.5 203.0,377.5 208.8,379.5 216.2,370.0 218.8,381.2 225.0,372.5 232.5,373.0 235.0,385.5 238.0,380.5 246.2,391.2 251.2,383.8 257.0,387.5 261.2,371.2 263.8,378.8 269.5,371.2 278.8,380.5 282.0,372.5 288.8,372.5 292.0,388.8 296.2,378.8 305.0,397.0 308.0,369.5 312.5,378.0 318.8,370.5 326.2,385.0 328.8,373.0 337.5,379.5 341.2,371.2 343.0,388.0 348.8,378.0 353.8,385.5 360.0,386.2 367.0,371.2 372.5,379.5 374.5,373.8 380.5,381.2 390.0,370.0 398.8,386.2 405.0,383.8 405.5,403.8" fill="none" stroke="#a97fc1" stroke-width="2.5" stroke-linejoin="miter" stroke-miterlimit="3" /></g><g clip-path="url(#c4)"><polyline points="427.0,376.0 431.5,376.4 435.9,423.0 440.4,380.0 444.9,423.8 449.3,367.2 453.8,370.9 458.3,380.5 462.7,377.6 467.2,424.0 471.7,370.7 476.2,421.0 480.6,423.2 485.1,421.3 489.6,377.1 494.0,372.3 498.5,370.9 503.0,419.9 507.4,378.7 511.9,373.7 516.4,423.0 520.8,373.3 525.3,382.8 529.8,420.6 534.2,376.3 538.7,374.3 543.2,380.9 547.6,423.1 552.1,423.7 556.6,422.0 561.1,382.4 565.5,380.2 570.0,378.5 574.5,380.6 578.9,420.0 583.4,368.0 587.9,369.1 592.3,422.3 596.8,367.6 601.3,423.8 605.7,378.7 610.2,375.7 614.7,422.5 619.1,378.0 623.6,379.6 628.1,420.9 632.5,377.2 637.0,420.9 641.5,380.4 645.9,376.6 650.4,421.5 654.9,367.2 659.4,369.7 663.8,381.3 668.3,373.9 672.8,420.9 677.2,374.9 681.7,423.8 686.2,371.4 690.6,421.5 695.1,421.3 699.6,419.2 704.0,379.7 708.5,367.4 713.0,367.8 717.4,422.3 721.9,420.0 726.4,374.6 730.8,372.5 735.3,422.8 739.8,419.4 744.3,374.3 748.7,376.1 753.2,421.3 757.7,423.1 762.1,381.4 766.6,379.7 771.1,420.7 775.5,379.3 780.0,419.3" fill="none" stroke="#a97fc1" stroke-width="2.4" stroke-linejoin="miter" stroke-miterlimit="3" /><polyline points="427.0,421.3 431.5,375.7 435.9,372.2 440.4,419.2 444.9,422.1 449.3,368.0 453.8,374.9 458.3,377.9 462.7,371.7 467.2,422.5 471.7,368.2 476.2,420.9 480.6,370.6 485.1,421.0 489.6,420.3 494.0,422.8 498.5,368.0 503.0,374.6 507.4,377.9 511.9,371.6 516.4,382.0 520.8,422.2 525.3,371.4 529.8,368.2 534.2,377.2 538.7,421.4 543.2,369.6 547.6,370.2 552.1,383.2 556.6,368.8 561.1,379.0 565.5,420.5 570.0,370.9 574.5,420.4 578.9,371.6 583.4,373.3 587.9,382.1 592.3,421.9 596.8,382.5 601.3,377.8 605.7,384.0 610.2,423.5 614.7,423.6 619.1,423.4 623.6,421.9 628.1,422.0 632.5,423.4 637.0,421.9 641.5,379.8 645.9,370.9 650.4,423.6 654.9,378.5 659.4,422.3 663.8,378.3 668.3,423.6 672.8,420.6 677.2,423.2 681.7,369.9 686.2,374.0 690.6,381.3 695.1,367.5 699.6,421.9 704.0,369.3 708.5,420.2 713.0,421.2 717.4,423.8 721.9,370.0 726.4,419.9 730.8,421.6 735.3,380.5 739.8,422.6 744.3,423.5 748.7,423.0 753.2,420.0 757.7,422.6 762.1,423.9 766.6,382.5 771.1,374.5 775.5,367.5 780.0,419.9" fill="none" stroke="#cd8150" stroke-width="2.5" stroke-linejoin="miter" stroke-miterlimit="3" /><rect x="426" y="420.5" width="354" height="16.5" fill="#c4908a"/><polyline points="429.2,424.8 433.4,435.2 437.5,433.6 441.7,423.1 445.8,422.1 450.0,434.1 454.1,432.8 458.3,423.8 462.4,423.1 466.6,424.6 470.7,422.7 474.9,424.6 479.0,431.1 483.2,431.7 487.3,423.4 491.5,423.4 495.6,432.0 499.8,432.6 504.0,431.5 508.1,422.4 512.3,424.9 516.4,432.3 520.6,423.6 524.7,431.8 528.9,432.8 533.0,421.1 537.2,435.9 541.3,431.5 545.5,422.8 549.6,434.4 553.8,433.5 557.9,423.5 562.1,421.0 566.2,434.2 570.4,424.2 574.6,422.2 578.7,433.8 582.9,433.5 587.0,433.2 591.2,421.3 595.3,423.2 599.5,423.2 603.6,422.3 607.8,432.1 611.9,423.0 616.1,435.2 620.2,424.7 624.4,423.1 628.5,431.1 632.7,423.4 636.8,433.4 641.0,422.6 645.2,423.6 649.3,422.7 653.5,423.1 657.6,433.6 661.8,424.2 665.9,433.0 670.1,423.7 674.2,422.8 678.4,424.0 682.5,432.7 686.7,431.2 690.8,432.7 695.0,422.3 699.1,431.9 703.3,431.8 707.4,423.3 711.6,432.8 715.8,432.3 719.9,424.0 724.1,434.4 728.2,432.9 732.4,434.9 736.5,433.4 740.7,423.1 744.8,424.0 749.0,423.8 753.1,424.5 757.3,433.7 761.4,433.0 765.6,435.7 769.7,432.8 773.9,421.8 778.0,431.7 782.2,432.2" fill="none" stroke="#b5655a" stroke-width="1.6" stroke-linejoin="miter" stroke-miterlimit="3" /><polyline points="427.7,433.6 431.9,424.3 436.0,424.6 440.2,423.4 444.3,433.1 448.5,424.7 452.6,432.1 456.8,423.0 460.9,421.6 465.1,432.6 469.2,423.9 473.4,433.8 477.5,425.0 481.7,424.4 485.8,422.7 490.0,424.0 494.1,435.5 498.3,434.9 502.5,431.4 506.6,435.8 510.8,434.5 514.9,432.0 519.1,424.9 523.2,435.7 527.4,432.4 531.5,423.7 535.7,432.6 539.8,422.9 544.0,431.3 548.1,433.1 552.3,424.8 556.4,422.1 560.6,421.8 564.7,421.3 568.9,423.0 573.1,431.8 577.2,424.5 581.4,421.9 585.5,423.9 589.7,422.3 593.8,433.8 598.0,422.1 602.1,423.2 606.3,434.7 610.4,434.4 614.6,424.3 618.7,435.0 622.9,432.0 627.0,421.6 631.2,421.7 635.3,435.7 639.5,424.8 643.7,423.1 647.8,422.0 652.0,436.0 656.1,431.4 660.3,423.2 664.4,433.5 668.6,431.7 672.7,423.8 676.9,434.7 681.0,435.7 685.2,423.7 689.3,431.6 693.5,434.5 697.6,424.2 701.8,423.0 705.9,421.6 710.1,422.7 714.3,422.0 718.4,422.2 722.6,421.1 726.7,421.6 730.9,423.3 735.0,434.1 739.2,433.8 743.3,434.7 747.5,435.9 751.6,436.0 755.8,424.6 759.9,431.3 764.1,432.6 768.2,431.3 772.4,423.2 776.5,432.4 780.7,434.5" fill="none" stroke="#a97fc1" stroke-width="2.2" stroke-linejoin="miter" stroke-miterlimit="3" /><polyline points="428.5,430.8 432.7,424.2 436.8,435.1 441.0,424.0 445.1,430.4 449.3,425.7 453.4,430.1 457.6,422.5 461.7,433.2 465.9,425.2 470.0,431.4 474.2,425.2 478.3,432.1 482.5,422.8 486.6,432.3 490.8,423.8 494.9,435.1 499.1,425.6 503.3,432.4 507.4,422.2 511.6,436.0 515.7,423.6 519.9,433.0 524.0,425.8 528.2,432.6 532.3,425.7 536.5,434.1 540.6,423.7 544.8,431.5 548.9,423.5 553.1,436.0 557.2,423.4 561.4,433.9 565.5,424.2 569.7,432.0 573.9,423.6 578.0,430.6 582.2,422.3 586.3,432.1 590.5,423.2 594.6,432.3 598.8,425.5 602.9,430.4 607.1,424.5 611.2,432.0 615.4,423.6 619.5,433.1 623.7,423.5 627.8,431.8 632.0,422.4 636.1,432.4 640.3,424.2 644.5,433.2 648.6,423.8 652.8,433.1 656.9,425.4 661.1,434.5 665.2,422.1 669.4,430.4 673.5,423.5 677.7,433.8 681.8,424.9 686.0,430.6 690.1,422.9 694.3,431.2 698.4,423.3 702.6,432.3 706.7,424.0 710.9,432.9 715.1,424.9 719.2,434.9 723.4,422.3 727.5,434.6 731.7,423.1 735.8,432.8 740.0,423.6 744.1,434.4 748.3,423.0 752.4,435.6 756.6,424.3 760.7,431.8 764.9,423.2 769.0,435.2 773.2,424.8 777.3,434.9 781.5,425.4" fill="none" stroke="#8a7a3c" stroke-width="2.4" stroke-linejoin="miter" stroke-miterlimit="3" /><polyline points="427.0,424.8 431.2,433.3 435.3,423.3 439.5,433.6 443.6,424.4 447.8,435.1 451.9,424.7 456.1,434.4 460.2,423.4 464.4,434.5 468.5,432.0 472.7,434.0 476.8,424.2 481.0,432.2 485.1,422.3 489.3,432.2 493.4,422.3 497.6,432.5 501.8,424.7 505.9,425.2 510.1,423.4 514.2,432.5 518.4,433.7 522.5,434.2 526.7,424.1 530.8,432.6 535.0,423.4 539.1,435.1 543.3,425.4 547.4,432.1 551.6,423.9 555.7,434.0 559.9,433.5 564.0,431.9 568.2,423.2 572.4,434.5 576.5,423.3 580.7,434.6 584.8,422.5 589.0,434.7 593.1,423.4 597.3,434.5 601.4,424.8 605.6,422.3 609.7,423.4 613.9,435.2 618.0,434.1 622.2,435.5 626.3,424.6 630.5,422.1 634.6,425.1 638.8,423.2 643.0,423.3 647.1,425.2 651.3,425.0 655.4,434.8 659.6,422.3 663.7,433.3 667.9,434.2 672.0,431.5 676.2,432.1 680.3,432.3 684.5,422.5 688.6,431.9 692.8,432.1 696.9,434.0 701.1,422.4 705.2,432.9 709.4,422.5 713.6,423.6 717.7,422.4 721.9,433.7 726.0,424.2 730.2,433.6 734.3,433.9 738.5,434.9 742.6,422.2 746.8,434.9 750.9,424.3 755.1,434.5 759.2,422.9 763.4,432.4 767.5,432.3 771.7,434.0 775.8,423.1 780.0,432.2" fill="none" stroke="#6c9d58" stroke-width="2.9" stroke-linejoin="miter" stroke-miterlimit="3" /></g><g clip-path="url(#c5)"><polyline points="884.2,401.2 884.5,374.5 890.0,370.0 897.5,392.5 903.0,374.5 904.5,383.0 912.5,376.2 918.8,388.0 922.5,373.8 930.8,370.5 933.0,380.0 935.0,372.0 945.0,378.0 950.5,371.2 952.0,383.8 961.2,375.5 967.5,406.2 972.0,375.5 981.2,380.0 987.0,368.8 989.5,377.5 996.2,365.5 998.8,380.5 1003.0,376.2 1013.0,387.5 1017.5,380.5 1020.5,385.0 1026.2,373.0 1030.0,378.0 1038.0,379.5 1041.2,368.8 1048.0,379.5 1051.2,370.0 1058.8,386.2 1062.0,380.5 1068.0,375.5 1073.8,403.8 1077.0,373.8 1083.8,377.0 1090.5,368.8 1093.0,379.5 1099.5,370.5 1102.0,377.0 1108.0,370.5 1113.8,383.8 1120.5,388.0 1126.2,380.0 1131.2,386.2 1135.0,364.5 1142.5,381.2 1143.8,369.5 1152.5,378.0 1155.0,370.5 1163.0,371.2 1166.2,387.0 1169.5,377.5 1175.5,386.2 1180.8,407.0 1185.0,370.0 1193.8,382.5 1196.2,372.0 1201.2,381.2 1211.2,369.5 1215.8,368.0 1217.0,388.8 1223.8,375.5 1226.2,386.2 1237.0,382.0 1237.5,415.5" fill="none" stroke="#a97fc1" stroke-width="2.5" stroke-linejoin="miter" stroke-miterlimit="3" /><rect x="884" y="433" width="353" height="2" fill="#cd8150"/></g><g transform="translate(192,506)"><g clip-path="url(#ca)"><rect width="32" height="32" fill="#e1e1e3"/><path d="M6 32 Q7 24.5 12 23.5 L20 23.5 Q25 24.5 26 32Z" fill="#cdcdcd"/><ellipse cx="15.9" cy="12" rx="7.6" ry="11" fill="#c6c6c7" stroke="#3b3b3b" stroke-width="1"/><path d="M8.5 13.5 Q8.6 22.6 15.9 23.2 Q23.2 22.6 23.3 13.5 Q22.3 17.2 19.6 16.6 Q15.9 15.2 12.2 16.6 Q9.5 17.2 8.5 13.5Z" fill="#3d3d3d"/><ellipse cx="15.9" cy="18.6" rx="2.7" ry="1.9" fill="#8f8f8f"/><path d="M9 2.2 Q15.9 -1.5 22.8 2.2 Q19 0.6 15.9 0.8 Q12 0.6 9 2.2Z" fill="#3b3b3b"/><rect x="10" y="9" width="5" height="3" rx="1" fill="#b4b4b4" stroke="#7d7d7d" stroke-width="0.6"/><rect x="16.8" y="9" width="5" height="3" rx="1" fill="#b4b4b4" stroke="#7d7d7d" stroke-width="0.6"/><path d="M3.5 26.4 Q8 25.2 10.8 27 Q16 32.2 21.2 27 Q24 25.2 28.5 26.4 L32 33 L0 33Z" fill="#1b1b1b"/></g><circle cx="16" cy="16" r="15.6" fill="none" stroke="#d9d9db" stroke-width="0.6"/></g><g transform="translate(1024,522)"><g clip-path="url(#ca)"><rect width="32" height="32" fill="#e1e1e3"/><path d="M6 32 Q7 24.5 12 23.5 L20 23.5 Q25 24.5 26 32Z" fill="#cdcdcd"/><ellipse cx="15.9" cy="12" rx="7.6" ry="11" fill="#c6c6c7" stroke="#3b3b3b" stroke-width="1"/><path d="M8.5 13.5 Q8.6 22.6 15.9 23.2 Q23.2 22.6 23.3 13.5 Q22.3 17.2 19.6 16.6 Q15.9 15.2 12.2 16.6 Q9.5 17.2 8.5 13.5Z" fill="#3d3d3d"/><ellipse cx="15.9" cy="18.6" rx="2.7" ry="1.9" fill="#8f8f8f"/><path d="M9 2.2 Q15.9 -1.5 22.8 2.2 Q19 0.6 15.9 0.8 Q12 0.6 9 2.2Z" fill="#3b3b3b"/><rect x="10" y="9" width="5" height="3" rx="1" fill="#b4b4b4" stroke="#7d7d7d" stroke-width="0.6"/><rect x="16.8" y="9" width="5" height="3" rx="1" fill="#b4b4b4" stroke="#7d7d7d" stroke-width="0.6"/><path d="M3.5 26.4 Q8 25.2 10.8 27 Q16 32.2 21.2 27 Q24 25.2 28.5 26.4 L32 33 L0 33Z" fill="#1b1b1b"/></g><circle cx="16" cy="16" r="15.6" fill="none" stroke="#d9d9db" stroke-width="0.6"/></g></svg><div class="badge" style="left:360px;top:278px;width:114px;height:40px"></div><div class="badge" style="left:1192px;top:278px;width:114px;height:40px"></div><div class="t" style="left:102px;top:81px;font-size:32px;line-height:32px;letter-spacing:0.15px;color:#1f2a38;-webkit-text-stroke:1.1px #1f2a38;">Data team starter queries</div><div class="t" style="left:934.4px;top:81px;font-size:32px;line-height:32px;letter-spacing:0.157px;color:#1f2a38;-webkit-text-stroke:1.1px #1f2a38;">App team starter queries</div><div class="t" style="left:53.3px;top:147px;font-size:28px;line-height:28px;letter-spacing:-0.192px;color:#1f2a38;-webkit-text-stroke:0.9px #1f2a38;">MySQL latency</div><div class="t" style="left:74.1px;top:192px;font-size:28px;line-height:28px;letter-spacing:-0.037px;color:#1f2a38;-webkit-text-stroke:0.9px #1f2a38;">HEATMAP(duration_ms)</div><div class="t" style="left:53px;top:327px;font-size:28px;line-height:28px;letter-spacing:-0.067px;color:#1f2a38;-webkit-text-stroke:0.9px #1f2a38;">Redis error rate</div><div class="t" style="left:427.75px;top:327px;font-size:28px;line-height:28px;letter-spacing:-0.153px;color:#1f2a38;-webkit-text-stroke:0.9px #1f2a38;">Slowest SQL queries</div><div class="t" style="left:49.3px;top:467px;font-size:28px;line-height:28px;letter-spacing:0.147px;color:#333333;">No description set</div><div class="t" style="left:50.3px;top:509px;font-size:28px;line-height:28px;letter-spacing:-0.487px;color:#6e6e6e;">3 Queries</div><div class="t" style="left:231.9px;top:507px;font-size:28px;line-height:28px;letter-spacing:-0.119px;color:#6e6e6e;">Irving Popovetsky</div><div class="t" style="left:885px;top:147px;font-size:28px;line-height:28px;letter-spacing:0.054px;color:#1f2a38;-webkit-text-stroke:0.9px #1f2a38;">Latency breakdown by endpoint</div><div class="t" style="left:906px;top:192px;font-size:28px;line-height:28px;letter-spacing:0.16px;color:#1f2a38;-webkit-text-stroke:0.9px #1f2a38;">P99(duration_ms)</div><div class="t" style="left:887px;top:327px;font-size:28px;line-height:28px;letter-spacing:-0.217px;color:#1f2a38;-webkit-text-stroke:0.9px #1f2a38;">App status code breakdo…</div><div class="t" style="left:881.3px;top:483px;font-size:28px;line-height:28px;letter-spacing:0.147px;color:#333333;">No description set</div><div class="t" style="left:882.3px;top:525px;font-size:28px;line-height:28px;letter-spacing:-0.487px;color:#6e6e6e;">2 Queries</div><div class="t" style="left:1063.9px;top:523px;font-size:28px;line-height:28px;letter-spacing:-0.119px;color:#6e6e6e;">Irving Popovetsky</div><div class="t" style="left:369.9px;top:285px;font-size:28px;line-height:28px;letter-spacing:0.033px;color:#ffffff;-webkit-text-stroke:0.7px #ffffff;">2 hours</div><div class="t" style="left:1201.9px;top:285px;font-size:28px;line-height:28px;letter-spacing:0.033px;color:#ffffff;-webkit-text-stroke:0.7px #ffffff;">2 hours</div></body></html>
